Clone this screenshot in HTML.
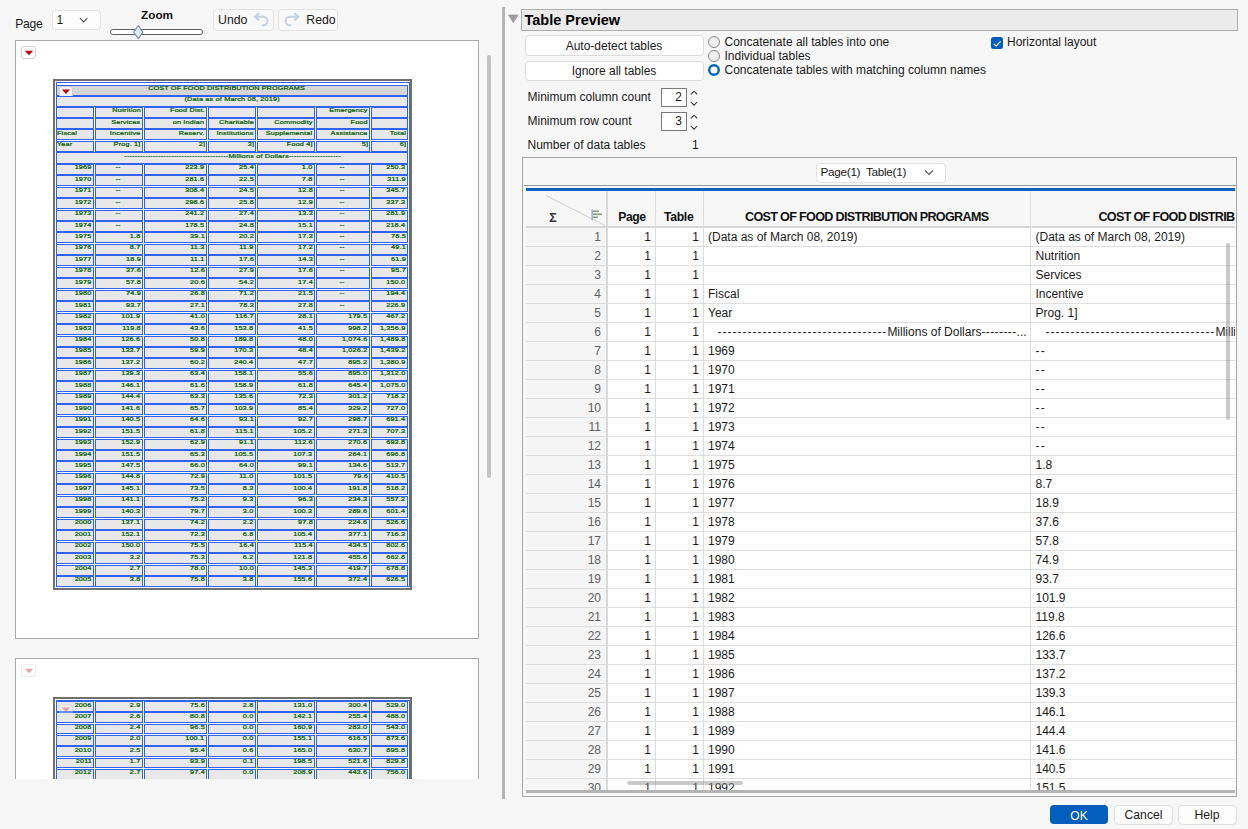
<!DOCTYPE html>
<html><head><meta charset="utf-8"><style>
html,body{margin:0;padding:0;}
body{width:1248px;height:829px;background:#f7f7f7;position:relative;overflow:hidden;font-family:"Liberation Sans", sans-serif;color:#1a1a1a;}
.r{position:absolute;}
.t{position:absolute;white-space:nowrap;font-family:"Liberation Sans", sans-serif;}
</style></head><body>
<div class="t" style="left:15.3px;top:17.86px;font-size:12.1px;line-height:12.1px;font-weight:normal;color:#1a1a1a;letter-spacing:-0.3px;">Page</div><div class="r" style="left:51.5px;top:9.5px;width:49px;height:20px;background:#fdfdfd;border:1px solid #e3e3e3;border-radius:4px;box-sizing:border-box;"></div><div class="t" style="left:56.5px;top:14.09px;font-size:12.3px;line-height:12.3px;font-weight:normal;color:#1a1a1a;">1</div><svg class="r" style="left:79px;top:17px" width="10" height="7"><path d="M1 1.2 L4.7 5 L8.4 1.2" fill="none" stroke="#555" stroke-width="1.1"/></svg><div class="t" style="left:141px;top:10.21px;font-size:11.8px;line-height:11.8px;font-weight:bold;color:#111;">Zoom</div><div class="r" style="left:110.3px;top:29px;width:93px;height:5.8px;background:#fff;border:1.1px solid #626262;border-radius:3px;box-sizing:border-box;"></div><svg class="r" style="left:133px;top:24.5px" width="11" height="15"><path d="M5.25 0.8 L9.9 7.1 L5.25 13.7 L0.6 7.1 Z" fill="#e2edf9" stroke="#6088b5" stroke-width="1.05"/></svg><div class="r" style="left:213px;top:9px;width:61px;height:22px;background:#f9f9f9;border:1px solid #e2e2e2;border-radius:4px;box-sizing:border-box;"></div><div class="t" style="left:218px;top:13.99px;font-size:12.3px;line-height:12.3px;font-weight:normal;color:#1a1a1a;">Undo</div><svg class="r" style="left:253px;top:12px" width="17" height="16"><path d="M6 1.3 L2 4.8 L6 8.3" fill="none" stroke="#c5d3e2" stroke-width="2.3" stroke-linejoin="miter"/><path d="M2.5 4.8 H10.3 A4.2 4.2 0 0 1 10.3 13.2 H8.8" fill="none" stroke="#c5d3e2" stroke-width="2.1"/></svg><div class="r" style="left:278px;top:9px;width:60px;height:22px;background:#f9f9f9;border:1px solid #e2e2e2;border-radius:4px;box-sizing:border-box;"></div><svg class="r" style="left:283px;top:12px" width="17" height="16"><path d="M11.3 1.3 L15.3 4.8 L11.3 8.3" fill="none" stroke="#c5d3e2" stroke-width="2.3" stroke-linejoin="miter"/><path d="M14.8 4.8 H6.8 A4.2 4.2 0 0 0 6.8 13.2 H8.3" fill="none" stroke="#c5d3e2" stroke-width="2.1"/></svg><div class="t" style="left:306.3px;top:13.99px;font-size:12.3px;line-height:12.3px;font-weight:normal;color:#1a1a1a;">Redo</div><div class="r" style="left:0;top:40px;width:500px;height:739px;overflow:hidden;"><div class="r" style="left:15px;top:0px;width:464px;height:599px;background:#fff;border:1px solid #a8a8a8;box-sizing:border-box;"></div><div class="r" style="left:21.3px;top:6.2px;width:14.5px;height:12.5px;background:#fff;border:1.4px solid #d0d0d0;border-radius:3px;box-sizing:border-box;"></div><svg class="r" style="left:23.5px;top:10px;" width="10" height="7"><path d="M0.8 0.8 L9.2 0.8 L5 5.2 Z" fill="#d00000"/></svg><div class="r" style="left:15px;top:618px;width:464px;height:599px;background:#fff;border:1px solid #a8a8a8;box-sizing:border-box;"></div><div class="r" style="left:21.3px;top:624.2px;width:14.5px;height:12.5px;background:#fff;border:1.4px solid #d0d0d0;border-radius:3px;box-sizing:border-box;opacity:0.35;"></div><svg class="r" style="left:23.5px;top:628px;opacity:0.35;" width="10" height="7"><path d="M0.8 0.8 L9.2 0.8 L5 5.2 Z" fill="#d00000"/></svg><div class="r" style="left:53px;top:39px;width:359px;height:511px;background:#fff;border-top:2px solid #6f6f6f;border-left:2px solid #6f6f6f;border-right:2px solid #6f6f6f;border-bottom:2px solid #6f6f6f;box-sizing:border-box;"></div><div class="r" style="left:56.0px;top:44.5px;width:352.0px;height:11.5px;background:#d6d6d6;border:1px solid #2f63f0;box-sizing:border-box;"></div><div class="t" style="left:56.0px;top:45.0px;width:353.0px;text-align:center;color:#005c00;font-size:5.8px;line-height:6px;font-weight:normal;letter-spacing:0.15px;-webkit-text-stroke:0.22px #005c00;"><span style="display:inline-block;transform:scaleX(1.25);transform-origin:50% 0"><span style="letter-spacing:0.1px;position:relative;top:0.2px">COST OF FOOD DISTRIBUTION PROGRAMS</span>&nbsp;&nbsp;&nbsp;&nbsp;&nbsp;</span></div><div class="r" style="left:59px;top:45.5px;width:14px;height:12px;background:#f4f4f4;border:1px solid #cfcfcf;border-radius:3px;box-sizing:border-box;"></div><svg class="r" style="left:61px;top:48.5px" width="10" height="6"><path d="M1 0.5 L9 0.5 L5 5 Z" fill="#c00000"/></svg><div class="r" style="left:56.0px;top:55.5px;width:352.0px;height:11.5px;background:#e8e8e8;border:1px solid #2f63f0;box-sizing:border-box;"></div><div class="t" style="left:56.0px;top:56.0px;width:353.0px;text-align:center;color:#005c00;font-size:5.8px;line-height:6px;font-weight:normal;letter-spacing:0.15px;-webkit-text-stroke:0.22px #005c00;"><span style="display:inline-block;transform:scaleX(1.25);transform-origin:50% 0"><span style="position:relative;top:0px">(Data as of March 08, 2019)</span></span></div><div class="r" style="left:56.0px;top:66.5px;width:38.0px;height:11.0px;background:#e8e8e8;border:1px solid #2f63f0;box-sizing:border-box;"></div><div class="r" style="left:95.0px;top:66.5px;width:48.0px;height:11.0px;background:#e8e8e8;border:1px solid #2f63f0;box-sizing:border-box;"></div><div class="t" style="left:95.5px;top:67.0px;width:45.2px;text-align:right;color:#005c00;font-size:5.8px;line-height:6px;font-weight:normal;letter-spacing:0.15px;-webkit-text-stroke:0.22px #005c00;"><span style="display:inline-block;transform:scaleX(1.25);transform-origin:100% 0">Nutrition</span></div><div class="r" style="left:144.0px;top:66.5px;width:63.0px;height:11.0px;background:#e8e8e8;border:1px solid #2f63f0;box-sizing:border-box;"></div><div class="t" style="left:144.5px;top:67.0px;width:60.2px;text-align:right;color:#005c00;font-size:5.8px;line-height:6px;font-weight:normal;letter-spacing:0.15px;-webkit-text-stroke:0.22px #005c00;"><span style="display:inline-block;transform:scaleX(1.25);transform-origin:100% 0">Food Dist.</span></div><div class="r" style="left:208.0px;top:66.5px;width:48.0px;height:11.0px;background:#e8e8e8;border:1px solid #2f63f0;box-sizing:border-box;"></div><div class="r" style="left:257.0px;top:66.5px;width:58.0px;height:11.0px;background:#e8e8e8;border:1px solid #2f63f0;box-sizing:border-box;"></div><div class="r" style="left:316.0px;top:66.5px;width:54.0px;height:11.0px;background:#e8e8e8;border:1px solid #2f63f0;box-sizing:border-box;"></div><div class="t" style="left:316.5px;top:67.0px;width:51.2px;text-align:right;color:#005c00;font-size:5.8px;line-height:6px;font-weight:normal;letter-spacing:0.15px;-webkit-text-stroke:0.22px #005c00;"><span style="display:inline-block;transform:scaleX(1.25);transform-origin:100% 0">Emergency</span></div><div class="r" style="left:371.0px;top:66.5px;width:37.0px;height:11.0px;background:#e8e8e8;border:1px solid #2f63f0;box-sizing:border-box;"></div><div class="r" style="left:56.0px;top:78.0px;width:38.0px;height:11.0px;background:#e8e8e8;border:1px solid #2f63f0;box-sizing:border-box;"></div><div class="r" style="left:95.0px;top:78.0px;width:48.0px;height:11.0px;background:#e8e8e8;border:1px solid #2f63f0;box-sizing:border-box;"></div><div class="t" style="left:95.5px;top:78.5px;width:45.2px;text-align:right;color:#005c00;font-size:5.8px;line-height:6px;font-weight:normal;letter-spacing:0.15px;-webkit-text-stroke:0.22px #005c00;"><span style="display:inline-block;transform:scaleX(1.25);transform-origin:100% 0">Services</span></div><div class="r" style="left:144.0px;top:78.0px;width:63.0px;height:11.0px;background:#e8e8e8;border:1px solid #2f63f0;box-sizing:border-box;"></div><div class="t" style="left:144.5px;top:78.5px;width:60.2px;text-align:right;color:#005c00;font-size:5.8px;line-height:6px;font-weight:normal;letter-spacing:0.15px;-webkit-text-stroke:0.22px #005c00;"><span style="display:inline-block;transform:scaleX(1.25);transform-origin:100% 0">on Indian</span></div><div class="r" style="left:208.0px;top:78.0px;width:48.0px;height:11.0px;background:#e8e8e8;border:1px solid #2f63f0;box-sizing:border-box;"></div><div class="t" style="left:208.5px;top:78.5px;width:45.2px;text-align:right;color:#005c00;font-size:5.8px;line-height:6px;font-weight:normal;letter-spacing:0.15px;-webkit-text-stroke:0.22px #005c00;"><span style="display:inline-block;transform:scaleX(1.25);transform-origin:100% 0">Charitable</span></div><div class="r" style="left:257.0px;top:78.0px;width:58.0px;height:11.0px;background:#e8e8e8;border:1px solid #2f63f0;box-sizing:border-box;"></div><div class="t" style="left:257.5px;top:78.5px;width:55.2px;text-align:right;color:#005c00;font-size:5.8px;line-height:6px;font-weight:normal;letter-spacing:0.15px;-webkit-text-stroke:0.22px #005c00;"><span style="display:inline-block;transform:scaleX(1.25);transform-origin:100% 0">Commodity</span></div><div class="r" style="left:316.0px;top:78.0px;width:54.0px;height:11.0px;background:#e8e8e8;border:1px solid #2f63f0;box-sizing:border-box;"></div><div class="t" style="left:316.5px;top:78.5px;width:51.2px;text-align:right;color:#005c00;font-size:5.8px;line-height:6px;font-weight:normal;letter-spacing:0.15px;-webkit-text-stroke:0.22px #005c00;"><span style="display:inline-block;transform:scaleX(1.25);transform-origin:100% 0">Food</span></div><div class="r" style="left:371.0px;top:78.0px;width:37.0px;height:11.0px;background:#e8e8e8;border:1px solid #2f63f0;box-sizing:border-box;"></div><div class="r" style="left:56.0px;top:89.4px;width:38.0px;height:11.0px;background:#e8e8e8;border:1px solid #2f63f0;box-sizing:border-box;"></div><div class="t" style="left:56.5px;top:89.9px;width:35.2px;text-align:left;color:#005c00;font-size:5.8px;line-height:6px;font-weight:normal;letter-spacing:0.15px;-webkit-text-stroke:0.22px #005c00;"><span style="display:inline-block;transform:scaleX(1.25);transform-origin:0 0">Fiscal</span></div><div class="r" style="left:95.0px;top:89.4px;width:48.0px;height:11.0px;background:#e8e8e8;border:1px solid #2f63f0;box-sizing:border-box;"></div><div class="t" style="left:95.5px;top:89.9px;width:45.2px;text-align:right;color:#005c00;font-size:5.8px;line-height:6px;font-weight:normal;letter-spacing:0.15px;-webkit-text-stroke:0.22px #005c00;"><span style="display:inline-block;transform:scaleX(1.25);transform-origin:100% 0">Incentive</span></div><div class="r" style="left:144.0px;top:89.4px;width:63.0px;height:11.0px;background:#e8e8e8;border:1px solid #2f63f0;box-sizing:border-box;"></div><div class="t" style="left:144.5px;top:89.9px;width:60.2px;text-align:right;color:#005c00;font-size:5.8px;line-height:6px;font-weight:normal;letter-spacing:0.15px;-webkit-text-stroke:0.22px #005c00;"><span style="display:inline-block;transform:scaleX(1.25);transform-origin:100% 0">Reserv.</span></div><div class="r" style="left:208.0px;top:89.4px;width:48.0px;height:11.0px;background:#e8e8e8;border:1px solid #2f63f0;box-sizing:border-box;"></div><div class="t" style="left:208.5px;top:89.9px;width:45.2px;text-align:right;color:#005c00;font-size:5.8px;line-height:6px;font-weight:normal;letter-spacing:0.15px;-webkit-text-stroke:0.22px #005c00;"><span style="display:inline-block;transform:scaleX(1.25);transform-origin:100% 0">Institutions</span></div><div class="r" style="left:257.0px;top:89.4px;width:58.0px;height:11.0px;background:#e8e8e8;border:1px solid #2f63f0;box-sizing:border-box;"></div><div class="t" style="left:257.5px;top:89.9px;width:55.2px;text-align:right;color:#005c00;font-size:5.8px;line-height:6px;font-weight:normal;letter-spacing:0.15px;-webkit-text-stroke:0.22px #005c00;"><span style="display:inline-block;transform:scaleX(1.25);transform-origin:100% 0">Supplemental</span></div><div class="r" style="left:316.0px;top:89.4px;width:54.0px;height:11.0px;background:#e8e8e8;border:1px solid #2f63f0;box-sizing:border-box;"></div><div class="t" style="left:316.5px;top:89.9px;width:51.2px;text-align:right;color:#005c00;font-size:5.8px;line-height:6px;font-weight:normal;letter-spacing:0.15px;-webkit-text-stroke:0.22px #005c00;"><span style="display:inline-block;transform:scaleX(1.25);transform-origin:100% 0">Assistance</span></div><div class="r" style="left:371.0px;top:89.4px;width:37.0px;height:11.0px;background:#e8e8e8;border:1px solid #2f63f0;box-sizing:border-box;"></div><div class="t" style="left:371.5px;top:89.9px;width:34.2px;text-align:right;color:#005c00;font-size:5.8px;line-height:6px;font-weight:normal;letter-spacing:0.15px;-webkit-text-stroke:0.22px #005c00;"><span style="display:inline-block;transform:scaleX(1.25);transform-origin:100% 0">Total</span></div><div class="r" style="left:56.0px;top:100.9px;width:38.0px;height:11.0px;background:#e8e8e8;border:1px solid #2f63f0;box-sizing:border-box;"></div><div class="t" style="left:56.5px;top:101.4px;width:35.2px;text-align:left;color:#005c00;font-size:5.8px;line-height:6px;font-weight:normal;letter-spacing:0.15px;-webkit-text-stroke:0.22px #005c00;"><span style="display:inline-block;transform:scaleX(1.25);transform-origin:0 0">Year</span></div><div class="r" style="left:95.0px;top:100.9px;width:48.0px;height:11.0px;background:#e8e8e8;border:1px solid #2f63f0;box-sizing:border-box;"></div><div class="t" style="left:95.5px;top:101.4px;width:45.2px;text-align:right;color:#005c00;font-size:5.8px;line-height:6px;font-weight:normal;letter-spacing:0.15px;-webkit-text-stroke:0.22px #005c00;"><span style="display:inline-block;transform:scaleX(1.25);transform-origin:100% 0">Prog. 1]</span></div><div class="r" style="left:144.0px;top:100.9px;width:63.0px;height:11.0px;background:#e8e8e8;border:1px solid #2f63f0;box-sizing:border-box;"></div><div class="t" style="left:144.5px;top:101.4px;width:60.2px;text-align:right;color:#005c00;font-size:5.8px;line-height:6px;font-weight:normal;letter-spacing:0.15px;-webkit-text-stroke:0.22px #005c00;"><span style="display:inline-block;transform:scaleX(1.25);transform-origin:100% 0">2]</span></div><div class="r" style="left:208.0px;top:100.9px;width:48.0px;height:11.0px;background:#e8e8e8;border:1px solid #2f63f0;box-sizing:border-box;"></div><div class="t" style="left:208.5px;top:101.4px;width:45.2px;text-align:right;color:#005c00;font-size:5.8px;line-height:6px;font-weight:normal;letter-spacing:0.15px;-webkit-text-stroke:0.22px #005c00;"><span style="display:inline-block;transform:scaleX(1.25);transform-origin:100% 0">3]</span></div><div class="r" style="left:257.0px;top:100.9px;width:58.0px;height:11.0px;background:#e8e8e8;border:1px solid #2f63f0;box-sizing:border-box;"></div><div class="t" style="left:257.5px;top:101.4px;width:55.2px;text-align:right;color:#005c00;font-size:5.8px;line-height:6px;font-weight:normal;letter-spacing:0.15px;-webkit-text-stroke:0.22px #005c00;"><span style="display:inline-block;transform:scaleX(1.25);transform-origin:100% 0">Food 4]</span></div><div class="r" style="left:316.0px;top:100.9px;width:54.0px;height:11.0px;background:#e8e8e8;border:1px solid #2f63f0;box-sizing:border-box;"></div><div class="t" style="left:316.5px;top:101.4px;width:51.2px;text-align:right;color:#005c00;font-size:5.8px;line-height:6px;font-weight:normal;letter-spacing:0.15px;-webkit-text-stroke:0.22px #005c00;"><span style="display:inline-block;transform:scaleX(1.25);transform-origin:100% 0">5]</span></div><div class="r" style="left:371.0px;top:100.9px;width:37.0px;height:11.0px;background:#e8e8e8;border:1px solid #2f63f0;box-sizing:border-box;"></div><div class="t" style="left:371.5px;top:101.4px;width:34.2px;text-align:right;color:#005c00;font-size:5.8px;line-height:6px;font-weight:normal;letter-spacing:0.15px;-webkit-text-stroke:0.22px #005c00;"><span style="display:inline-block;transform:scaleX(1.25);transform-origin:100% 0">6]</span></div><div class="r" style="left:56.0px;top:112.3px;width:352.0px;height:11.5px;background:#e8e8e8;border:1px solid #2f63f0;box-sizing:border-box;"></div><div class="t" style="left:56.0px;top:112.8px;width:353.0px;text-align:center;color:#005c00;font-size:5.8px;line-height:6px;font-weight:normal;letter-spacing:0.15px;-webkit-text-stroke:0.22px #005c00;"><span style="display:inline-block;transform:scaleX(1.25);transform-origin:50% 0">----------------------------------------Millions of Dollars--------------------</span></div><div class="r" style="left:56.0px;top:123.8px;width:38.0px;height:11.0px;background:#e8e8e8;border:1px solid #2f63f0;box-sizing:border-box;"></div><div class="t" style="left:56.5px;top:124.3px;width:35.2px;text-align:right;color:#005c00;font-size:5.8px;line-height:6px;font-weight:normal;letter-spacing:0.15px;-webkit-text-stroke:0.22px #005c00;"><span style="display:inline-block;transform:scaleX(1.25);transform-origin:100% 0">1969</span></div><div class="r" style="left:95.0px;top:123.8px;width:48.0px;height:11.0px;background:#e8e8e8;border:1px solid #2f63f0;box-sizing:border-box;"></div><div class="t" style="left:95.5px;top:124.3px;width:45.2px;text-align:center;color:#005c00;font-size:5.8px;line-height:6px;font-weight:normal;letter-spacing:0.15px;-webkit-text-stroke:0.22px #005c00;"><span style="display:inline-block;transform:scaleX(1.25);transform-origin:50% 0">--</span></div><div class="r" style="left:144.0px;top:123.8px;width:63.0px;height:11.0px;background:#e8e8e8;border:1px solid #2f63f0;box-sizing:border-box;"></div><div class="t" style="left:144.5px;top:124.3px;width:60.2px;text-align:right;color:#005c00;font-size:5.8px;line-height:6px;font-weight:normal;letter-spacing:0.15px;-webkit-text-stroke:0.22px #005c00;"><span style="display:inline-block;transform:scaleX(1.25);transform-origin:100% 0">223.9</span></div><div class="r" style="left:208.0px;top:123.8px;width:48.0px;height:11.0px;background:#e8e8e8;border:1px solid #2f63f0;box-sizing:border-box;"></div><div class="t" style="left:208.5px;top:124.3px;width:45.2px;text-align:right;color:#005c00;font-size:5.8px;line-height:6px;font-weight:normal;letter-spacing:0.15px;-webkit-text-stroke:0.22px #005c00;"><span style="display:inline-block;transform:scaleX(1.25);transform-origin:100% 0">25.4</span></div><div class="r" style="left:257.0px;top:123.8px;width:58.0px;height:11.0px;background:#e8e8e8;border:1px solid #2f63f0;box-sizing:border-box;"></div><div class="t" style="left:257.5px;top:124.3px;width:55.2px;text-align:right;color:#005c00;font-size:5.8px;line-height:6px;font-weight:normal;letter-spacing:0.15px;-webkit-text-stroke:0.22px #005c00;"><span style="display:inline-block;transform:scaleX(1.25);transform-origin:100% 0">1.0</span></div><div class="r" style="left:316.0px;top:123.8px;width:54.0px;height:11.0px;background:#e8e8e8;border:1px solid #2f63f0;box-sizing:border-box;"></div><div class="t" style="left:316.5px;top:124.3px;width:51.2px;text-align:center;color:#005c00;font-size:5.8px;line-height:6px;font-weight:normal;letter-spacing:0.15px;-webkit-text-stroke:0.22px #005c00;"><span style="display:inline-block;transform:scaleX(1.25);transform-origin:50% 0">--</span></div><div class="r" style="left:371.0px;top:123.8px;width:37.0px;height:11.0px;background:#e8e8e8;border:1px solid #2f63f0;box-sizing:border-box;"></div><div class="t" style="left:371.5px;top:124.3px;width:34.2px;text-align:right;color:#005c00;font-size:5.8px;line-height:6px;font-weight:normal;letter-spacing:0.15px;-webkit-text-stroke:0.22px #005c00;"><span style="display:inline-block;transform:scaleX(1.25);transform-origin:100% 0">250.3</span></div><div class="r" style="left:56.0px;top:135.2px;width:38.0px;height:11.0px;background:#e8e8e8;border:1px solid #2f63f0;box-sizing:border-box;"></div><div class="t" style="left:56.5px;top:135.7px;width:35.2px;text-align:right;color:#005c00;font-size:5.8px;line-height:6px;font-weight:normal;letter-spacing:0.15px;-webkit-text-stroke:0.22px #005c00;"><span style="display:inline-block;transform:scaleX(1.25);transform-origin:100% 0">1970</span></div><div class="r" style="left:95.0px;top:135.2px;width:48.0px;height:11.0px;background:#e8e8e8;border:1px solid #2f63f0;box-sizing:border-box;"></div><div class="t" style="left:95.5px;top:135.7px;width:45.2px;text-align:center;color:#005c00;font-size:5.8px;line-height:6px;font-weight:normal;letter-spacing:0.15px;-webkit-text-stroke:0.22px #005c00;"><span style="display:inline-block;transform:scaleX(1.25);transform-origin:50% 0">--</span></div><div class="r" style="left:144.0px;top:135.2px;width:63.0px;height:11.0px;background:#e8e8e8;border:1px solid #2f63f0;box-sizing:border-box;"></div><div class="t" style="left:144.5px;top:135.7px;width:60.2px;text-align:right;color:#005c00;font-size:5.8px;line-height:6px;font-weight:normal;letter-spacing:0.15px;-webkit-text-stroke:0.22px #005c00;"><span style="display:inline-block;transform:scaleX(1.25);transform-origin:100% 0">281.6</span></div><div class="r" style="left:208.0px;top:135.2px;width:48.0px;height:11.0px;background:#e8e8e8;border:1px solid #2f63f0;box-sizing:border-box;"></div><div class="t" style="left:208.5px;top:135.7px;width:45.2px;text-align:right;color:#005c00;font-size:5.8px;line-height:6px;font-weight:normal;letter-spacing:0.15px;-webkit-text-stroke:0.22px #005c00;"><span style="display:inline-block;transform:scaleX(1.25);transform-origin:100% 0">22.5</span></div><div class="r" style="left:257.0px;top:135.2px;width:58.0px;height:11.0px;background:#e8e8e8;border:1px solid #2f63f0;box-sizing:border-box;"></div><div class="t" style="left:257.5px;top:135.7px;width:55.2px;text-align:right;color:#005c00;font-size:5.8px;line-height:6px;font-weight:normal;letter-spacing:0.15px;-webkit-text-stroke:0.22px #005c00;"><span style="display:inline-block;transform:scaleX(1.25);transform-origin:100% 0">7.8</span></div><div class="r" style="left:316.0px;top:135.2px;width:54.0px;height:11.0px;background:#e8e8e8;border:1px solid #2f63f0;box-sizing:border-box;"></div><div class="t" style="left:316.5px;top:135.7px;width:51.2px;text-align:center;color:#005c00;font-size:5.8px;line-height:6px;font-weight:normal;letter-spacing:0.15px;-webkit-text-stroke:0.22px #005c00;"><span style="display:inline-block;transform:scaleX(1.25);transform-origin:50% 0">--</span></div><div class="r" style="left:371.0px;top:135.2px;width:37.0px;height:11.0px;background:#e8e8e8;border:1px solid #2f63f0;box-sizing:border-box;"></div><div class="t" style="left:371.5px;top:135.7px;width:34.2px;text-align:right;color:#005c00;font-size:5.8px;line-height:6px;font-weight:normal;letter-spacing:0.15px;-webkit-text-stroke:0.22px #005c00;"><span style="display:inline-block;transform:scaleX(1.25);transform-origin:100% 0">311.9</span></div><div class="r" style="left:56.0px;top:146.7px;width:38.0px;height:11.0px;background:#e8e8e8;border:1px solid #2f63f0;box-sizing:border-box;"></div><div class="t" style="left:56.5px;top:147.2px;width:35.2px;text-align:right;color:#005c00;font-size:5.8px;line-height:6px;font-weight:normal;letter-spacing:0.15px;-webkit-text-stroke:0.22px #005c00;"><span style="display:inline-block;transform:scaleX(1.25);transform-origin:100% 0">1971</span></div><div class="r" style="left:95.0px;top:146.7px;width:48.0px;height:11.0px;background:#e8e8e8;border:1px solid #2f63f0;box-sizing:border-box;"></div><div class="t" style="left:95.5px;top:147.2px;width:45.2px;text-align:center;color:#005c00;font-size:5.8px;line-height:6px;font-weight:normal;letter-spacing:0.15px;-webkit-text-stroke:0.22px #005c00;"><span style="display:inline-block;transform:scaleX(1.25);transform-origin:50% 0">--</span></div><div class="r" style="left:144.0px;top:146.7px;width:63.0px;height:11.0px;background:#e8e8e8;border:1px solid #2f63f0;box-sizing:border-box;"></div><div class="t" style="left:144.5px;top:147.2px;width:60.2px;text-align:right;color:#005c00;font-size:5.8px;line-height:6px;font-weight:normal;letter-spacing:0.15px;-webkit-text-stroke:0.22px #005c00;"><span style="display:inline-block;transform:scaleX(1.25);transform-origin:100% 0">308.4</span></div><div class="r" style="left:208.0px;top:146.7px;width:48.0px;height:11.0px;background:#e8e8e8;border:1px solid #2f63f0;box-sizing:border-box;"></div><div class="t" style="left:208.5px;top:147.2px;width:45.2px;text-align:right;color:#005c00;font-size:5.8px;line-height:6px;font-weight:normal;letter-spacing:0.15px;-webkit-text-stroke:0.22px #005c00;"><span style="display:inline-block;transform:scaleX(1.25);transform-origin:100% 0">24.5</span></div><div class="r" style="left:257.0px;top:146.7px;width:58.0px;height:11.0px;background:#e8e8e8;border:1px solid #2f63f0;box-sizing:border-box;"></div><div class="t" style="left:257.5px;top:147.2px;width:55.2px;text-align:right;color:#005c00;font-size:5.8px;line-height:6px;font-weight:normal;letter-spacing:0.15px;-webkit-text-stroke:0.22px #005c00;"><span style="display:inline-block;transform:scaleX(1.25);transform-origin:100% 0">12.8</span></div><div class="r" style="left:316.0px;top:146.7px;width:54.0px;height:11.0px;background:#e8e8e8;border:1px solid #2f63f0;box-sizing:border-box;"></div><div class="t" style="left:316.5px;top:147.2px;width:51.2px;text-align:center;color:#005c00;font-size:5.8px;line-height:6px;font-weight:normal;letter-spacing:0.15px;-webkit-text-stroke:0.22px #005c00;"><span style="display:inline-block;transform:scaleX(1.25);transform-origin:50% 0">--</span></div><div class="r" style="left:371.0px;top:146.7px;width:37.0px;height:11.0px;background:#e8e8e8;border:1px solid #2f63f0;box-sizing:border-box;"></div><div class="t" style="left:371.5px;top:147.2px;width:34.2px;text-align:right;color:#005c00;font-size:5.8px;line-height:6px;font-weight:normal;letter-spacing:0.15px;-webkit-text-stroke:0.22px #005c00;"><span style="display:inline-block;transform:scaleX(1.25);transform-origin:100% 0">345.7</span></div><div class="r" style="left:56.0px;top:158.1px;width:38.0px;height:11.0px;background:#e8e8e8;border:1px solid #2f63f0;box-sizing:border-box;"></div><div class="t" style="left:56.5px;top:158.6px;width:35.2px;text-align:right;color:#005c00;font-size:5.8px;line-height:6px;font-weight:normal;letter-spacing:0.15px;-webkit-text-stroke:0.22px #005c00;"><span style="display:inline-block;transform:scaleX(1.25);transform-origin:100% 0">1972</span></div><div class="r" style="left:95.0px;top:158.1px;width:48.0px;height:11.0px;background:#e8e8e8;border:1px solid #2f63f0;box-sizing:border-box;"></div><div class="t" style="left:95.5px;top:158.6px;width:45.2px;text-align:center;color:#005c00;font-size:5.8px;line-height:6px;font-weight:normal;letter-spacing:0.15px;-webkit-text-stroke:0.22px #005c00;"><span style="display:inline-block;transform:scaleX(1.25);transform-origin:50% 0">--</span></div><div class="r" style="left:144.0px;top:158.1px;width:63.0px;height:11.0px;background:#e8e8e8;border:1px solid #2f63f0;box-sizing:border-box;"></div><div class="t" style="left:144.5px;top:158.6px;width:60.2px;text-align:right;color:#005c00;font-size:5.8px;line-height:6px;font-weight:normal;letter-spacing:0.15px;-webkit-text-stroke:0.22px #005c00;"><span style="display:inline-block;transform:scaleX(1.25);transform-origin:100% 0">298.6</span></div><div class="r" style="left:208.0px;top:158.1px;width:48.0px;height:11.0px;background:#e8e8e8;border:1px solid #2f63f0;box-sizing:border-box;"></div><div class="t" style="left:208.5px;top:158.6px;width:45.2px;text-align:right;color:#005c00;font-size:5.8px;line-height:6px;font-weight:normal;letter-spacing:0.15px;-webkit-text-stroke:0.22px #005c00;"><span style="display:inline-block;transform:scaleX(1.25);transform-origin:100% 0">25.8</span></div><div class="r" style="left:257.0px;top:158.1px;width:58.0px;height:11.0px;background:#e8e8e8;border:1px solid #2f63f0;box-sizing:border-box;"></div><div class="t" style="left:257.5px;top:158.6px;width:55.2px;text-align:right;color:#005c00;font-size:5.8px;line-height:6px;font-weight:normal;letter-spacing:0.15px;-webkit-text-stroke:0.22px #005c00;"><span style="display:inline-block;transform:scaleX(1.25);transform-origin:100% 0">12.9</span></div><div class="r" style="left:316.0px;top:158.1px;width:54.0px;height:11.0px;background:#e8e8e8;border:1px solid #2f63f0;box-sizing:border-box;"></div><div class="t" style="left:316.5px;top:158.6px;width:51.2px;text-align:center;color:#005c00;font-size:5.8px;line-height:6px;font-weight:normal;letter-spacing:0.15px;-webkit-text-stroke:0.22px #005c00;"><span style="display:inline-block;transform:scaleX(1.25);transform-origin:50% 0">--</span></div><div class="r" style="left:371.0px;top:158.1px;width:37.0px;height:11.0px;background:#e8e8e8;border:1px solid #2f63f0;box-sizing:border-box;"></div><div class="t" style="left:371.5px;top:158.6px;width:34.2px;text-align:right;color:#005c00;font-size:5.8px;line-height:6px;font-weight:normal;letter-spacing:0.15px;-webkit-text-stroke:0.22px #005c00;"><span style="display:inline-block;transform:scaleX(1.25);transform-origin:100% 0">337.3</span></div><div class="r" style="left:56.0px;top:169.5px;width:38.0px;height:11.0px;background:#e8e8e8;border:1px solid #2f63f0;box-sizing:border-box;"></div><div class="t" style="left:56.5px;top:170.0px;width:35.2px;text-align:right;color:#005c00;font-size:5.8px;line-height:6px;font-weight:normal;letter-spacing:0.15px;-webkit-text-stroke:0.22px #005c00;"><span style="display:inline-block;transform:scaleX(1.25);transform-origin:100% 0">1973</span></div><div class="r" style="left:95.0px;top:169.5px;width:48.0px;height:11.0px;background:#e8e8e8;border:1px solid #2f63f0;box-sizing:border-box;"></div><div class="t" style="left:95.5px;top:170.0px;width:45.2px;text-align:center;color:#005c00;font-size:5.8px;line-height:6px;font-weight:normal;letter-spacing:0.15px;-webkit-text-stroke:0.22px #005c00;"><span style="display:inline-block;transform:scaleX(1.25);transform-origin:50% 0">--</span></div><div class="r" style="left:144.0px;top:169.5px;width:63.0px;height:11.0px;background:#e8e8e8;border:1px solid #2f63f0;box-sizing:border-box;"></div><div class="t" style="left:144.5px;top:170.0px;width:60.2px;text-align:right;color:#005c00;font-size:5.8px;line-height:6px;font-weight:normal;letter-spacing:0.15px;-webkit-text-stroke:0.22px #005c00;"><span style="display:inline-block;transform:scaleX(1.25);transform-origin:100% 0">241.2</span></div><div class="r" style="left:208.0px;top:169.5px;width:48.0px;height:11.0px;background:#e8e8e8;border:1px solid #2f63f0;box-sizing:border-box;"></div><div class="t" style="left:208.5px;top:170.0px;width:45.2px;text-align:right;color:#005c00;font-size:5.8px;line-height:6px;font-weight:normal;letter-spacing:0.15px;-webkit-text-stroke:0.22px #005c00;"><span style="display:inline-block;transform:scaleX(1.25);transform-origin:100% 0">27.4</span></div><div class="r" style="left:257.0px;top:169.5px;width:58.0px;height:11.0px;background:#e8e8e8;border:1px solid #2f63f0;box-sizing:border-box;"></div><div class="t" style="left:257.5px;top:170.0px;width:55.2px;text-align:right;color:#005c00;font-size:5.8px;line-height:6px;font-weight:normal;letter-spacing:0.15px;-webkit-text-stroke:0.22px #005c00;"><span style="display:inline-block;transform:scaleX(1.25);transform-origin:100% 0">13.3</span></div><div class="r" style="left:316.0px;top:169.5px;width:54.0px;height:11.0px;background:#e8e8e8;border:1px solid #2f63f0;box-sizing:border-box;"></div><div class="t" style="left:316.5px;top:170.0px;width:51.2px;text-align:center;color:#005c00;font-size:5.8px;line-height:6px;font-weight:normal;letter-spacing:0.15px;-webkit-text-stroke:0.22px #005c00;"><span style="display:inline-block;transform:scaleX(1.25);transform-origin:50% 0">--</span></div><div class="r" style="left:371.0px;top:169.5px;width:37.0px;height:11.0px;background:#e8e8e8;border:1px solid #2f63f0;box-sizing:border-box;"></div><div class="t" style="left:371.5px;top:170.0px;width:34.2px;text-align:right;color:#005c00;font-size:5.8px;line-height:6px;font-weight:normal;letter-spacing:0.15px;-webkit-text-stroke:0.22px #005c00;"><span style="display:inline-block;transform:scaleX(1.25);transform-origin:100% 0">281.9</span></div><div class="r" style="left:56.0px;top:181.0px;width:38.0px;height:11.0px;background:#e8e8e8;border:1px solid #2f63f0;box-sizing:border-box;"></div><div class="t" style="left:56.5px;top:181.5px;width:35.2px;text-align:right;color:#005c00;font-size:5.8px;line-height:6px;font-weight:normal;letter-spacing:0.15px;-webkit-text-stroke:0.22px #005c00;"><span style="display:inline-block;transform:scaleX(1.25);transform-origin:100% 0">1974</span></div><div class="r" style="left:95.0px;top:181.0px;width:48.0px;height:11.0px;background:#e8e8e8;border:1px solid #2f63f0;box-sizing:border-box;"></div><div class="t" style="left:95.5px;top:181.5px;width:45.2px;text-align:center;color:#005c00;font-size:5.8px;line-height:6px;font-weight:normal;letter-spacing:0.15px;-webkit-text-stroke:0.22px #005c00;"><span style="display:inline-block;transform:scaleX(1.25);transform-origin:50% 0">--</span></div><div class="r" style="left:144.0px;top:181.0px;width:63.0px;height:11.0px;background:#e8e8e8;border:1px solid #2f63f0;box-sizing:border-box;"></div><div class="t" style="left:144.5px;top:181.5px;width:60.2px;text-align:right;color:#005c00;font-size:5.8px;line-height:6px;font-weight:normal;letter-spacing:0.15px;-webkit-text-stroke:0.22px #005c00;"><span style="display:inline-block;transform:scaleX(1.25);transform-origin:100% 0">178.5</span></div><div class="r" style="left:208.0px;top:181.0px;width:48.0px;height:11.0px;background:#e8e8e8;border:1px solid #2f63f0;box-sizing:border-box;"></div><div class="t" style="left:208.5px;top:181.5px;width:45.2px;text-align:right;color:#005c00;font-size:5.8px;line-height:6px;font-weight:normal;letter-spacing:0.15px;-webkit-text-stroke:0.22px #005c00;"><span style="display:inline-block;transform:scaleX(1.25);transform-origin:100% 0">24.8</span></div><div class="r" style="left:257.0px;top:181.0px;width:58.0px;height:11.0px;background:#e8e8e8;border:1px solid #2f63f0;box-sizing:border-box;"></div><div class="t" style="left:257.5px;top:181.5px;width:55.2px;text-align:right;color:#005c00;font-size:5.8px;line-height:6px;font-weight:normal;letter-spacing:0.15px;-webkit-text-stroke:0.22px #005c00;"><span style="display:inline-block;transform:scaleX(1.25);transform-origin:100% 0">15.1</span></div><div class="r" style="left:316.0px;top:181.0px;width:54.0px;height:11.0px;background:#e8e8e8;border:1px solid #2f63f0;box-sizing:border-box;"></div><div class="t" style="left:316.5px;top:181.5px;width:51.2px;text-align:center;color:#005c00;font-size:5.8px;line-height:6px;font-weight:normal;letter-spacing:0.15px;-webkit-text-stroke:0.22px #005c00;"><span style="display:inline-block;transform:scaleX(1.25);transform-origin:50% 0">--</span></div><div class="r" style="left:371.0px;top:181.0px;width:37.0px;height:11.0px;background:#e8e8e8;border:1px solid #2f63f0;box-sizing:border-box;"></div><div class="t" style="left:371.5px;top:181.5px;width:34.2px;text-align:right;color:#005c00;font-size:5.8px;line-height:6px;font-weight:normal;letter-spacing:0.15px;-webkit-text-stroke:0.22px #005c00;"><span style="display:inline-block;transform:scaleX(1.25);transform-origin:100% 0">218.4</span></div><div class="r" style="left:56.0px;top:192.4px;width:38.0px;height:11.0px;background:#e8e8e8;border:1px solid #2f63f0;box-sizing:border-box;"></div><div class="t" style="left:56.5px;top:192.9px;width:35.2px;text-align:right;color:#005c00;font-size:5.8px;line-height:6px;font-weight:normal;letter-spacing:0.15px;-webkit-text-stroke:0.22px #005c00;"><span style="display:inline-block;transform:scaleX(1.25);transform-origin:100% 0">1975</span></div><div class="r" style="left:95.0px;top:192.4px;width:48.0px;height:11.0px;background:#e8e8e8;border:1px solid #2f63f0;box-sizing:border-box;"></div><div class="t" style="left:95.5px;top:192.9px;width:45.2px;text-align:right;color:#005c00;font-size:5.8px;line-height:6px;font-weight:normal;letter-spacing:0.15px;-webkit-text-stroke:0.22px #005c00;"><span style="display:inline-block;transform:scaleX(1.25);transform-origin:100% 0">1.8</span></div><div class="r" style="left:144.0px;top:192.4px;width:63.0px;height:11.0px;background:#e8e8e8;border:1px solid #2f63f0;box-sizing:border-box;"></div><div class="t" style="left:144.5px;top:192.9px;width:60.2px;text-align:right;color:#005c00;font-size:5.8px;line-height:6px;font-weight:normal;letter-spacing:0.15px;-webkit-text-stroke:0.22px #005c00;"><span style="display:inline-block;transform:scaleX(1.25);transform-origin:100% 0">39.1</span></div><div class="r" style="left:208.0px;top:192.4px;width:48.0px;height:11.0px;background:#e8e8e8;border:1px solid #2f63f0;box-sizing:border-box;"></div><div class="t" style="left:208.5px;top:192.9px;width:45.2px;text-align:right;color:#005c00;font-size:5.8px;line-height:6px;font-weight:normal;letter-spacing:0.15px;-webkit-text-stroke:0.22px #005c00;"><span style="display:inline-block;transform:scaleX(1.25);transform-origin:100% 0">20.2</span></div><div class="r" style="left:257.0px;top:192.4px;width:58.0px;height:11.0px;background:#e8e8e8;border:1px solid #2f63f0;box-sizing:border-box;"></div><div class="t" style="left:257.5px;top:192.9px;width:55.2px;text-align:right;color:#005c00;font-size:5.8px;line-height:6px;font-weight:normal;letter-spacing:0.15px;-webkit-text-stroke:0.22px #005c00;"><span style="display:inline-block;transform:scaleX(1.25);transform-origin:100% 0">17.3</span></div><div class="r" style="left:316.0px;top:192.4px;width:54.0px;height:11.0px;background:#e8e8e8;border:1px solid #2f63f0;box-sizing:border-box;"></div><div class="t" style="left:316.5px;top:192.9px;width:51.2px;text-align:center;color:#005c00;font-size:5.8px;line-height:6px;font-weight:normal;letter-spacing:0.15px;-webkit-text-stroke:0.22px #005c00;"><span style="display:inline-block;transform:scaleX(1.25);transform-origin:50% 0">--</span></div><div class="r" style="left:371.0px;top:192.4px;width:37.0px;height:11.0px;background:#e8e8e8;border:1px solid #2f63f0;box-sizing:border-box;"></div><div class="t" style="left:371.5px;top:192.9px;width:34.2px;text-align:right;color:#005c00;font-size:5.8px;line-height:6px;font-weight:normal;letter-spacing:0.15px;-webkit-text-stroke:0.22px #005c00;"><span style="display:inline-block;transform:scaleX(1.25);transform-origin:100% 0">78.5</span></div><div class="r" style="left:56.0px;top:203.9px;width:38.0px;height:11.0px;background:#e8e8e8;border:1px solid #2f63f0;box-sizing:border-box;"></div><div class="t" style="left:56.5px;top:204.4px;width:35.2px;text-align:right;color:#005c00;font-size:5.8px;line-height:6px;font-weight:normal;letter-spacing:0.15px;-webkit-text-stroke:0.22px #005c00;"><span style="display:inline-block;transform:scaleX(1.25);transform-origin:100% 0">1976</span></div><div class="r" style="left:95.0px;top:203.9px;width:48.0px;height:11.0px;background:#e8e8e8;border:1px solid #2f63f0;box-sizing:border-box;"></div><div class="t" style="left:95.5px;top:204.4px;width:45.2px;text-align:right;color:#005c00;font-size:5.8px;line-height:6px;font-weight:normal;letter-spacing:0.15px;-webkit-text-stroke:0.22px #005c00;"><span style="display:inline-block;transform:scaleX(1.25);transform-origin:100% 0">8.7</span></div><div class="r" style="left:144.0px;top:203.9px;width:63.0px;height:11.0px;background:#e8e8e8;border:1px solid #2f63f0;box-sizing:border-box;"></div><div class="t" style="left:144.5px;top:204.4px;width:60.2px;text-align:right;color:#005c00;font-size:5.8px;line-height:6px;font-weight:normal;letter-spacing:0.15px;-webkit-text-stroke:0.22px #005c00;"><span style="display:inline-block;transform:scaleX(1.25);transform-origin:100% 0">11.3</span></div><div class="r" style="left:208.0px;top:203.9px;width:48.0px;height:11.0px;background:#e8e8e8;border:1px solid #2f63f0;box-sizing:border-box;"></div><div class="t" style="left:208.5px;top:204.4px;width:45.2px;text-align:right;color:#005c00;font-size:5.8px;line-height:6px;font-weight:normal;letter-spacing:0.15px;-webkit-text-stroke:0.22px #005c00;"><span style="display:inline-block;transform:scaleX(1.25);transform-origin:100% 0">11.9</span></div><div class="r" style="left:257.0px;top:203.9px;width:58.0px;height:11.0px;background:#e8e8e8;border:1px solid #2f63f0;box-sizing:border-box;"></div><div class="t" style="left:257.5px;top:204.4px;width:55.2px;text-align:right;color:#005c00;font-size:5.8px;line-height:6px;font-weight:normal;letter-spacing:0.15px;-webkit-text-stroke:0.22px #005c00;"><span style="display:inline-block;transform:scaleX(1.25);transform-origin:100% 0">17.2</span></div><div class="r" style="left:316.0px;top:203.9px;width:54.0px;height:11.0px;background:#e8e8e8;border:1px solid #2f63f0;box-sizing:border-box;"></div><div class="t" style="left:316.5px;top:204.4px;width:51.2px;text-align:center;color:#005c00;font-size:5.8px;line-height:6px;font-weight:normal;letter-spacing:0.15px;-webkit-text-stroke:0.22px #005c00;"><span style="display:inline-block;transform:scaleX(1.25);transform-origin:50% 0">--</span></div><div class="r" style="left:371.0px;top:203.9px;width:37.0px;height:11.0px;background:#e8e8e8;border:1px solid #2f63f0;box-sizing:border-box;"></div><div class="t" style="left:371.5px;top:204.4px;width:34.2px;text-align:right;color:#005c00;font-size:5.8px;line-height:6px;font-weight:normal;letter-spacing:0.15px;-webkit-text-stroke:0.22px #005c00;"><span style="display:inline-block;transform:scaleX(1.25);transform-origin:100% 0">49.1</span></div><div class="r" style="left:56.0px;top:215.3px;width:38.0px;height:11.0px;background:#e8e8e8;border:1px solid #2f63f0;box-sizing:border-box;"></div><div class="t" style="left:56.5px;top:215.8px;width:35.2px;text-align:right;color:#005c00;font-size:5.8px;line-height:6px;font-weight:normal;letter-spacing:0.15px;-webkit-text-stroke:0.22px #005c00;"><span style="display:inline-block;transform:scaleX(1.25);transform-origin:100% 0">1977</span></div><div class="r" style="left:95.0px;top:215.3px;width:48.0px;height:11.0px;background:#e8e8e8;border:1px solid #2f63f0;box-sizing:border-box;"></div><div class="t" style="left:95.5px;top:215.8px;width:45.2px;text-align:right;color:#005c00;font-size:5.8px;line-height:6px;font-weight:normal;letter-spacing:0.15px;-webkit-text-stroke:0.22px #005c00;"><span style="display:inline-block;transform:scaleX(1.25);transform-origin:100% 0">18.9</span></div><div class="r" style="left:144.0px;top:215.3px;width:63.0px;height:11.0px;background:#e8e8e8;border:1px solid #2f63f0;box-sizing:border-box;"></div><div class="t" style="left:144.5px;top:215.8px;width:60.2px;text-align:right;color:#005c00;font-size:5.8px;line-height:6px;font-weight:normal;letter-spacing:0.15px;-webkit-text-stroke:0.22px #005c00;"><span style="display:inline-block;transform:scaleX(1.25);transform-origin:100% 0">11.1</span></div><div class="r" style="left:208.0px;top:215.3px;width:48.0px;height:11.0px;background:#e8e8e8;border:1px solid #2f63f0;box-sizing:border-box;"></div><div class="t" style="left:208.5px;top:215.8px;width:45.2px;text-align:right;color:#005c00;font-size:5.8px;line-height:6px;font-weight:normal;letter-spacing:0.15px;-webkit-text-stroke:0.22px #005c00;"><span style="display:inline-block;transform:scaleX(1.25);transform-origin:100% 0">17.6</span></div><div class="r" style="left:257.0px;top:215.3px;width:58.0px;height:11.0px;background:#e8e8e8;border:1px solid #2f63f0;box-sizing:border-box;"></div><div class="t" style="left:257.5px;top:215.8px;width:55.2px;text-align:right;color:#005c00;font-size:5.8px;line-height:6px;font-weight:normal;letter-spacing:0.15px;-webkit-text-stroke:0.22px #005c00;"><span style="display:inline-block;transform:scaleX(1.25);transform-origin:100% 0">14.3</span></div><div class="r" style="left:316.0px;top:215.3px;width:54.0px;height:11.0px;background:#e8e8e8;border:1px solid #2f63f0;box-sizing:border-box;"></div><div class="t" style="left:316.5px;top:215.8px;width:51.2px;text-align:center;color:#005c00;font-size:5.8px;line-height:6px;font-weight:normal;letter-spacing:0.15px;-webkit-text-stroke:0.22px #005c00;"><span style="display:inline-block;transform:scaleX(1.25);transform-origin:50% 0">--</span></div><div class="r" style="left:371.0px;top:215.3px;width:37.0px;height:11.0px;background:#e8e8e8;border:1px solid #2f63f0;box-sizing:border-box;"></div><div class="t" style="left:371.5px;top:215.8px;width:34.2px;text-align:right;color:#005c00;font-size:5.8px;line-height:6px;font-weight:normal;letter-spacing:0.15px;-webkit-text-stroke:0.22px #005c00;"><span style="display:inline-block;transform:scaleX(1.25);transform-origin:100% 0">61.9</span></div><div class="r" style="left:56.0px;top:226.8px;width:38.0px;height:11.0px;background:#e8e8e8;border:1px solid #2f63f0;box-sizing:border-box;"></div><div class="t" style="left:56.5px;top:227.3px;width:35.2px;text-align:right;color:#005c00;font-size:5.8px;line-height:6px;font-weight:normal;letter-spacing:0.15px;-webkit-text-stroke:0.22px #005c00;"><span style="display:inline-block;transform:scaleX(1.25);transform-origin:100% 0">1978</span></div><div class="r" style="left:95.0px;top:226.8px;width:48.0px;height:11.0px;background:#e8e8e8;border:1px solid #2f63f0;box-sizing:border-box;"></div><div class="t" style="left:95.5px;top:227.3px;width:45.2px;text-align:right;color:#005c00;font-size:5.8px;line-height:6px;font-weight:normal;letter-spacing:0.15px;-webkit-text-stroke:0.22px #005c00;"><span style="display:inline-block;transform:scaleX(1.25);transform-origin:100% 0">37.6</span></div><div class="r" style="left:144.0px;top:226.8px;width:63.0px;height:11.0px;background:#e8e8e8;border:1px solid #2f63f0;box-sizing:border-box;"></div><div class="t" style="left:144.5px;top:227.3px;width:60.2px;text-align:right;color:#005c00;font-size:5.8px;line-height:6px;font-weight:normal;letter-spacing:0.15px;-webkit-text-stroke:0.22px #005c00;"><span style="display:inline-block;transform:scaleX(1.25);transform-origin:100% 0">12.6</span></div><div class="r" style="left:208.0px;top:226.8px;width:48.0px;height:11.0px;background:#e8e8e8;border:1px solid #2f63f0;box-sizing:border-box;"></div><div class="t" style="left:208.5px;top:227.3px;width:45.2px;text-align:right;color:#005c00;font-size:5.8px;line-height:6px;font-weight:normal;letter-spacing:0.15px;-webkit-text-stroke:0.22px #005c00;"><span style="display:inline-block;transform:scaleX(1.25);transform-origin:100% 0">27.9</span></div><div class="r" style="left:257.0px;top:226.8px;width:58.0px;height:11.0px;background:#e8e8e8;border:1px solid #2f63f0;box-sizing:border-box;"></div><div class="t" style="left:257.5px;top:227.3px;width:55.2px;text-align:right;color:#005c00;font-size:5.8px;line-height:6px;font-weight:normal;letter-spacing:0.15px;-webkit-text-stroke:0.22px #005c00;"><span style="display:inline-block;transform:scaleX(1.25);transform-origin:100% 0">17.6</span></div><div class="r" style="left:316.0px;top:226.8px;width:54.0px;height:11.0px;background:#e8e8e8;border:1px solid #2f63f0;box-sizing:border-box;"></div><div class="t" style="left:316.5px;top:227.3px;width:51.2px;text-align:center;color:#005c00;font-size:5.8px;line-height:6px;font-weight:normal;letter-spacing:0.15px;-webkit-text-stroke:0.22px #005c00;"><span style="display:inline-block;transform:scaleX(1.25);transform-origin:50% 0">--</span></div><div class="r" style="left:371.0px;top:226.8px;width:37.0px;height:11.0px;background:#e8e8e8;border:1px solid #2f63f0;box-sizing:border-box;"></div><div class="t" style="left:371.5px;top:227.3px;width:34.2px;text-align:right;color:#005c00;font-size:5.8px;line-height:6px;font-weight:normal;letter-spacing:0.15px;-webkit-text-stroke:0.22px #005c00;"><span style="display:inline-block;transform:scaleX(1.25);transform-origin:100% 0">95.7</span></div><div class="r" style="left:56.0px;top:238.2px;width:38.0px;height:11.0px;background:#e8e8e8;border:1px solid #2f63f0;box-sizing:border-box;"></div><div class="t" style="left:56.5px;top:238.7px;width:35.2px;text-align:right;color:#005c00;font-size:5.8px;line-height:6px;font-weight:normal;letter-spacing:0.15px;-webkit-text-stroke:0.22px #005c00;"><span style="display:inline-block;transform:scaleX(1.25);transform-origin:100% 0">1979</span></div><div class="r" style="left:95.0px;top:238.2px;width:48.0px;height:11.0px;background:#e8e8e8;border:1px solid #2f63f0;box-sizing:border-box;"></div><div class="t" style="left:95.5px;top:238.7px;width:45.2px;text-align:right;color:#005c00;font-size:5.8px;line-height:6px;font-weight:normal;letter-spacing:0.15px;-webkit-text-stroke:0.22px #005c00;"><span style="display:inline-block;transform:scaleX(1.25);transform-origin:100% 0">57.8</span></div><div class="r" style="left:144.0px;top:238.2px;width:63.0px;height:11.0px;background:#e8e8e8;border:1px solid #2f63f0;box-sizing:border-box;"></div><div class="t" style="left:144.5px;top:238.7px;width:60.2px;text-align:right;color:#005c00;font-size:5.8px;line-height:6px;font-weight:normal;letter-spacing:0.15px;-webkit-text-stroke:0.22px #005c00;"><span style="display:inline-block;transform:scaleX(1.25);transform-origin:100% 0">20.6</span></div><div class="r" style="left:208.0px;top:238.2px;width:48.0px;height:11.0px;background:#e8e8e8;border:1px solid #2f63f0;box-sizing:border-box;"></div><div class="t" style="left:208.5px;top:238.7px;width:45.2px;text-align:right;color:#005c00;font-size:5.8px;line-height:6px;font-weight:normal;letter-spacing:0.15px;-webkit-text-stroke:0.22px #005c00;"><span style="display:inline-block;transform:scaleX(1.25);transform-origin:100% 0">54.2</span></div><div class="r" style="left:257.0px;top:238.2px;width:58.0px;height:11.0px;background:#e8e8e8;border:1px solid #2f63f0;box-sizing:border-box;"></div><div class="t" style="left:257.5px;top:238.7px;width:55.2px;text-align:right;color:#005c00;font-size:5.8px;line-height:6px;font-weight:normal;letter-spacing:0.15px;-webkit-text-stroke:0.22px #005c00;"><span style="display:inline-block;transform:scaleX(1.25);transform-origin:100% 0">17.4</span></div><div class="r" style="left:316.0px;top:238.2px;width:54.0px;height:11.0px;background:#e8e8e8;border:1px solid #2f63f0;box-sizing:border-box;"></div><div class="t" style="left:316.5px;top:238.7px;width:51.2px;text-align:center;color:#005c00;font-size:5.8px;line-height:6px;font-weight:normal;letter-spacing:0.15px;-webkit-text-stroke:0.22px #005c00;"><span style="display:inline-block;transform:scaleX(1.25);transform-origin:50% 0">--</span></div><div class="r" style="left:371.0px;top:238.2px;width:37.0px;height:11.0px;background:#e8e8e8;border:1px solid #2f63f0;box-sizing:border-box;"></div><div class="t" style="left:371.5px;top:238.7px;width:34.2px;text-align:right;color:#005c00;font-size:5.8px;line-height:6px;font-weight:normal;letter-spacing:0.15px;-webkit-text-stroke:0.22px #005c00;"><span style="display:inline-block;transform:scaleX(1.25);transform-origin:100% 0">150.0</span></div><div class="r" style="left:56.0px;top:249.7px;width:38.0px;height:11.0px;background:#e8e8e8;border:1px solid #2f63f0;box-sizing:border-box;"></div><div class="t" style="left:56.5px;top:250.2px;width:35.2px;text-align:right;color:#005c00;font-size:5.8px;line-height:6px;font-weight:normal;letter-spacing:0.15px;-webkit-text-stroke:0.22px #005c00;"><span style="display:inline-block;transform:scaleX(1.25);transform-origin:100% 0">1980</span></div><div class="r" style="left:95.0px;top:249.7px;width:48.0px;height:11.0px;background:#e8e8e8;border:1px solid #2f63f0;box-sizing:border-box;"></div><div class="t" style="left:95.5px;top:250.2px;width:45.2px;text-align:right;color:#005c00;font-size:5.8px;line-height:6px;font-weight:normal;letter-spacing:0.15px;-webkit-text-stroke:0.22px #005c00;"><span style="display:inline-block;transform:scaleX(1.25);transform-origin:100% 0">74.9</span></div><div class="r" style="left:144.0px;top:249.7px;width:63.0px;height:11.0px;background:#e8e8e8;border:1px solid #2f63f0;box-sizing:border-box;"></div><div class="t" style="left:144.5px;top:250.2px;width:60.2px;text-align:right;color:#005c00;font-size:5.8px;line-height:6px;font-weight:normal;letter-spacing:0.15px;-webkit-text-stroke:0.22px #005c00;"><span style="display:inline-block;transform:scaleX(1.25);transform-origin:100% 0">26.8</span></div><div class="r" style="left:208.0px;top:249.7px;width:48.0px;height:11.0px;background:#e8e8e8;border:1px solid #2f63f0;box-sizing:border-box;"></div><div class="t" style="left:208.5px;top:250.2px;width:45.2px;text-align:right;color:#005c00;font-size:5.8px;line-height:6px;font-weight:normal;letter-spacing:0.15px;-webkit-text-stroke:0.22px #005c00;"><span style="display:inline-block;transform:scaleX(1.25);transform-origin:100% 0">71.2</span></div><div class="r" style="left:257.0px;top:249.7px;width:58.0px;height:11.0px;background:#e8e8e8;border:1px solid #2f63f0;box-sizing:border-box;"></div><div class="t" style="left:257.5px;top:250.2px;width:55.2px;text-align:right;color:#005c00;font-size:5.8px;line-height:6px;font-weight:normal;letter-spacing:0.15px;-webkit-text-stroke:0.22px #005c00;"><span style="display:inline-block;transform:scaleX(1.25);transform-origin:100% 0">21.5</span></div><div class="r" style="left:316.0px;top:249.7px;width:54.0px;height:11.0px;background:#e8e8e8;border:1px solid #2f63f0;box-sizing:border-box;"></div><div class="t" style="left:316.5px;top:250.2px;width:51.2px;text-align:center;color:#005c00;font-size:5.8px;line-height:6px;font-weight:normal;letter-spacing:0.15px;-webkit-text-stroke:0.22px #005c00;"><span style="display:inline-block;transform:scaleX(1.25);transform-origin:50% 0">--</span></div><div class="r" style="left:371.0px;top:249.7px;width:37.0px;height:11.0px;background:#e8e8e8;border:1px solid #2f63f0;box-sizing:border-box;"></div><div class="t" style="left:371.5px;top:250.2px;width:34.2px;text-align:right;color:#005c00;font-size:5.8px;line-height:6px;font-weight:normal;letter-spacing:0.15px;-webkit-text-stroke:0.22px #005c00;"><span style="display:inline-block;transform:scaleX(1.25);transform-origin:100% 0">194.4</span></div><div class="r" style="left:56.0px;top:261.1px;width:38.0px;height:11.0px;background:#e8e8e8;border:1px solid #2f63f0;box-sizing:border-box;"></div><div class="t" style="left:56.5px;top:261.6px;width:35.2px;text-align:right;color:#005c00;font-size:5.8px;line-height:6px;font-weight:normal;letter-spacing:0.15px;-webkit-text-stroke:0.22px #005c00;"><span style="display:inline-block;transform:scaleX(1.25);transform-origin:100% 0">1981</span></div><div class="r" style="left:95.0px;top:261.1px;width:48.0px;height:11.0px;background:#e8e8e8;border:1px solid #2f63f0;box-sizing:border-box;"></div><div class="t" style="left:95.5px;top:261.6px;width:45.2px;text-align:right;color:#005c00;font-size:5.8px;line-height:6px;font-weight:normal;letter-spacing:0.15px;-webkit-text-stroke:0.22px #005c00;"><span style="display:inline-block;transform:scaleX(1.25);transform-origin:100% 0">93.7</span></div><div class="r" style="left:144.0px;top:261.1px;width:63.0px;height:11.0px;background:#e8e8e8;border:1px solid #2f63f0;box-sizing:border-box;"></div><div class="t" style="left:144.5px;top:261.6px;width:60.2px;text-align:right;color:#005c00;font-size:5.8px;line-height:6px;font-weight:normal;letter-spacing:0.15px;-webkit-text-stroke:0.22px #005c00;"><span style="display:inline-block;transform:scaleX(1.25);transform-origin:100% 0">27.1</span></div><div class="r" style="left:208.0px;top:261.1px;width:48.0px;height:11.0px;background:#e8e8e8;border:1px solid #2f63f0;box-sizing:border-box;"></div><div class="t" style="left:208.5px;top:261.6px;width:45.2px;text-align:right;color:#005c00;font-size:5.8px;line-height:6px;font-weight:normal;letter-spacing:0.15px;-webkit-text-stroke:0.22px #005c00;"><span style="display:inline-block;transform:scaleX(1.25);transform-origin:100% 0">78.3</span></div><div class="r" style="left:257.0px;top:261.1px;width:58.0px;height:11.0px;background:#e8e8e8;border:1px solid #2f63f0;box-sizing:border-box;"></div><div class="t" style="left:257.5px;top:261.6px;width:55.2px;text-align:right;color:#005c00;font-size:5.8px;line-height:6px;font-weight:normal;letter-spacing:0.15px;-webkit-text-stroke:0.22px #005c00;"><span style="display:inline-block;transform:scaleX(1.25);transform-origin:100% 0">27.8</span></div><div class="r" style="left:316.0px;top:261.1px;width:54.0px;height:11.0px;background:#e8e8e8;border:1px solid #2f63f0;box-sizing:border-box;"></div><div class="t" style="left:316.5px;top:261.6px;width:51.2px;text-align:center;color:#005c00;font-size:5.8px;line-height:6px;font-weight:normal;letter-spacing:0.15px;-webkit-text-stroke:0.22px #005c00;"><span style="display:inline-block;transform:scaleX(1.25);transform-origin:50% 0">--</span></div><div class="r" style="left:371.0px;top:261.1px;width:37.0px;height:11.0px;background:#e8e8e8;border:1px solid #2f63f0;box-sizing:border-box;"></div><div class="t" style="left:371.5px;top:261.6px;width:34.2px;text-align:right;color:#005c00;font-size:5.8px;line-height:6px;font-weight:normal;letter-spacing:0.15px;-webkit-text-stroke:0.22px #005c00;"><span style="display:inline-block;transform:scaleX(1.25);transform-origin:100% 0">226.9</span></div><div class="r" style="left:56.0px;top:272.6px;width:38.0px;height:11.0px;background:#e8e8e8;border:1px solid #2f63f0;box-sizing:border-box;"></div><div class="t" style="left:56.5px;top:273.1px;width:35.2px;text-align:right;color:#005c00;font-size:5.8px;line-height:6px;font-weight:normal;letter-spacing:0.15px;-webkit-text-stroke:0.22px #005c00;"><span style="display:inline-block;transform:scaleX(1.25);transform-origin:100% 0">1982</span></div><div class="r" style="left:95.0px;top:272.6px;width:48.0px;height:11.0px;background:#e8e8e8;border:1px solid #2f63f0;box-sizing:border-box;"></div><div class="t" style="left:95.5px;top:273.1px;width:45.2px;text-align:right;color:#005c00;font-size:5.8px;line-height:6px;font-weight:normal;letter-spacing:0.15px;-webkit-text-stroke:0.22px #005c00;"><span style="display:inline-block;transform:scaleX(1.25);transform-origin:100% 0">101.9</span></div><div class="r" style="left:144.0px;top:272.6px;width:63.0px;height:11.0px;background:#e8e8e8;border:1px solid #2f63f0;box-sizing:border-box;"></div><div class="t" style="left:144.5px;top:273.1px;width:60.2px;text-align:right;color:#005c00;font-size:5.8px;line-height:6px;font-weight:normal;letter-spacing:0.15px;-webkit-text-stroke:0.22px #005c00;"><span style="display:inline-block;transform:scaleX(1.25);transform-origin:100% 0">41.0</span></div><div class="r" style="left:208.0px;top:272.6px;width:48.0px;height:11.0px;background:#e8e8e8;border:1px solid #2f63f0;box-sizing:border-box;"></div><div class="t" style="left:208.5px;top:273.1px;width:45.2px;text-align:right;color:#005c00;font-size:5.8px;line-height:6px;font-weight:normal;letter-spacing:0.15px;-webkit-text-stroke:0.22px #005c00;"><span style="display:inline-block;transform:scaleX(1.25);transform-origin:100% 0">116.7</span></div><div class="r" style="left:257.0px;top:272.6px;width:58.0px;height:11.0px;background:#e8e8e8;border:1px solid #2f63f0;box-sizing:border-box;"></div><div class="t" style="left:257.5px;top:273.1px;width:55.2px;text-align:right;color:#005c00;font-size:5.8px;line-height:6px;font-weight:normal;letter-spacing:0.15px;-webkit-text-stroke:0.22px #005c00;"><span style="display:inline-block;transform:scaleX(1.25);transform-origin:100% 0">28.1</span></div><div class="r" style="left:316.0px;top:272.6px;width:54.0px;height:11.0px;background:#e8e8e8;border:1px solid #2f63f0;box-sizing:border-box;"></div><div class="t" style="left:316.5px;top:273.1px;width:51.2px;text-align:right;color:#005c00;font-size:5.8px;line-height:6px;font-weight:normal;letter-spacing:0.15px;-webkit-text-stroke:0.22px #005c00;"><span style="display:inline-block;transform:scaleX(1.25);transform-origin:100% 0">179.5</span></div><div class="r" style="left:371.0px;top:272.6px;width:37.0px;height:11.0px;background:#e8e8e8;border:1px solid #2f63f0;box-sizing:border-box;"></div><div class="t" style="left:371.5px;top:273.1px;width:34.2px;text-align:right;color:#005c00;font-size:5.8px;line-height:6px;font-weight:normal;letter-spacing:0.15px;-webkit-text-stroke:0.22px #005c00;"><span style="display:inline-block;transform:scaleX(1.25);transform-origin:100% 0">467.2</span></div><div class="r" style="left:56.0px;top:284.0px;width:38.0px;height:11.0px;background:#e8e8e8;border:1px solid #2f63f0;box-sizing:border-box;"></div><div class="t" style="left:56.5px;top:284.5px;width:35.2px;text-align:right;color:#005c00;font-size:5.8px;line-height:6px;font-weight:normal;letter-spacing:0.15px;-webkit-text-stroke:0.22px #005c00;"><span style="display:inline-block;transform:scaleX(1.25);transform-origin:100% 0">1983</span></div><div class="r" style="left:95.0px;top:284.0px;width:48.0px;height:11.0px;background:#e8e8e8;border:1px solid #2f63f0;box-sizing:border-box;"></div><div class="t" style="left:95.5px;top:284.5px;width:45.2px;text-align:right;color:#005c00;font-size:5.8px;line-height:6px;font-weight:normal;letter-spacing:0.15px;-webkit-text-stroke:0.22px #005c00;"><span style="display:inline-block;transform:scaleX(1.25);transform-origin:100% 0">119.8</span></div><div class="r" style="left:144.0px;top:284.0px;width:63.0px;height:11.0px;background:#e8e8e8;border:1px solid #2f63f0;box-sizing:border-box;"></div><div class="t" style="left:144.5px;top:284.5px;width:60.2px;text-align:right;color:#005c00;font-size:5.8px;line-height:6px;font-weight:normal;letter-spacing:0.15px;-webkit-text-stroke:0.22px #005c00;"><span style="display:inline-block;transform:scaleX(1.25);transform-origin:100% 0">43.6</span></div><div class="r" style="left:208.0px;top:284.0px;width:48.0px;height:11.0px;background:#e8e8e8;border:1px solid #2f63f0;box-sizing:border-box;"></div><div class="t" style="left:208.5px;top:284.5px;width:45.2px;text-align:right;color:#005c00;font-size:5.8px;line-height:6px;font-weight:normal;letter-spacing:0.15px;-webkit-text-stroke:0.22px #005c00;"><span style="display:inline-block;transform:scaleX(1.25);transform-origin:100% 0">153.8</span></div><div class="r" style="left:257.0px;top:284.0px;width:58.0px;height:11.0px;background:#e8e8e8;border:1px solid #2f63f0;box-sizing:border-box;"></div><div class="t" style="left:257.5px;top:284.5px;width:55.2px;text-align:right;color:#005c00;font-size:5.8px;line-height:6px;font-weight:normal;letter-spacing:0.15px;-webkit-text-stroke:0.22px #005c00;"><span style="display:inline-block;transform:scaleX(1.25);transform-origin:100% 0">41.5</span></div><div class="r" style="left:316.0px;top:284.0px;width:54.0px;height:11.0px;background:#e8e8e8;border:1px solid #2f63f0;box-sizing:border-box;"></div><div class="t" style="left:316.5px;top:284.5px;width:51.2px;text-align:right;color:#005c00;font-size:5.8px;line-height:6px;font-weight:normal;letter-spacing:0.15px;-webkit-text-stroke:0.22px #005c00;"><span style="display:inline-block;transform:scaleX(1.25);transform-origin:100% 0">998.2</span></div><div class="r" style="left:371.0px;top:284.0px;width:37.0px;height:11.0px;background:#e8e8e8;border:1px solid #2f63f0;box-sizing:border-box;"></div><div class="t" style="left:371.5px;top:284.5px;width:34.2px;text-align:right;color:#005c00;font-size:5.8px;line-height:6px;font-weight:normal;letter-spacing:0.15px;-webkit-text-stroke:0.22px #005c00;"><span style="display:inline-block;transform:scaleX(1.25);transform-origin:100% 0">1,356.9</span></div><div class="r" style="left:56.0px;top:295.5px;width:38.0px;height:11.0px;background:#e8e8e8;border:1px solid #2f63f0;box-sizing:border-box;"></div><div class="t" style="left:56.5px;top:296.0px;width:35.2px;text-align:right;color:#005c00;font-size:5.8px;line-height:6px;font-weight:normal;letter-spacing:0.15px;-webkit-text-stroke:0.22px #005c00;"><span style="display:inline-block;transform:scaleX(1.25);transform-origin:100% 0">1984</span></div><div class="r" style="left:95.0px;top:295.5px;width:48.0px;height:11.0px;background:#e8e8e8;border:1px solid #2f63f0;box-sizing:border-box;"></div><div class="t" style="left:95.5px;top:296.0px;width:45.2px;text-align:right;color:#005c00;font-size:5.8px;line-height:6px;font-weight:normal;letter-spacing:0.15px;-webkit-text-stroke:0.22px #005c00;"><span style="display:inline-block;transform:scaleX(1.25);transform-origin:100% 0">126.6</span></div><div class="r" style="left:144.0px;top:295.5px;width:63.0px;height:11.0px;background:#e8e8e8;border:1px solid #2f63f0;box-sizing:border-box;"></div><div class="t" style="left:144.5px;top:296.0px;width:60.2px;text-align:right;color:#005c00;font-size:5.8px;line-height:6px;font-weight:normal;letter-spacing:0.15px;-webkit-text-stroke:0.22px #005c00;"><span style="display:inline-block;transform:scaleX(1.25);transform-origin:100% 0">50.8</span></div><div class="r" style="left:208.0px;top:295.5px;width:48.0px;height:11.0px;background:#e8e8e8;border:1px solid #2f63f0;box-sizing:border-box;"></div><div class="t" style="left:208.5px;top:296.0px;width:45.2px;text-align:right;color:#005c00;font-size:5.8px;line-height:6px;font-weight:normal;letter-spacing:0.15px;-webkit-text-stroke:0.22px #005c00;"><span style="display:inline-block;transform:scaleX(1.25);transform-origin:100% 0">189.8</span></div><div class="r" style="left:257.0px;top:295.5px;width:58.0px;height:11.0px;background:#e8e8e8;border:1px solid #2f63f0;box-sizing:border-box;"></div><div class="t" style="left:257.5px;top:296.0px;width:55.2px;text-align:right;color:#005c00;font-size:5.8px;line-height:6px;font-weight:normal;letter-spacing:0.15px;-webkit-text-stroke:0.22px #005c00;"><span style="display:inline-block;transform:scaleX(1.25);transform-origin:100% 0">48.0</span></div><div class="r" style="left:316.0px;top:295.5px;width:54.0px;height:11.0px;background:#e8e8e8;border:1px solid #2f63f0;box-sizing:border-box;"></div><div class="t" style="left:316.5px;top:296.0px;width:51.2px;text-align:right;color:#005c00;font-size:5.8px;line-height:6px;font-weight:normal;letter-spacing:0.15px;-webkit-text-stroke:0.22px #005c00;"><span style="display:inline-block;transform:scaleX(1.25);transform-origin:100% 0">1,074.6</span></div><div class="r" style="left:371.0px;top:295.5px;width:37.0px;height:11.0px;background:#e8e8e8;border:1px solid #2f63f0;box-sizing:border-box;"></div><div class="t" style="left:371.5px;top:296.0px;width:34.2px;text-align:right;color:#005c00;font-size:5.8px;line-height:6px;font-weight:normal;letter-spacing:0.15px;-webkit-text-stroke:0.22px #005c00;"><span style="display:inline-block;transform:scaleX(1.25);transform-origin:100% 0">1,489.8</span></div><div class="r" style="left:56.0px;top:306.9px;width:38.0px;height:11.0px;background:#e8e8e8;border:1px solid #2f63f0;box-sizing:border-box;"></div><div class="t" style="left:56.5px;top:307.4px;width:35.2px;text-align:right;color:#005c00;font-size:5.8px;line-height:6px;font-weight:normal;letter-spacing:0.15px;-webkit-text-stroke:0.22px #005c00;"><span style="display:inline-block;transform:scaleX(1.25);transform-origin:100% 0">1985</span></div><div class="r" style="left:95.0px;top:306.9px;width:48.0px;height:11.0px;background:#e8e8e8;border:1px solid #2f63f0;box-sizing:border-box;"></div><div class="t" style="left:95.5px;top:307.4px;width:45.2px;text-align:right;color:#005c00;font-size:5.8px;line-height:6px;font-weight:normal;letter-spacing:0.15px;-webkit-text-stroke:0.22px #005c00;"><span style="display:inline-block;transform:scaleX(1.25);transform-origin:100% 0">133.7</span></div><div class="r" style="left:144.0px;top:306.9px;width:63.0px;height:11.0px;background:#e8e8e8;border:1px solid #2f63f0;box-sizing:border-box;"></div><div class="t" style="left:144.5px;top:307.4px;width:60.2px;text-align:right;color:#005c00;font-size:5.8px;line-height:6px;font-weight:normal;letter-spacing:0.15px;-webkit-text-stroke:0.22px #005c00;"><span style="display:inline-block;transform:scaleX(1.25);transform-origin:100% 0">59.9</span></div><div class="r" style="left:208.0px;top:306.9px;width:48.0px;height:11.0px;background:#e8e8e8;border:1px solid #2f63f0;box-sizing:border-box;"></div><div class="t" style="left:208.5px;top:307.4px;width:45.2px;text-align:right;color:#005c00;font-size:5.8px;line-height:6px;font-weight:normal;letter-spacing:0.15px;-webkit-text-stroke:0.22px #005c00;"><span style="display:inline-block;transform:scaleX(1.25);transform-origin:100% 0">170.3</span></div><div class="r" style="left:257.0px;top:306.9px;width:58.0px;height:11.0px;background:#e8e8e8;border:1px solid #2f63f0;box-sizing:border-box;"></div><div class="t" style="left:257.5px;top:307.4px;width:55.2px;text-align:right;color:#005c00;font-size:5.8px;line-height:6px;font-weight:normal;letter-spacing:0.15px;-webkit-text-stroke:0.22px #005c00;"><span style="display:inline-block;transform:scaleX(1.25);transform-origin:100% 0">48.4</span></div><div class="r" style="left:316.0px;top:306.9px;width:54.0px;height:11.0px;background:#e8e8e8;border:1px solid #2f63f0;box-sizing:border-box;"></div><div class="t" style="left:316.5px;top:307.4px;width:51.2px;text-align:right;color:#005c00;font-size:5.8px;line-height:6px;font-weight:normal;letter-spacing:0.15px;-webkit-text-stroke:0.22px #005c00;"><span style="display:inline-block;transform:scaleX(1.25);transform-origin:100% 0">1,026.2</span></div><div class="r" style="left:371.0px;top:306.9px;width:37.0px;height:11.0px;background:#e8e8e8;border:1px solid #2f63f0;box-sizing:border-box;"></div><div class="t" style="left:371.5px;top:307.4px;width:34.2px;text-align:right;color:#005c00;font-size:5.8px;line-height:6px;font-weight:normal;letter-spacing:0.15px;-webkit-text-stroke:0.22px #005c00;"><span style="display:inline-block;transform:scaleX(1.25);transform-origin:100% 0">1,439.2</span></div><div class="r" style="left:56.0px;top:318.4px;width:38.0px;height:11.0px;background:#e8e8e8;border:1px solid #2f63f0;box-sizing:border-box;"></div><div class="t" style="left:56.5px;top:318.9px;width:35.2px;text-align:right;color:#005c00;font-size:5.8px;line-height:6px;font-weight:normal;letter-spacing:0.15px;-webkit-text-stroke:0.22px #005c00;"><span style="display:inline-block;transform:scaleX(1.25);transform-origin:100% 0">1986</span></div><div class="r" style="left:95.0px;top:318.4px;width:48.0px;height:11.0px;background:#e8e8e8;border:1px solid #2f63f0;box-sizing:border-box;"></div><div class="t" style="left:95.5px;top:318.9px;width:45.2px;text-align:right;color:#005c00;font-size:5.8px;line-height:6px;font-weight:normal;letter-spacing:0.15px;-webkit-text-stroke:0.22px #005c00;"><span style="display:inline-block;transform:scaleX(1.25);transform-origin:100% 0">137.2</span></div><div class="r" style="left:144.0px;top:318.4px;width:63.0px;height:11.0px;background:#e8e8e8;border:1px solid #2f63f0;box-sizing:border-box;"></div><div class="t" style="left:144.5px;top:318.9px;width:60.2px;text-align:right;color:#005c00;font-size:5.8px;line-height:6px;font-weight:normal;letter-spacing:0.15px;-webkit-text-stroke:0.22px #005c00;"><span style="display:inline-block;transform:scaleX(1.25);transform-origin:100% 0">60.2</span></div><div class="r" style="left:208.0px;top:318.4px;width:48.0px;height:11.0px;background:#e8e8e8;border:1px solid #2f63f0;box-sizing:border-box;"></div><div class="t" style="left:208.5px;top:318.9px;width:45.2px;text-align:right;color:#005c00;font-size:5.8px;line-height:6px;font-weight:normal;letter-spacing:0.15px;-webkit-text-stroke:0.22px #005c00;"><span style="display:inline-block;transform:scaleX(1.25);transform-origin:100% 0">240.4</span></div><div class="r" style="left:257.0px;top:318.4px;width:58.0px;height:11.0px;background:#e8e8e8;border:1px solid #2f63f0;box-sizing:border-box;"></div><div class="t" style="left:257.5px;top:318.9px;width:55.2px;text-align:right;color:#005c00;font-size:5.8px;line-height:6px;font-weight:normal;letter-spacing:0.15px;-webkit-text-stroke:0.22px #005c00;"><span style="display:inline-block;transform:scaleX(1.25);transform-origin:100% 0">47.7</span></div><div class="r" style="left:316.0px;top:318.4px;width:54.0px;height:11.0px;background:#e8e8e8;border:1px solid #2f63f0;box-sizing:border-box;"></div><div class="t" style="left:316.5px;top:318.9px;width:51.2px;text-align:right;color:#005c00;font-size:5.8px;line-height:6px;font-weight:normal;letter-spacing:0.15px;-webkit-text-stroke:0.22px #005c00;"><span style="display:inline-block;transform:scaleX(1.25);transform-origin:100% 0">895.2</span></div><div class="r" style="left:371.0px;top:318.4px;width:37.0px;height:11.0px;background:#e8e8e8;border:1px solid #2f63f0;box-sizing:border-box;"></div><div class="t" style="left:371.5px;top:318.9px;width:34.2px;text-align:right;color:#005c00;font-size:5.8px;line-height:6px;font-weight:normal;letter-spacing:0.15px;-webkit-text-stroke:0.22px #005c00;"><span style="display:inline-block;transform:scaleX(1.25);transform-origin:100% 0">1,380.9</span></div><div class="r" style="left:56.0px;top:329.8px;width:38.0px;height:11.0px;background:#e8e8e8;border:1px solid #2f63f0;box-sizing:border-box;"></div><div class="t" style="left:56.5px;top:330.3px;width:35.2px;text-align:right;color:#005c00;font-size:5.8px;line-height:6px;font-weight:normal;letter-spacing:0.15px;-webkit-text-stroke:0.22px #005c00;"><span style="display:inline-block;transform:scaleX(1.25);transform-origin:100% 0">1987</span></div><div class="r" style="left:95.0px;top:329.8px;width:48.0px;height:11.0px;background:#e8e8e8;border:1px solid #2f63f0;box-sizing:border-box;"></div><div class="t" style="left:95.5px;top:330.3px;width:45.2px;text-align:right;color:#005c00;font-size:5.8px;line-height:6px;font-weight:normal;letter-spacing:0.15px;-webkit-text-stroke:0.22px #005c00;"><span style="display:inline-block;transform:scaleX(1.25);transform-origin:100% 0">139.3</span></div><div class="r" style="left:144.0px;top:329.8px;width:63.0px;height:11.0px;background:#e8e8e8;border:1px solid #2f63f0;box-sizing:border-box;"></div><div class="t" style="left:144.5px;top:330.3px;width:60.2px;text-align:right;color:#005c00;font-size:5.8px;line-height:6px;font-weight:normal;letter-spacing:0.15px;-webkit-text-stroke:0.22px #005c00;"><span style="display:inline-block;transform:scaleX(1.25);transform-origin:100% 0">63.4</span></div><div class="r" style="left:208.0px;top:329.8px;width:48.0px;height:11.0px;background:#e8e8e8;border:1px solid #2f63f0;box-sizing:border-box;"></div><div class="t" style="left:208.5px;top:330.3px;width:45.2px;text-align:right;color:#005c00;font-size:5.8px;line-height:6px;font-weight:normal;letter-spacing:0.15px;-webkit-text-stroke:0.22px #005c00;"><span style="display:inline-block;transform:scaleX(1.25);transform-origin:100% 0">158.1</span></div><div class="r" style="left:257.0px;top:329.8px;width:58.0px;height:11.0px;background:#e8e8e8;border:1px solid #2f63f0;box-sizing:border-box;"></div><div class="t" style="left:257.5px;top:330.3px;width:55.2px;text-align:right;color:#005c00;font-size:5.8px;line-height:6px;font-weight:normal;letter-spacing:0.15px;-webkit-text-stroke:0.22px #005c00;"><span style="display:inline-block;transform:scaleX(1.25);transform-origin:100% 0">55.6</span></div><div class="r" style="left:316.0px;top:329.8px;width:54.0px;height:11.0px;background:#e8e8e8;border:1px solid #2f63f0;box-sizing:border-box;"></div><div class="t" style="left:316.5px;top:330.3px;width:51.2px;text-align:right;color:#005c00;font-size:5.8px;line-height:6px;font-weight:normal;letter-spacing:0.15px;-webkit-text-stroke:0.22px #005c00;"><span style="display:inline-block;transform:scaleX(1.25);transform-origin:100% 0">895.0</span></div><div class="r" style="left:371.0px;top:329.8px;width:37.0px;height:11.0px;background:#e8e8e8;border:1px solid #2f63f0;box-sizing:border-box;"></div><div class="t" style="left:371.5px;top:330.3px;width:34.2px;text-align:right;color:#005c00;font-size:5.8px;line-height:6px;font-weight:normal;letter-spacing:0.15px;-webkit-text-stroke:0.22px #005c00;"><span style="display:inline-block;transform:scaleX(1.25);transform-origin:100% 0">1,312.0</span></div><div class="r" style="left:56.0px;top:341.3px;width:38.0px;height:11.0px;background:#e8e8e8;border:1px solid #2f63f0;box-sizing:border-box;"></div><div class="t" style="left:56.5px;top:341.8px;width:35.2px;text-align:right;color:#005c00;font-size:5.8px;line-height:6px;font-weight:normal;letter-spacing:0.15px;-webkit-text-stroke:0.22px #005c00;"><span style="display:inline-block;transform:scaleX(1.25);transform-origin:100% 0">1988</span></div><div class="r" style="left:95.0px;top:341.3px;width:48.0px;height:11.0px;background:#e8e8e8;border:1px solid #2f63f0;box-sizing:border-box;"></div><div class="t" style="left:95.5px;top:341.8px;width:45.2px;text-align:right;color:#005c00;font-size:5.8px;line-height:6px;font-weight:normal;letter-spacing:0.15px;-webkit-text-stroke:0.22px #005c00;"><span style="display:inline-block;transform:scaleX(1.25);transform-origin:100% 0">146.1</span></div><div class="r" style="left:144.0px;top:341.3px;width:63.0px;height:11.0px;background:#e8e8e8;border:1px solid #2f63f0;box-sizing:border-box;"></div><div class="t" style="left:144.5px;top:341.8px;width:60.2px;text-align:right;color:#005c00;font-size:5.8px;line-height:6px;font-weight:normal;letter-spacing:0.15px;-webkit-text-stroke:0.22px #005c00;"><span style="display:inline-block;transform:scaleX(1.25);transform-origin:100% 0">61.6</span></div><div class="r" style="left:208.0px;top:341.3px;width:48.0px;height:11.0px;background:#e8e8e8;border:1px solid #2f63f0;box-sizing:border-box;"></div><div class="t" style="left:208.5px;top:341.8px;width:45.2px;text-align:right;color:#005c00;font-size:5.8px;line-height:6px;font-weight:normal;letter-spacing:0.15px;-webkit-text-stroke:0.22px #005c00;"><span style="display:inline-block;transform:scaleX(1.25);transform-origin:100% 0">158.9</span></div><div class="r" style="left:257.0px;top:341.3px;width:58.0px;height:11.0px;background:#e8e8e8;border:1px solid #2f63f0;box-sizing:border-box;"></div><div class="t" style="left:257.5px;top:341.8px;width:55.2px;text-align:right;color:#005c00;font-size:5.8px;line-height:6px;font-weight:normal;letter-spacing:0.15px;-webkit-text-stroke:0.22px #005c00;"><span style="display:inline-block;transform:scaleX(1.25);transform-origin:100% 0">61.8</span></div><div class="r" style="left:316.0px;top:341.3px;width:54.0px;height:11.0px;background:#e8e8e8;border:1px solid #2f63f0;box-sizing:border-box;"></div><div class="t" style="left:316.5px;top:341.8px;width:51.2px;text-align:right;color:#005c00;font-size:5.8px;line-height:6px;font-weight:normal;letter-spacing:0.15px;-webkit-text-stroke:0.22px #005c00;"><span style="display:inline-block;transform:scaleX(1.25);transform-origin:100% 0">645.4</span></div><div class="r" style="left:371.0px;top:341.3px;width:37.0px;height:11.0px;background:#e8e8e8;border:1px solid #2f63f0;box-sizing:border-box;"></div><div class="t" style="left:371.5px;top:341.8px;width:34.2px;text-align:right;color:#005c00;font-size:5.8px;line-height:6px;font-weight:normal;letter-spacing:0.15px;-webkit-text-stroke:0.22px #005c00;"><span style="display:inline-block;transform:scaleX(1.25);transform-origin:100% 0">1,075.0</span></div><div class="r" style="left:56.0px;top:352.7px;width:38.0px;height:11.0px;background:#e8e8e8;border:1px solid #2f63f0;box-sizing:border-box;"></div><div class="t" style="left:56.5px;top:353.2px;width:35.2px;text-align:right;color:#005c00;font-size:5.8px;line-height:6px;font-weight:normal;letter-spacing:0.15px;-webkit-text-stroke:0.22px #005c00;"><span style="display:inline-block;transform:scaleX(1.25);transform-origin:100% 0">1989</span></div><div class="r" style="left:95.0px;top:352.7px;width:48.0px;height:11.0px;background:#e8e8e8;border:1px solid #2f63f0;box-sizing:border-box;"></div><div class="t" style="left:95.5px;top:353.2px;width:45.2px;text-align:right;color:#005c00;font-size:5.8px;line-height:6px;font-weight:normal;letter-spacing:0.15px;-webkit-text-stroke:0.22px #005c00;"><span style="display:inline-block;transform:scaleX(1.25);transform-origin:100% 0">144.4</span></div><div class="r" style="left:144.0px;top:352.7px;width:63.0px;height:11.0px;background:#e8e8e8;border:1px solid #2f63f0;box-sizing:border-box;"></div><div class="t" style="left:144.5px;top:353.2px;width:60.2px;text-align:right;color:#005c00;font-size:5.8px;line-height:6px;font-weight:normal;letter-spacing:0.15px;-webkit-text-stroke:0.22px #005c00;"><span style="display:inline-block;transform:scaleX(1.25);transform-origin:100% 0">63.3</span></div><div class="r" style="left:208.0px;top:352.7px;width:48.0px;height:11.0px;background:#e8e8e8;border:1px solid #2f63f0;box-sizing:border-box;"></div><div class="t" style="left:208.5px;top:353.2px;width:45.2px;text-align:right;color:#005c00;font-size:5.8px;line-height:6px;font-weight:normal;letter-spacing:0.15px;-webkit-text-stroke:0.22px #005c00;"><span style="display:inline-block;transform:scaleX(1.25);transform-origin:100% 0">135.6</span></div><div class="r" style="left:257.0px;top:352.7px;width:58.0px;height:11.0px;background:#e8e8e8;border:1px solid #2f63f0;box-sizing:border-box;"></div><div class="t" style="left:257.5px;top:353.2px;width:55.2px;text-align:right;color:#005c00;font-size:5.8px;line-height:6px;font-weight:normal;letter-spacing:0.15px;-webkit-text-stroke:0.22px #005c00;"><span style="display:inline-block;transform:scaleX(1.25);transform-origin:100% 0">72.3</span></div><div class="r" style="left:316.0px;top:352.7px;width:54.0px;height:11.0px;background:#e8e8e8;border:1px solid #2f63f0;box-sizing:border-box;"></div><div class="t" style="left:316.5px;top:353.2px;width:51.2px;text-align:right;color:#005c00;font-size:5.8px;line-height:6px;font-weight:normal;letter-spacing:0.15px;-webkit-text-stroke:0.22px #005c00;"><span style="display:inline-block;transform:scaleX(1.25);transform-origin:100% 0">301.2</span></div><div class="r" style="left:371.0px;top:352.7px;width:37.0px;height:11.0px;background:#e8e8e8;border:1px solid #2f63f0;box-sizing:border-box;"></div><div class="t" style="left:371.5px;top:353.2px;width:34.2px;text-align:right;color:#005c00;font-size:5.8px;line-height:6px;font-weight:normal;letter-spacing:0.15px;-webkit-text-stroke:0.22px #005c00;"><span style="display:inline-block;transform:scaleX(1.25);transform-origin:100% 0">718.2</span></div><div class="r" style="left:56.0px;top:364.2px;width:38.0px;height:11.0px;background:#e8e8e8;border:1px solid #2f63f0;box-sizing:border-box;"></div><div class="t" style="left:56.5px;top:364.7px;width:35.2px;text-align:right;color:#005c00;font-size:5.8px;line-height:6px;font-weight:normal;letter-spacing:0.15px;-webkit-text-stroke:0.22px #005c00;"><span style="display:inline-block;transform:scaleX(1.25);transform-origin:100% 0">1990</span></div><div class="r" style="left:95.0px;top:364.2px;width:48.0px;height:11.0px;background:#e8e8e8;border:1px solid #2f63f0;box-sizing:border-box;"></div><div class="t" style="left:95.5px;top:364.7px;width:45.2px;text-align:right;color:#005c00;font-size:5.8px;line-height:6px;font-weight:normal;letter-spacing:0.15px;-webkit-text-stroke:0.22px #005c00;"><span style="display:inline-block;transform:scaleX(1.25);transform-origin:100% 0">141.6</span></div><div class="r" style="left:144.0px;top:364.2px;width:63.0px;height:11.0px;background:#e8e8e8;border:1px solid #2f63f0;box-sizing:border-box;"></div><div class="t" style="left:144.5px;top:364.7px;width:60.2px;text-align:right;color:#005c00;font-size:5.8px;line-height:6px;font-weight:normal;letter-spacing:0.15px;-webkit-text-stroke:0.22px #005c00;"><span style="display:inline-block;transform:scaleX(1.25);transform-origin:100% 0">65.7</span></div><div class="r" style="left:208.0px;top:364.2px;width:48.0px;height:11.0px;background:#e8e8e8;border:1px solid #2f63f0;box-sizing:border-box;"></div><div class="t" style="left:208.5px;top:364.7px;width:45.2px;text-align:right;color:#005c00;font-size:5.8px;line-height:6px;font-weight:normal;letter-spacing:0.15px;-webkit-text-stroke:0.22px #005c00;"><span style="display:inline-block;transform:scaleX(1.25);transform-origin:100% 0">103.9</span></div><div class="r" style="left:257.0px;top:364.2px;width:58.0px;height:11.0px;background:#e8e8e8;border:1px solid #2f63f0;box-sizing:border-box;"></div><div class="t" style="left:257.5px;top:364.7px;width:55.2px;text-align:right;color:#005c00;font-size:5.8px;line-height:6px;font-weight:normal;letter-spacing:0.15px;-webkit-text-stroke:0.22px #005c00;"><span style="display:inline-block;transform:scaleX(1.25);transform-origin:100% 0">85.4</span></div><div class="r" style="left:316.0px;top:364.2px;width:54.0px;height:11.0px;background:#e8e8e8;border:1px solid #2f63f0;box-sizing:border-box;"></div><div class="t" style="left:316.5px;top:364.7px;width:51.2px;text-align:right;color:#005c00;font-size:5.8px;line-height:6px;font-weight:normal;letter-spacing:0.15px;-webkit-text-stroke:0.22px #005c00;"><span style="display:inline-block;transform:scaleX(1.25);transform-origin:100% 0">329.2</span></div><div class="r" style="left:371.0px;top:364.2px;width:37.0px;height:11.0px;background:#e8e8e8;border:1px solid #2f63f0;box-sizing:border-box;"></div><div class="t" style="left:371.5px;top:364.7px;width:34.2px;text-align:right;color:#005c00;font-size:5.8px;line-height:6px;font-weight:normal;letter-spacing:0.15px;-webkit-text-stroke:0.22px #005c00;"><span style="display:inline-block;transform:scaleX(1.25);transform-origin:100% 0">727.0</span></div><div class="r" style="left:56.0px;top:375.6px;width:38.0px;height:11.0px;background:#e8e8e8;border:1px solid #2f63f0;box-sizing:border-box;"></div><div class="t" style="left:56.5px;top:376.1px;width:35.2px;text-align:right;color:#005c00;font-size:5.8px;line-height:6px;font-weight:normal;letter-spacing:0.15px;-webkit-text-stroke:0.22px #005c00;"><span style="display:inline-block;transform:scaleX(1.25);transform-origin:100% 0">1991</span></div><div class="r" style="left:95.0px;top:375.6px;width:48.0px;height:11.0px;background:#e8e8e8;border:1px solid #2f63f0;box-sizing:border-box;"></div><div class="t" style="left:95.5px;top:376.1px;width:45.2px;text-align:right;color:#005c00;font-size:5.8px;line-height:6px;font-weight:normal;letter-spacing:0.15px;-webkit-text-stroke:0.22px #005c00;"><span style="display:inline-block;transform:scaleX(1.25);transform-origin:100% 0">140.5</span></div><div class="r" style="left:144.0px;top:375.6px;width:63.0px;height:11.0px;background:#e8e8e8;border:1px solid #2f63f0;box-sizing:border-box;"></div><div class="t" style="left:144.5px;top:376.1px;width:60.2px;text-align:right;color:#005c00;font-size:5.8px;line-height:6px;font-weight:normal;letter-spacing:0.15px;-webkit-text-stroke:0.22px #005c00;"><span style="display:inline-block;transform:scaleX(1.25);transform-origin:100% 0">64.6</span></div><div class="r" style="left:208.0px;top:375.6px;width:48.0px;height:11.0px;background:#e8e8e8;border:1px solid #2f63f0;box-sizing:border-box;"></div><div class="t" style="left:208.5px;top:376.1px;width:45.2px;text-align:right;color:#005c00;font-size:5.8px;line-height:6px;font-weight:normal;letter-spacing:0.15px;-webkit-text-stroke:0.22px #005c00;"><span style="display:inline-block;transform:scaleX(1.25);transform-origin:100% 0">93.1</span></div><div class="r" style="left:257.0px;top:375.6px;width:58.0px;height:11.0px;background:#e8e8e8;border:1px solid #2f63f0;box-sizing:border-box;"></div><div class="t" style="left:257.5px;top:376.1px;width:55.2px;text-align:right;color:#005c00;font-size:5.8px;line-height:6px;font-weight:normal;letter-spacing:0.15px;-webkit-text-stroke:0.22px #005c00;"><span style="display:inline-block;transform:scaleX(1.25);transform-origin:100% 0">92.7</span></div><div class="r" style="left:316.0px;top:375.6px;width:54.0px;height:11.0px;background:#e8e8e8;border:1px solid #2f63f0;box-sizing:border-box;"></div><div class="t" style="left:316.5px;top:376.1px;width:51.2px;text-align:right;color:#005c00;font-size:5.8px;line-height:6px;font-weight:normal;letter-spacing:0.15px;-webkit-text-stroke:0.22px #005c00;"><span style="display:inline-block;transform:scaleX(1.25);transform-origin:100% 0">298.7</span></div><div class="r" style="left:371.0px;top:375.6px;width:37.0px;height:11.0px;background:#e8e8e8;border:1px solid #2f63f0;box-sizing:border-box;"></div><div class="t" style="left:371.5px;top:376.1px;width:34.2px;text-align:right;color:#005c00;font-size:5.8px;line-height:6px;font-weight:normal;letter-spacing:0.15px;-webkit-text-stroke:0.22px #005c00;"><span style="display:inline-block;transform:scaleX(1.25);transform-origin:100% 0">691.4</span></div><div class="r" style="left:56.0px;top:387.1px;width:38.0px;height:11.0px;background:#e8e8e8;border:1px solid #2f63f0;box-sizing:border-box;"></div><div class="t" style="left:56.5px;top:387.6px;width:35.2px;text-align:right;color:#005c00;font-size:5.8px;line-height:6px;font-weight:normal;letter-spacing:0.15px;-webkit-text-stroke:0.22px #005c00;"><span style="display:inline-block;transform:scaleX(1.25);transform-origin:100% 0">1992</span></div><div class="r" style="left:95.0px;top:387.1px;width:48.0px;height:11.0px;background:#e8e8e8;border:1px solid #2f63f0;box-sizing:border-box;"></div><div class="t" style="left:95.5px;top:387.6px;width:45.2px;text-align:right;color:#005c00;font-size:5.8px;line-height:6px;font-weight:normal;letter-spacing:0.15px;-webkit-text-stroke:0.22px #005c00;"><span style="display:inline-block;transform:scaleX(1.25);transform-origin:100% 0">151.5</span></div><div class="r" style="left:144.0px;top:387.1px;width:63.0px;height:11.0px;background:#e8e8e8;border:1px solid #2f63f0;box-sizing:border-box;"></div><div class="t" style="left:144.5px;top:387.6px;width:60.2px;text-align:right;color:#005c00;font-size:5.8px;line-height:6px;font-weight:normal;letter-spacing:0.15px;-webkit-text-stroke:0.22px #005c00;"><span style="display:inline-block;transform:scaleX(1.25);transform-origin:100% 0">61.8</span></div><div class="r" style="left:208.0px;top:387.1px;width:48.0px;height:11.0px;background:#e8e8e8;border:1px solid #2f63f0;box-sizing:border-box;"></div><div class="t" style="left:208.5px;top:387.6px;width:45.2px;text-align:right;color:#005c00;font-size:5.8px;line-height:6px;font-weight:normal;letter-spacing:0.15px;-webkit-text-stroke:0.22px #005c00;"><span style="display:inline-block;transform:scaleX(1.25);transform-origin:100% 0">115.1</span></div><div class="r" style="left:257.0px;top:387.1px;width:58.0px;height:11.0px;background:#e8e8e8;border:1px solid #2f63f0;box-sizing:border-box;"></div><div class="t" style="left:257.5px;top:387.6px;width:55.2px;text-align:right;color:#005c00;font-size:5.8px;line-height:6px;font-weight:normal;letter-spacing:0.15px;-webkit-text-stroke:0.22px #005c00;"><span style="display:inline-block;transform:scaleX(1.25);transform-origin:100% 0">105.2</span></div><div class="r" style="left:316.0px;top:387.1px;width:54.0px;height:11.0px;background:#e8e8e8;border:1px solid #2f63f0;box-sizing:border-box;"></div><div class="t" style="left:316.5px;top:387.6px;width:51.2px;text-align:right;color:#005c00;font-size:5.8px;line-height:6px;font-weight:normal;letter-spacing:0.15px;-webkit-text-stroke:0.22px #005c00;"><span style="display:inline-block;transform:scaleX(1.25);transform-origin:100% 0">271.3</span></div><div class="r" style="left:371.0px;top:387.1px;width:37.0px;height:11.0px;background:#e8e8e8;border:1px solid #2f63f0;box-sizing:border-box;"></div><div class="t" style="left:371.5px;top:387.6px;width:34.2px;text-align:right;color:#005c00;font-size:5.8px;line-height:6px;font-weight:normal;letter-spacing:0.15px;-webkit-text-stroke:0.22px #005c00;"><span style="display:inline-block;transform:scaleX(1.25);transform-origin:100% 0">707.3</span></div><div class="r" style="left:56.0px;top:398.5px;width:38.0px;height:11.0px;background:#e8e8e8;border:1px solid #2f63f0;box-sizing:border-box;"></div><div class="t" style="left:56.5px;top:399.0px;width:35.2px;text-align:right;color:#005c00;font-size:5.8px;line-height:6px;font-weight:normal;letter-spacing:0.15px;-webkit-text-stroke:0.22px #005c00;"><span style="display:inline-block;transform:scaleX(1.25);transform-origin:100% 0">1993</span></div><div class="r" style="left:95.0px;top:398.5px;width:48.0px;height:11.0px;background:#e8e8e8;border:1px solid #2f63f0;box-sizing:border-box;"></div><div class="t" style="left:95.5px;top:399.0px;width:45.2px;text-align:right;color:#005c00;font-size:5.8px;line-height:6px;font-weight:normal;letter-spacing:0.15px;-webkit-text-stroke:0.22px #005c00;"><span style="display:inline-block;transform:scaleX(1.25);transform-origin:100% 0">152.9</span></div><div class="r" style="left:144.0px;top:398.5px;width:63.0px;height:11.0px;background:#e8e8e8;border:1px solid #2f63f0;box-sizing:border-box;"></div><div class="t" style="left:144.5px;top:399.0px;width:60.2px;text-align:right;color:#005c00;font-size:5.8px;line-height:6px;font-weight:normal;letter-spacing:0.15px;-webkit-text-stroke:0.22px #005c00;"><span style="display:inline-block;transform:scaleX(1.25);transform-origin:100% 0">62.9</span></div><div class="r" style="left:208.0px;top:398.5px;width:48.0px;height:11.0px;background:#e8e8e8;border:1px solid #2f63f0;box-sizing:border-box;"></div><div class="t" style="left:208.5px;top:399.0px;width:45.2px;text-align:right;color:#005c00;font-size:5.8px;line-height:6px;font-weight:normal;letter-spacing:0.15px;-webkit-text-stroke:0.22px #005c00;"><span style="display:inline-block;transform:scaleX(1.25);transform-origin:100% 0">91.1</span></div><div class="r" style="left:257.0px;top:398.5px;width:58.0px;height:11.0px;background:#e8e8e8;border:1px solid #2f63f0;box-sizing:border-box;"></div><div class="t" style="left:257.5px;top:399.0px;width:55.2px;text-align:right;color:#005c00;font-size:5.8px;line-height:6px;font-weight:normal;letter-spacing:0.15px;-webkit-text-stroke:0.22px #005c00;"><span style="display:inline-block;transform:scaleX(1.25);transform-origin:100% 0">112.6</span></div><div class="r" style="left:316.0px;top:398.5px;width:54.0px;height:11.0px;background:#e8e8e8;border:1px solid #2f63f0;box-sizing:border-box;"></div><div class="t" style="left:316.5px;top:399.0px;width:51.2px;text-align:right;color:#005c00;font-size:5.8px;line-height:6px;font-weight:normal;letter-spacing:0.15px;-webkit-text-stroke:0.22px #005c00;"><span style="display:inline-block;transform:scaleX(1.25);transform-origin:100% 0">270.6</span></div><div class="r" style="left:371.0px;top:398.5px;width:37.0px;height:11.0px;background:#e8e8e8;border:1px solid #2f63f0;box-sizing:border-box;"></div><div class="t" style="left:371.5px;top:399.0px;width:34.2px;text-align:right;color:#005c00;font-size:5.8px;line-height:6px;font-weight:normal;letter-spacing:0.15px;-webkit-text-stroke:0.22px #005c00;"><span style="display:inline-block;transform:scaleX(1.25);transform-origin:100% 0">693.8</span></div><div class="r" style="left:56.0px;top:410.0px;width:38.0px;height:11.0px;background:#e8e8e8;border:1px solid #2f63f0;box-sizing:border-box;"></div><div class="t" style="left:56.5px;top:410.5px;width:35.2px;text-align:right;color:#005c00;font-size:5.8px;line-height:6px;font-weight:normal;letter-spacing:0.15px;-webkit-text-stroke:0.22px #005c00;"><span style="display:inline-block;transform:scaleX(1.25);transform-origin:100% 0">1994</span></div><div class="r" style="left:95.0px;top:410.0px;width:48.0px;height:11.0px;background:#e8e8e8;border:1px solid #2f63f0;box-sizing:border-box;"></div><div class="t" style="left:95.5px;top:410.5px;width:45.2px;text-align:right;color:#005c00;font-size:5.8px;line-height:6px;font-weight:normal;letter-spacing:0.15px;-webkit-text-stroke:0.22px #005c00;"><span style="display:inline-block;transform:scaleX(1.25);transform-origin:100% 0">151.5</span></div><div class="r" style="left:144.0px;top:410.0px;width:63.0px;height:11.0px;background:#e8e8e8;border:1px solid #2f63f0;box-sizing:border-box;"></div><div class="t" style="left:144.5px;top:410.5px;width:60.2px;text-align:right;color:#005c00;font-size:5.8px;line-height:6px;font-weight:normal;letter-spacing:0.15px;-webkit-text-stroke:0.22px #005c00;"><span style="display:inline-block;transform:scaleX(1.25);transform-origin:100% 0">65.3</span></div><div class="r" style="left:208.0px;top:410.0px;width:48.0px;height:11.0px;background:#e8e8e8;border:1px solid #2f63f0;box-sizing:border-box;"></div><div class="t" style="left:208.5px;top:410.5px;width:45.2px;text-align:right;color:#005c00;font-size:5.8px;line-height:6px;font-weight:normal;letter-spacing:0.15px;-webkit-text-stroke:0.22px #005c00;"><span style="display:inline-block;transform:scaleX(1.25);transform-origin:100% 0">105.5</span></div><div class="r" style="left:257.0px;top:410.0px;width:58.0px;height:11.0px;background:#e8e8e8;border:1px solid #2f63f0;box-sizing:border-box;"></div><div class="t" style="left:257.5px;top:410.5px;width:55.2px;text-align:right;color:#005c00;font-size:5.8px;line-height:6px;font-weight:normal;letter-spacing:0.15px;-webkit-text-stroke:0.22px #005c00;"><span style="display:inline-block;transform:scaleX(1.25);transform-origin:100% 0">107.3</span></div><div class="r" style="left:316.0px;top:410.0px;width:54.0px;height:11.0px;background:#e8e8e8;border:1px solid #2f63f0;box-sizing:border-box;"></div><div class="t" style="left:316.5px;top:410.5px;width:51.2px;text-align:right;color:#005c00;font-size:5.8px;line-height:6px;font-weight:normal;letter-spacing:0.15px;-webkit-text-stroke:0.22px #005c00;"><span style="display:inline-block;transform:scaleX(1.25);transform-origin:100% 0">264.1</span></div><div class="r" style="left:371.0px;top:410.0px;width:37.0px;height:11.0px;background:#e8e8e8;border:1px solid #2f63f0;box-sizing:border-box;"></div><div class="t" style="left:371.5px;top:410.5px;width:34.2px;text-align:right;color:#005c00;font-size:5.8px;line-height:6px;font-weight:normal;letter-spacing:0.15px;-webkit-text-stroke:0.22px #005c00;"><span style="display:inline-block;transform:scaleX(1.25);transform-origin:100% 0">696.8</span></div><div class="r" style="left:56.0px;top:421.4px;width:38.0px;height:11.0px;background:#e8e8e8;border:1px solid #2f63f0;box-sizing:border-box;"></div><div class="t" style="left:56.5px;top:421.9px;width:35.2px;text-align:right;color:#005c00;font-size:5.8px;line-height:6px;font-weight:normal;letter-spacing:0.15px;-webkit-text-stroke:0.22px #005c00;"><span style="display:inline-block;transform:scaleX(1.25);transform-origin:100% 0">1995</span></div><div class="r" style="left:95.0px;top:421.4px;width:48.0px;height:11.0px;background:#e8e8e8;border:1px solid #2f63f0;box-sizing:border-box;"></div><div class="t" style="left:95.5px;top:421.9px;width:45.2px;text-align:right;color:#005c00;font-size:5.8px;line-height:6px;font-weight:normal;letter-spacing:0.15px;-webkit-text-stroke:0.22px #005c00;"><span style="display:inline-block;transform:scaleX(1.25);transform-origin:100% 0">147.5</span></div><div class="r" style="left:144.0px;top:421.4px;width:63.0px;height:11.0px;background:#e8e8e8;border:1px solid #2f63f0;box-sizing:border-box;"></div><div class="t" style="left:144.5px;top:421.9px;width:60.2px;text-align:right;color:#005c00;font-size:5.8px;line-height:6px;font-weight:normal;letter-spacing:0.15px;-webkit-text-stroke:0.22px #005c00;"><span style="display:inline-block;transform:scaleX(1.25);transform-origin:100% 0">66.0</span></div><div class="r" style="left:208.0px;top:421.4px;width:48.0px;height:11.0px;background:#e8e8e8;border:1px solid #2f63f0;box-sizing:border-box;"></div><div class="t" style="left:208.5px;top:421.9px;width:45.2px;text-align:right;color:#005c00;font-size:5.8px;line-height:6px;font-weight:normal;letter-spacing:0.15px;-webkit-text-stroke:0.22px #005c00;"><span style="display:inline-block;transform:scaleX(1.25);transform-origin:100% 0">64.0</span></div><div class="r" style="left:257.0px;top:421.4px;width:58.0px;height:11.0px;background:#e8e8e8;border:1px solid #2f63f0;box-sizing:border-box;"></div><div class="t" style="left:257.5px;top:421.9px;width:55.2px;text-align:right;color:#005c00;font-size:5.8px;line-height:6px;font-weight:normal;letter-spacing:0.15px;-webkit-text-stroke:0.22px #005c00;"><span style="display:inline-block;transform:scaleX(1.25);transform-origin:100% 0">99.1</span></div><div class="r" style="left:316.0px;top:421.4px;width:54.0px;height:11.0px;background:#e8e8e8;border:1px solid #2f63f0;box-sizing:border-box;"></div><div class="t" style="left:316.5px;top:421.9px;width:51.2px;text-align:right;color:#005c00;font-size:5.8px;line-height:6px;font-weight:normal;letter-spacing:0.15px;-webkit-text-stroke:0.22px #005c00;"><span style="display:inline-block;transform:scaleX(1.25);transform-origin:100% 0">134.6</span></div><div class="r" style="left:371.0px;top:421.4px;width:37.0px;height:11.0px;background:#e8e8e8;border:1px solid #2f63f0;box-sizing:border-box;"></div><div class="t" style="left:371.5px;top:421.9px;width:34.2px;text-align:right;color:#005c00;font-size:5.8px;line-height:6px;font-weight:normal;letter-spacing:0.15px;-webkit-text-stroke:0.22px #005c00;"><span style="display:inline-block;transform:scaleX(1.25);transform-origin:100% 0">513.7</span></div><div class="r" style="left:56.0px;top:432.9px;width:38.0px;height:11.0px;background:#e8e8e8;border:1px solid #2f63f0;box-sizing:border-box;"></div><div class="t" style="left:56.5px;top:433.4px;width:35.2px;text-align:right;color:#005c00;font-size:5.8px;line-height:6px;font-weight:normal;letter-spacing:0.15px;-webkit-text-stroke:0.22px #005c00;"><span style="display:inline-block;transform:scaleX(1.25);transform-origin:100% 0">1996</span></div><div class="r" style="left:95.0px;top:432.9px;width:48.0px;height:11.0px;background:#e8e8e8;border:1px solid #2f63f0;box-sizing:border-box;"></div><div class="t" style="left:95.5px;top:433.4px;width:45.2px;text-align:right;color:#005c00;font-size:5.8px;line-height:6px;font-weight:normal;letter-spacing:0.15px;-webkit-text-stroke:0.22px #005c00;"><span style="display:inline-block;transform:scaleX(1.25);transform-origin:100% 0">144.8</span></div><div class="r" style="left:144.0px;top:432.9px;width:63.0px;height:11.0px;background:#e8e8e8;border:1px solid #2f63f0;box-sizing:border-box;"></div><div class="t" style="left:144.5px;top:433.4px;width:60.2px;text-align:right;color:#005c00;font-size:5.8px;line-height:6px;font-weight:normal;letter-spacing:0.15px;-webkit-text-stroke:0.22px #005c00;"><span style="display:inline-block;transform:scaleX(1.25);transform-origin:100% 0">72.9</span></div><div class="r" style="left:208.0px;top:432.9px;width:48.0px;height:11.0px;background:#e8e8e8;border:1px solid #2f63f0;box-sizing:border-box;"></div><div class="t" style="left:208.5px;top:433.4px;width:45.2px;text-align:right;color:#005c00;font-size:5.8px;line-height:6px;font-weight:normal;letter-spacing:0.15px;-webkit-text-stroke:0.22px #005c00;"><span style="display:inline-block;transform:scaleX(1.25);transform-origin:100% 0">11.0</span></div><div class="r" style="left:257.0px;top:432.9px;width:58.0px;height:11.0px;background:#e8e8e8;border:1px solid #2f63f0;box-sizing:border-box;"></div><div class="t" style="left:257.5px;top:433.4px;width:55.2px;text-align:right;color:#005c00;font-size:5.8px;line-height:6px;font-weight:normal;letter-spacing:0.15px;-webkit-text-stroke:0.22px #005c00;"><span style="display:inline-block;transform:scaleX(1.25);transform-origin:100% 0">101.5</span></div><div class="r" style="left:316.0px;top:432.9px;width:54.0px;height:11.0px;background:#e8e8e8;border:1px solid #2f63f0;box-sizing:border-box;"></div><div class="t" style="left:316.5px;top:433.4px;width:51.2px;text-align:right;color:#005c00;font-size:5.8px;line-height:6px;font-weight:normal;letter-spacing:0.15px;-webkit-text-stroke:0.22px #005c00;"><span style="display:inline-block;transform:scaleX(1.25);transform-origin:100% 0">79.6</span></div><div class="r" style="left:371.0px;top:432.9px;width:37.0px;height:11.0px;background:#e8e8e8;border:1px solid #2f63f0;box-sizing:border-box;"></div><div class="t" style="left:371.5px;top:433.4px;width:34.2px;text-align:right;color:#005c00;font-size:5.8px;line-height:6px;font-weight:normal;letter-spacing:0.15px;-webkit-text-stroke:0.22px #005c00;"><span style="display:inline-block;transform:scaleX(1.25);transform-origin:100% 0">410.5</span></div><div class="r" style="left:56.0px;top:444.3px;width:38.0px;height:11.0px;background:#e8e8e8;border:1px solid #2f63f0;box-sizing:border-box;"></div><div class="t" style="left:56.5px;top:444.8px;width:35.2px;text-align:right;color:#005c00;font-size:5.8px;line-height:6px;font-weight:normal;letter-spacing:0.15px;-webkit-text-stroke:0.22px #005c00;"><span style="display:inline-block;transform:scaleX(1.25);transform-origin:100% 0">1997</span></div><div class="r" style="left:95.0px;top:444.3px;width:48.0px;height:11.0px;background:#e8e8e8;border:1px solid #2f63f0;box-sizing:border-box;"></div><div class="t" style="left:95.5px;top:444.8px;width:45.2px;text-align:right;color:#005c00;font-size:5.8px;line-height:6px;font-weight:normal;letter-spacing:0.15px;-webkit-text-stroke:0.22px #005c00;"><span style="display:inline-block;transform:scaleX(1.25);transform-origin:100% 0">145.1</span></div><div class="r" style="left:144.0px;top:444.3px;width:63.0px;height:11.0px;background:#e8e8e8;border:1px solid #2f63f0;box-sizing:border-box;"></div><div class="t" style="left:144.5px;top:444.8px;width:60.2px;text-align:right;color:#005c00;font-size:5.8px;line-height:6px;font-weight:normal;letter-spacing:0.15px;-webkit-text-stroke:0.22px #005c00;"><span style="display:inline-block;transform:scaleX(1.25);transform-origin:100% 0">73.5</span></div><div class="r" style="left:208.0px;top:444.3px;width:48.0px;height:11.0px;background:#e8e8e8;border:1px solid #2f63f0;box-sizing:border-box;"></div><div class="t" style="left:208.5px;top:444.8px;width:45.2px;text-align:right;color:#005c00;font-size:5.8px;line-height:6px;font-weight:normal;letter-spacing:0.15px;-webkit-text-stroke:0.22px #005c00;"><span style="display:inline-block;transform:scaleX(1.25);transform-origin:100% 0">8.3</span></div><div class="r" style="left:257.0px;top:444.3px;width:58.0px;height:11.0px;background:#e8e8e8;border:1px solid #2f63f0;box-sizing:border-box;"></div><div class="t" style="left:257.5px;top:444.8px;width:55.2px;text-align:right;color:#005c00;font-size:5.8px;line-height:6px;font-weight:normal;letter-spacing:0.15px;-webkit-text-stroke:0.22px #005c00;"><span style="display:inline-block;transform:scaleX(1.25);transform-origin:100% 0">100.4</span></div><div class="r" style="left:316.0px;top:444.3px;width:54.0px;height:11.0px;background:#e8e8e8;border:1px solid #2f63f0;box-sizing:border-box;"></div><div class="t" style="left:316.5px;top:444.8px;width:51.2px;text-align:right;color:#005c00;font-size:5.8px;line-height:6px;font-weight:normal;letter-spacing:0.15px;-webkit-text-stroke:0.22px #005c00;"><span style="display:inline-block;transform:scaleX(1.25);transform-origin:100% 0">191.8</span></div><div class="r" style="left:371.0px;top:444.3px;width:37.0px;height:11.0px;background:#e8e8e8;border:1px solid #2f63f0;box-sizing:border-box;"></div><div class="t" style="left:371.5px;top:444.8px;width:34.2px;text-align:right;color:#005c00;font-size:5.8px;line-height:6px;font-weight:normal;letter-spacing:0.15px;-webkit-text-stroke:0.22px #005c00;"><span style="display:inline-block;transform:scaleX(1.25);transform-origin:100% 0">518.2</span></div><div class="r" style="left:56.0px;top:455.8px;width:38.0px;height:11.0px;background:#e8e8e8;border:1px solid #2f63f0;box-sizing:border-box;"></div><div class="t" style="left:56.5px;top:456.3px;width:35.2px;text-align:right;color:#005c00;font-size:5.8px;line-height:6px;font-weight:normal;letter-spacing:0.15px;-webkit-text-stroke:0.22px #005c00;"><span style="display:inline-block;transform:scaleX(1.25);transform-origin:100% 0">1998</span></div><div class="r" style="left:95.0px;top:455.8px;width:48.0px;height:11.0px;background:#e8e8e8;border:1px solid #2f63f0;box-sizing:border-box;"></div><div class="t" style="left:95.5px;top:456.3px;width:45.2px;text-align:right;color:#005c00;font-size:5.8px;line-height:6px;font-weight:normal;letter-spacing:0.15px;-webkit-text-stroke:0.22px #005c00;"><span style="display:inline-block;transform:scaleX(1.25);transform-origin:100% 0">141.1</span></div><div class="r" style="left:144.0px;top:455.8px;width:63.0px;height:11.0px;background:#e8e8e8;border:1px solid #2f63f0;box-sizing:border-box;"></div><div class="t" style="left:144.5px;top:456.3px;width:60.2px;text-align:right;color:#005c00;font-size:5.8px;line-height:6px;font-weight:normal;letter-spacing:0.15px;-webkit-text-stroke:0.22px #005c00;"><span style="display:inline-block;transform:scaleX(1.25);transform-origin:100% 0">75.2</span></div><div class="r" style="left:208.0px;top:455.8px;width:48.0px;height:11.0px;background:#e8e8e8;border:1px solid #2f63f0;box-sizing:border-box;"></div><div class="t" style="left:208.5px;top:456.3px;width:45.2px;text-align:right;color:#005c00;font-size:5.8px;line-height:6px;font-weight:normal;letter-spacing:0.15px;-webkit-text-stroke:0.22px #005c00;"><span style="display:inline-block;transform:scaleX(1.25);transform-origin:100% 0">9.3</span></div><div class="r" style="left:257.0px;top:455.8px;width:58.0px;height:11.0px;background:#e8e8e8;border:1px solid #2f63f0;box-sizing:border-box;"></div><div class="t" style="left:257.5px;top:456.3px;width:55.2px;text-align:right;color:#005c00;font-size:5.8px;line-height:6px;font-weight:normal;letter-spacing:0.15px;-webkit-text-stroke:0.22px #005c00;"><span style="display:inline-block;transform:scaleX(1.25);transform-origin:100% 0">96.3</span></div><div class="r" style="left:316.0px;top:455.8px;width:54.0px;height:11.0px;background:#e8e8e8;border:1px solid #2f63f0;box-sizing:border-box;"></div><div class="t" style="left:316.5px;top:456.3px;width:51.2px;text-align:right;color:#005c00;font-size:5.8px;line-height:6px;font-weight:normal;letter-spacing:0.15px;-webkit-text-stroke:0.22px #005c00;"><span style="display:inline-block;transform:scaleX(1.25);transform-origin:100% 0">234.3</span></div><div class="r" style="left:371.0px;top:455.8px;width:37.0px;height:11.0px;background:#e8e8e8;border:1px solid #2f63f0;box-sizing:border-box;"></div><div class="t" style="left:371.5px;top:456.3px;width:34.2px;text-align:right;color:#005c00;font-size:5.8px;line-height:6px;font-weight:normal;letter-spacing:0.15px;-webkit-text-stroke:0.22px #005c00;"><span style="display:inline-block;transform:scaleX(1.25);transform-origin:100% 0">557.2</span></div><div class="r" style="left:56.0px;top:467.2px;width:38.0px;height:11.0px;background:#e8e8e8;border:1px solid #2f63f0;box-sizing:border-box;"></div><div class="t" style="left:56.5px;top:467.7px;width:35.2px;text-align:right;color:#005c00;font-size:5.8px;line-height:6px;font-weight:normal;letter-spacing:0.15px;-webkit-text-stroke:0.22px #005c00;"><span style="display:inline-block;transform:scaleX(1.25);transform-origin:100% 0">1999</span></div><div class="r" style="left:95.0px;top:467.2px;width:48.0px;height:11.0px;background:#e8e8e8;border:1px solid #2f63f0;box-sizing:border-box;"></div><div class="t" style="left:95.5px;top:467.7px;width:45.2px;text-align:right;color:#005c00;font-size:5.8px;line-height:6px;font-weight:normal;letter-spacing:0.15px;-webkit-text-stroke:0.22px #005c00;"><span style="display:inline-block;transform:scaleX(1.25);transform-origin:100% 0">140.3</span></div><div class="r" style="left:144.0px;top:467.2px;width:63.0px;height:11.0px;background:#e8e8e8;border:1px solid #2f63f0;box-sizing:border-box;"></div><div class="t" style="left:144.5px;top:467.7px;width:60.2px;text-align:right;color:#005c00;font-size:5.8px;line-height:6px;font-weight:normal;letter-spacing:0.15px;-webkit-text-stroke:0.22px #005c00;"><span style="display:inline-block;transform:scaleX(1.25);transform-origin:100% 0">79.7</span></div><div class="r" style="left:208.0px;top:467.2px;width:48.0px;height:11.0px;background:#e8e8e8;border:1px solid #2f63f0;box-sizing:border-box;"></div><div class="t" style="left:208.5px;top:467.7px;width:45.2px;text-align:right;color:#005c00;font-size:5.8px;line-height:6px;font-weight:normal;letter-spacing:0.15px;-webkit-text-stroke:0.22px #005c00;"><span style="display:inline-block;transform:scaleX(1.25);transform-origin:100% 0">3.0</span></div><div class="r" style="left:257.0px;top:467.2px;width:58.0px;height:11.0px;background:#e8e8e8;border:1px solid #2f63f0;box-sizing:border-box;"></div><div class="t" style="left:257.5px;top:467.7px;width:55.2px;text-align:right;color:#005c00;font-size:5.8px;line-height:6px;font-weight:normal;letter-spacing:0.15px;-webkit-text-stroke:0.22px #005c00;"><span style="display:inline-block;transform:scaleX(1.25);transform-origin:100% 0">100.3</span></div><div class="r" style="left:316.0px;top:467.2px;width:54.0px;height:11.0px;background:#e8e8e8;border:1px solid #2f63f0;box-sizing:border-box;"></div><div class="t" style="left:316.5px;top:467.7px;width:51.2px;text-align:right;color:#005c00;font-size:5.8px;line-height:6px;font-weight:normal;letter-spacing:0.15px;-webkit-text-stroke:0.22px #005c00;"><span style="display:inline-block;transform:scaleX(1.25);transform-origin:100% 0">289.6</span></div><div class="r" style="left:371.0px;top:467.2px;width:37.0px;height:11.0px;background:#e8e8e8;border:1px solid #2f63f0;box-sizing:border-box;"></div><div class="t" style="left:371.5px;top:467.7px;width:34.2px;text-align:right;color:#005c00;font-size:5.8px;line-height:6px;font-weight:normal;letter-spacing:0.15px;-webkit-text-stroke:0.22px #005c00;"><span style="display:inline-block;transform:scaleX(1.25);transform-origin:100% 0">601.4</span></div><div class="r" style="left:56.0px;top:478.7px;width:38.0px;height:11.0px;background:#e8e8e8;border:1px solid #2f63f0;box-sizing:border-box;"></div><div class="t" style="left:56.5px;top:479.2px;width:35.2px;text-align:right;color:#005c00;font-size:5.8px;line-height:6px;font-weight:normal;letter-spacing:0.15px;-webkit-text-stroke:0.22px #005c00;"><span style="display:inline-block;transform:scaleX(1.25);transform-origin:100% 0">2000</span></div><div class="r" style="left:95.0px;top:478.7px;width:48.0px;height:11.0px;background:#e8e8e8;border:1px solid #2f63f0;box-sizing:border-box;"></div><div class="t" style="left:95.5px;top:479.2px;width:45.2px;text-align:right;color:#005c00;font-size:5.8px;line-height:6px;font-weight:normal;letter-spacing:0.15px;-webkit-text-stroke:0.22px #005c00;"><span style="display:inline-block;transform:scaleX(1.25);transform-origin:100% 0">137.1</span></div><div class="r" style="left:144.0px;top:478.7px;width:63.0px;height:11.0px;background:#e8e8e8;border:1px solid #2f63f0;box-sizing:border-box;"></div><div class="t" style="left:144.5px;top:479.2px;width:60.2px;text-align:right;color:#005c00;font-size:5.8px;line-height:6px;font-weight:normal;letter-spacing:0.15px;-webkit-text-stroke:0.22px #005c00;"><span style="display:inline-block;transform:scaleX(1.25);transform-origin:100% 0">74.2</span></div><div class="r" style="left:208.0px;top:478.7px;width:48.0px;height:11.0px;background:#e8e8e8;border:1px solid #2f63f0;box-sizing:border-box;"></div><div class="t" style="left:208.5px;top:479.2px;width:45.2px;text-align:right;color:#005c00;font-size:5.8px;line-height:6px;font-weight:normal;letter-spacing:0.15px;-webkit-text-stroke:0.22px #005c00;"><span style="display:inline-block;transform:scaleX(1.25);transform-origin:100% 0">2.2</span></div><div class="r" style="left:257.0px;top:478.7px;width:58.0px;height:11.0px;background:#e8e8e8;border:1px solid #2f63f0;box-sizing:border-box;"></div><div class="t" style="left:257.5px;top:479.2px;width:55.2px;text-align:right;color:#005c00;font-size:5.8px;line-height:6px;font-weight:normal;letter-spacing:0.15px;-webkit-text-stroke:0.22px #005c00;"><span style="display:inline-block;transform:scaleX(1.25);transform-origin:100% 0">97.8</span></div><div class="r" style="left:316.0px;top:478.7px;width:54.0px;height:11.0px;background:#e8e8e8;border:1px solid #2f63f0;box-sizing:border-box;"></div><div class="t" style="left:316.5px;top:479.2px;width:51.2px;text-align:right;color:#005c00;font-size:5.8px;line-height:6px;font-weight:normal;letter-spacing:0.15px;-webkit-text-stroke:0.22px #005c00;"><span style="display:inline-block;transform:scaleX(1.25);transform-origin:100% 0">224.6</span></div><div class="r" style="left:371.0px;top:478.7px;width:37.0px;height:11.0px;background:#e8e8e8;border:1px solid #2f63f0;box-sizing:border-box;"></div><div class="t" style="left:371.5px;top:479.2px;width:34.2px;text-align:right;color:#005c00;font-size:5.8px;line-height:6px;font-weight:normal;letter-spacing:0.15px;-webkit-text-stroke:0.22px #005c00;"><span style="display:inline-block;transform:scaleX(1.25);transform-origin:100% 0">526.6</span></div><div class="r" style="left:56.0px;top:490.1px;width:38.0px;height:11.0px;background:#e8e8e8;border:1px solid #2f63f0;box-sizing:border-box;"></div><div class="t" style="left:56.5px;top:490.6px;width:35.2px;text-align:right;color:#005c00;font-size:5.8px;line-height:6px;font-weight:normal;letter-spacing:0.15px;-webkit-text-stroke:0.22px #005c00;"><span style="display:inline-block;transform:scaleX(1.25);transform-origin:100% 0">2001</span></div><div class="r" style="left:95.0px;top:490.1px;width:48.0px;height:11.0px;background:#e8e8e8;border:1px solid #2f63f0;box-sizing:border-box;"></div><div class="t" style="left:95.5px;top:490.6px;width:45.2px;text-align:right;color:#005c00;font-size:5.8px;line-height:6px;font-weight:normal;letter-spacing:0.15px;-webkit-text-stroke:0.22px #005c00;"><span style="display:inline-block;transform:scaleX(1.25);transform-origin:100% 0">152.1</span></div><div class="r" style="left:144.0px;top:490.1px;width:63.0px;height:11.0px;background:#e8e8e8;border:1px solid #2f63f0;box-sizing:border-box;"></div><div class="t" style="left:144.5px;top:490.6px;width:60.2px;text-align:right;color:#005c00;font-size:5.8px;line-height:6px;font-weight:normal;letter-spacing:0.15px;-webkit-text-stroke:0.22px #005c00;"><span style="display:inline-block;transform:scaleX(1.25);transform-origin:100% 0">72.3</span></div><div class="r" style="left:208.0px;top:490.1px;width:48.0px;height:11.0px;background:#e8e8e8;border:1px solid #2f63f0;box-sizing:border-box;"></div><div class="t" style="left:208.5px;top:490.6px;width:45.2px;text-align:right;color:#005c00;font-size:5.8px;line-height:6px;font-weight:normal;letter-spacing:0.15px;-webkit-text-stroke:0.22px #005c00;"><span style="display:inline-block;transform:scaleX(1.25);transform-origin:100% 0">6.8</span></div><div class="r" style="left:257.0px;top:490.1px;width:58.0px;height:11.0px;background:#e8e8e8;border:1px solid #2f63f0;box-sizing:border-box;"></div><div class="t" style="left:257.5px;top:490.6px;width:55.2px;text-align:right;color:#005c00;font-size:5.8px;line-height:6px;font-weight:normal;letter-spacing:0.15px;-webkit-text-stroke:0.22px #005c00;"><span style="display:inline-block;transform:scaleX(1.25);transform-origin:100% 0">105.4</span></div><div class="r" style="left:316.0px;top:490.1px;width:54.0px;height:11.0px;background:#e8e8e8;border:1px solid #2f63f0;box-sizing:border-box;"></div><div class="t" style="left:316.5px;top:490.6px;width:51.2px;text-align:right;color:#005c00;font-size:5.8px;line-height:6px;font-weight:normal;letter-spacing:0.15px;-webkit-text-stroke:0.22px #005c00;"><span style="display:inline-block;transform:scaleX(1.25);transform-origin:100% 0">377.1</span></div><div class="r" style="left:371.0px;top:490.1px;width:37.0px;height:11.0px;background:#e8e8e8;border:1px solid #2f63f0;box-sizing:border-box;"></div><div class="t" style="left:371.5px;top:490.6px;width:34.2px;text-align:right;color:#005c00;font-size:5.8px;line-height:6px;font-weight:normal;letter-spacing:0.15px;-webkit-text-stroke:0.22px #005c00;"><span style="display:inline-block;transform:scaleX(1.25);transform-origin:100% 0">716.3</span></div><div class="r" style="left:56.0px;top:501.6px;width:38.0px;height:11.0px;background:#e8e8e8;border:1px solid #2f63f0;box-sizing:border-box;"></div><div class="t" style="left:56.5px;top:502.1px;width:35.2px;text-align:right;color:#005c00;font-size:5.8px;line-height:6px;font-weight:normal;letter-spacing:0.15px;-webkit-text-stroke:0.22px #005c00;"><span style="display:inline-block;transform:scaleX(1.25);transform-origin:100% 0">2002</span></div><div class="r" style="left:95.0px;top:501.6px;width:48.0px;height:11.0px;background:#e8e8e8;border:1px solid #2f63f0;box-sizing:border-box;"></div><div class="t" style="left:95.5px;top:502.1px;width:45.2px;text-align:right;color:#005c00;font-size:5.8px;line-height:6px;font-weight:normal;letter-spacing:0.15px;-webkit-text-stroke:0.22px #005c00;"><span style="display:inline-block;transform:scaleX(1.25);transform-origin:100% 0">150.0</span></div><div class="r" style="left:144.0px;top:501.6px;width:63.0px;height:11.0px;background:#e8e8e8;border:1px solid #2f63f0;box-sizing:border-box;"></div><div class="t" style="left:144.5px;top:502.1px;width:60.2px;text-align:right;color:#005c00;font-size:5.8px;line-height:6px;font-weight:normal;letter-spacing:0.15px;-webkit-text-stroke:0.22px #005c00;"><span style="display:inline-block;transform:scaleX(1.25);transform-origin:100% 0">75.5</span></div><div class="r" style="left:208.0px;top:501.6px;width:48.0px;height:11.0px;background:#e8e8e8;border:1px solid #2f63f0;box-sizing:border-box;"></div><div class="t" style="left:208.5px;top:502.1px;width:45.2px;text-align:right;color:#005c00;font-size:5.8px;line-height:6px;font-weight:normal;letter-spacing:0.15px;-webkit-text-stroke:0.22px #005c00;"><span style="display:inline-block;transform:scaleX(1.25);transform-origin:100% 0">16.4</span></div><div class="r" style="left:257.0px;top:501.6px;width:58.0px;height:11.0px;background:#e8e8e8;border:1px solid #2f63f0;box-sizing:border-box;"></div><div class="t" style="left:257.5px;top:502.1px;width:55.2px;text-align:right;color:#005c00;font-size:5.8px;line-height:6px;font-weight:normal;letter-spacing:0.15px;-webkit-text-stroke:0.22px #005c00;"><span style="display:inline-block;transform:scaleX(1.25);transform-origin:100% 0">115.4</span></div><div class="r" style="left:316.0px;top:501.6px;width:54.0px;height:11.0px;background:#e8e8e8;border:1px solid #2f63f0;box-sizing:border-box;"></div><div class="t" style="left:316.5px;top:502.1px;width:51.2px;text-align:right;color:#005c00;font-size:5.8px;line-height:6px;font-weight:normal;letter-spacing:0.15px;-webkit-text-stroke:0.22px #005c00;"><span style="display:inline-block;transform:scaleX(1.25);transform-origin:100% 0">434.5</span></div><div class="r" style="left:371.0px;top:501.6px;width:37.0px;height:11.0px;background:#e8e8e8;border:1px solid #2f63f0;box-sizing:border-box;"></div><div class="t" style="left:371.5px;top:502.1px;width:34.2px;text-align:right;color:#005c00;font-size:5.8px;line-height:6px;font-weight:normal;letter-spacing:0.15px;-webkit-text-stroke:0.22px #005c00;"><span style="display:inline-block;transform:scaleX(1.25);transform-origin:100% 0">802.6</span></div><div class="r" style="left:56.0px;top:513.0px;width:38.0px;height:11.0px;background:#e8e8e8;border:1px solid #2f63f0;box-sizing:border-box;"></div><div class="t" style="left:56.5px;top:513.5px;width:35.2px;text-align:right;color:#005c00;font-size:5.8px;line-height:6px;font-weight:normal;letter-spacing:0.15px;-webkit-text-stroke:0.22px #005c00;"><span style="display:inline-block;transform:scaleX(1.25);transform-origin:100% 0">2003</span></div><div class="r" style="left:95.0px;top:513.0px;width:48.0px;height:11.0px;background:#e8e8e8;border:1px solid #2f63f0;box-sizing:border-box;"></div><div class="t" style="left:95.5px;top:513.5px;width:45.2px;text-align:right;color:#005c00;font-size:5.8px;line-height:6px;font-weight:normal;letter-spacing:0.15px;-webkit-text-stroke:0.22px #005c00;"><span style="display:inline-block;transform:scaleX(1.25);transform-origin:100% 0">3.2</span></div><div class="r" style="left:144.0px;top:513.0px;width:63.0px;height:11.0px;background:#e8e8e8;border:1px solid #2f63f0;box-sizing:border-box;"></div><div class="t" style="left:144.5px;top:513.5px;width:60.2px;text-align:right;color:#005c00;font-size:5.8px;line-height:6px;font-weight:normal;letter-spacing:0.15px;-webkit-text-stroke:0.22px #005c00;"><span style="display:inline-block;transform:scaleX(1.25);transform-origin:100% 0">75.3</span></div><div class="r" style="left:208.0px;top:513.0px;width:48.0px;height:11.0px;background:#e8e8e8;border:1px solid #2f63f0;box-sizing:border-box;"></div><div class="t" style="left:208.5px;top:513.5px;width:45.2px;text-align:right;color:#005c00;font-size:5.8px;line-height:6px;font-weight:normal;letter-spacing:0.15px;-webkit-text-stroke:0.22px #005c00;"><span style="display:inline-block;transform:scaleX(1.25);transform-origin:100% 0">6.2</span></div><div class="r" style="left:257.0px;top:513.0px;width:58.0px;height:11.0px;background:#e8e8e8;border:1px solid #2f63f0;box-sizing:border-box;"></div><div class="t" style="left:257.5px;top:513.5px;width:55.2px;text-align:right;color:#005c00;font-size:5.8px;line-height:6px;font-weight:normal;letter-spacing:0.15px;-webkit-text-stroke:0.22px #005c00;"><span style="display:inline-block;transform:scaleX(1.25);transform-origin:100% 0">121.8</span></div><div class="r" style="left:316.0px;top:513.0px;width:54.0px;height:11.0px;background:#e8e8e8;border:1px solid #2f63f0;box-sizing:border-box;"></div><div class="t" style="left:316.5px;top:513.5px;width:51.2px;text-align:right;color:#005c00;font-size:5.8px;line-height:6px;font-weight:normal;letter-spacing:0.15px;-webkit-text-stroke:0.22px #005c00;"><span style="display:inline-block;transform:scaleX(1.25);transform-origin:100% 0">455.6</span></div><div class="r" style="left:371.0px;top:513.0px;width:37.0px;height:11.0px;background:#e8e8e8;border:1px solid #2f63f0;box-sizing:border-box;"></div><div class="t" style="left:371.5px;top:513.5px;width:34.2px;text-align:right;color:#005c00;font-size:5.8px;line-height:6px;font-weight:normal;letter-spacing:0.15px;-webkit-text-stroke:0.22px #005c00;"><span style="display:inline-block;transform:scaleX(1.25);transform-origin:100% 0">662.8</span></div><div class="r" style="left:56.0px;top:524.5px;width:38.0px;height:11.0px;background:#e8e8e8;border:1px solid #2f63f0;box-sizing:border-box;"></div><div class="t" style="left:56.5px;top:525.0px;width:35.2px;text-align:right;color:#005c00;font-size:5.8px;line-height:6px;font-weight:normal;letter-spacing:0.15px;-webkit-text-stroke:0.22px #005c00;"><span style="display:inline-block;transform:scaleX(1.25);transform-origin:100% 0">2004</span></div><div class="r" style="left:95.0px;top:524.5px;width:48.0px;height:11.0px;background:#e8e8e8;border:1px solid #2f63f0;box-sizing:border-box;"></div><div class="t" style="left:95.5px;top:525.0px;width:45.2px;text-align:right;color:#005c00;font-size:5.8px;line-height:6px;font-weight:normal;letter-spacing:0.15px;-webkit-text-stroke:0.22px #005c00;"><span style="display:inline-block;transform:scaleX(1.25);transform-origin:100% 0">2.7</span></div><div class="r" style="left:144.0px;top:524.5px;width:63.0px;height:11.0px;background:#e8e8e8;border:1px solid #2f63f0;box-sizing:border-box;"></div><div class="t" style="left:144.5px;top:525.0px;width:60.2px;text-align:right;color:#005c00;font-size:5.8px;line-height:6px;font-weight:normal;letter-spacing:0.15px;-webkit-text-stroke:0.22px #005c00;"><span style="display:inline-block;transform:scaleX(1.25);transform-origin:100% 0">78.0</span></div><div class="r" style="left:208.0px;top:524.5px;width:48.0px;height:11.0px;background:#e8e8e8;border:1px solid #2f63f0;box-sizing:border-box;"></div><div class="t" style="left:208.5px;top:525.0px;width:45.2px;text-align:right;color:#005c00;font-size:5.8px;line-height:6px;font-weight:normal;letter-spacing:0.15px;-webkit-text-stroke:0.22px #005c00;"><span style="display:inline-block;transform:scaleX(1.25);transform-origin:100% 0">10.0</span></div><div class="r" style="left:257.0px;top:524.5px;width:58.0px;height:11.0px;background:#e8e8e8;border:1px solid #2f63f0;box-sizing:border-box;"></div><div class="t" style="left:257.5px;top:525.0px;width:55.2px;text-align:right;color:#005c00;font-size:5.8px;line-height:6px;font-weight:normal;letter-spacing:0.15px;-webkit-text-stroke:0.22px #005c00;"><span style="display:inline-block;transform:scaleX(1.25);transform-origin:100% 0">145.3</span></div><div class="r" style="left:316.0px;top:524.5px;width:54.0px;height:11.0px;background:#e8e8e8;border:1px solid #2f63f0;box-sizing:border-box;"></div><div class="t" style="left:316.5px;top:525.0px;width:51.2px;text-align:right;color:#005c00;font-size:5.8px;line-height:6px;font-weight:normal;letter-spacing:0.15px;-webkit-text-stroke:0.22px #005c00;"><span style="display:inline-block;transform:scaleX(1.25);transform-origin:100% 0">419.7</span></div><div class="r" style="left:371.0px;top:524.5px;width:37.0px;height:11.0px;background:#e8e8e8;border:1px solid #2f63f0;box-sizing:border-box;"></div><div class="t" style="left:371.5px;top:525.0px;width:34.2px;text-align:right;color:#005c00;font-size:5.8px;line-height:6px;font-weight:normal;letter-spacing:0.15px;-webkit-text-stroke:0.22px #005c00;"><span style="display:inline-block;transform:scaleX(1.25);transform-origin:100% 0">678.8</span></div><div class="r" style="left:56.0px;top:535.9px;width:38.0px;height:11.0px;background:#e8e8e8;border:1px solid #2f63f0;box-sizing:border-box;"></div><div class="t" style="left:56.5px;top:536.4px;width:35.2px;text-align:right;color:#005c00;font-size:5.8px;line-height:6px;font-weight:normal;letter-spacing:0.15px;-webkit-text-stroke:0.22px #005c00;"><span style="display:inline-block;transform:scaleX(1.25);transform-origin:100% 0">2005</span></div><div class="r" style="left:95.0px;top:535.9px;width:48.0px;height:11.0px;background:#e8e8e8;border:1px solid #2f63f0;box-sizing:border-box;"></div><div class="t" style="left:95.5px;top:536.4px;width:45.2px;text-align:right;color:#005c00;font-size:5.8px;line-height:6px;font-weight:normal;letter-spacing:0.15px;-webkit-text-stroke:0.22px #005c00;"><span style="display:inline-block;transform:scaleX(1.25);transform-origin:100% 0">3.8</span></div><div class="r" style="left:144.0px;top:535.9px;width:63.0px;height:11.0px;background:#e8e8e8;border:1px solid #2f63f0;box-sizing:border-box;"></div><div class="t" style="left:144.5px;top:536.4px;width:60.2px;text-align:right;color:#005c00;font-size:5.8px;line-height:6px;font-weight:normal;letter-spacing:0.15px;-webkit-text-stroke:0.22px #005c00;"><span style="display:inline-block;transform:scaleX(1.25);transform-origin:100% 0">75.8</span></div><div class="r" style="left:208.0px;top:535.9px;width:48.0px;height:11.0px;background:#e8e8e8;border:1px solid #2f63f0;box-sizing:border-box;"></div><div class="t" style="left:208.5px;top:536.4px;width:45.2px;text-align:right;color:#005c00;font-size:5.8px;line-height:6px;font-weight:normal;letter-spacing:0.15px;-webkit-text-stroke:0.22px #005c00;"><span style="display:inline-block;transform:scaleX(1.25);transform-origin:100% 0">3.8</span></div><div class="r" style="left:257.0px;top:535.9px;width:58.0px;height:11.0px;background:#e8e8e8;border:1px solid #2f63f0;box-sizing:border-box;"></div><div class="t" style="left:257.5px;top:536.4px;width:55.2px;text-align:right;color:#005c00;font-size:5.8px;line-height:6px;font-weight:normal;letter-spacing:0.15px;-webkit-text-stroke:0.22px #005c00;"><span style="display:inline-block;transform:scaleX(1.25);transform-origin:100% 0">155.6</span></div><div class="r" style="left:316.0px;top:535.9px;width:54.0px;height:11.0px;background:#e8e8e8;border:1px solid #2f63f0;box-sizing:border-box;"></div><div class="t" style="left:316.5px;top:536.4px;width:51.2px;text-align:right;color:#005c00;font-size:5.8px;line-height:6px;font-weight:normal;letter-spacing:0.15px;-webkit-text-stroke:0.22px #005c00;"><span style="display:inline-block;transform:scaleX(1.25);transform-origin:100% 0">372.4</span></div><div class="r" style="left:371.0px;top:535.9px;width:37.0px;height:11.0px;background:#e8e8e8;border:1px solid #2f63f0;box-sizing:border-box;"></div><div class="t" style="left:371.5px;top:536.4px;width:34.2px;text-align:right;color:#005c00;font-size:5.8px;line-height:6px;font-weight:normal;letter-spacing:0.15px;-webkit-text-stroke:0.22px #005c00;"><span style="display:inline-block;transform:scaleX(1.25);transform-origin:100% 0">626.5</span></div><div class="r" style="left:56px;top:42px;width:354px;height:505px;border:1px solid #2f63f0;box-sizing:border-box;"></div><div class="r" style="left:53px;top:657px;width:359px;height:200px;background:#fff;border-top:2px solid #6f6f6f;border-left:2px solid #6f6f6f;border-right:2px solid #6f6f6f;border-bottom:2px solid #6f6f6f;box-sizing:border-box;"></div><div class="r" style="left:56px;top:660px;width:354px;height:200px;border:1px solid #2f63f0;box-sizing:border-box;"></div><div class="r" style="left:56.0px;top:661.0px;width:38.0px;height:10.9px;background:#e8e8e8;border:1px solid #2f63f0;box-sizing:border-box;"></div><div class="t" style="left:56.5px;top:661.5px;width:35.2px;text-align:right;color:#005c00;font-size:5.8px;line-height:6px;font-weight:normal;letter-spacing:0.15px;-webkit-text-stroke:0.22px #005c00;"><span style="display:inline-block;transform:scaleX(1.25);transform-origin:100% 0">2006</span></div><div class="r" style="left:95.0px;top:661.0px;width:48.0px;height:10.9px;background:#e8e8e8;border:1px solid #2f63f0;box-sizing:border-box;"></div><div class="t" style="left:95.5px;top:661.5px;width:45.2px;text-align:right;color:#005c00;font-size:5.8px;line-height:6px;font-weight:normal;letter-spacing:0.15px;-webkit-text-stroke:0.22px #005c00;"><span style="display:inline-block;transform:scaleX(1.25);transform-origin:100% 0">2.9</span></div><div class="r" style="left:144.0px;top:661.0px;width:63.0px;height:10.9px;background:#e8e8e8;border:1px solid #2f63f0;box-sizing:border-box;"></div><div class="t" style="left:144.5px;top:661.5px;width:60.2px;text-align:right;color:#005c00;font-size:5.8px;line-height:6px;font-weight:normal;letter-spacing:0.15px;-webkit-text-stroke:0.22px #005c00;"><span style="display:inline-block;transform:scaleX(1.25);transform-origin:100% 0">75.6</span></div><div class="r" style="left:208.0px;top:661.0px;width:48.0px;height:10.9px;background:#e8e8e8;border:1px solid #2f63f0;box-sizing:border-box;"></div><div class="t" style="left:208.5px;top:661.5px;width:45.2px;text-align:right;color:#005c00;font-size:5.8px;line-height:6px;font-weight:normal;letter-spacing:0.15px;-webkit-text-stroke:0.22px #005c00;"><span style="display:inline-block;transform:scaleX(1.25);transform-origin:100% 0">2.8</span></div><div class="r" style="left:257.0px;top:661.0px;width:58.0px;height:10.9px;background:#e8e8e8;border:1px solid #2f63f0;box-sizing:border-box;"></div><div class="t" style="left:257.5px;top:661.5px;width:55.2px;text-align:right;color:#005c00;font-size:5.8px;line-height:6px;font-weight:normal;letter-spacing:0.15px;-webkit-text-stroke:0.22px #005c00;"><span style="display:inline-block;transform:scaleX(1.25);transform-origin:100% 0">131.0</span></div><div class="r" style="left:316.0px;top:661.0px;width:54.0px;height:10.9px;background:#e8e8e8;border:1px solid #2f63f0;box-sizing:border-box;"></div><div class="t" style="left:316.5px;top:661.5px;width:51.2px;text-align:right;color:#005c00;font-size:5.8px;line-height:6px;font-weight:normal;letter-spacing:0.15px;-webkit-text-stroke:0.22px #005c00;"><span style="display:inline-block;transform:scaleX(1.25);transform-origin:100% 0">300.4</span></div><div class="r" style="left:371.0px;top:661.0px;width:37.0px;height:10.9px;background:#e8e8e8;border:1px solid #2f63f0;box-sizing:border-box;"></div><div class="t" style="left:371.5px;top:661.5px;width:34.2px;text-align:right;color:#005c00;font-size:5.8px;line-height:6px;font-weight:normal;letter-spacing:0.15px;-webkit-text-stroke:0.22px #005c00;"><span style="display:inline-block;transform:scaleX(1.25);transform-origin:100% 0">529.0</span></div><div class="r" style="left:56.0px;top:672.3px;width:38.0px;height:10.9px;background:#e8e8e8;border:1px solid #2f63f0;box-sizing:border-box;"></div><div class="t" style="left:56.5px;top:672.8px;width:35.2px;text-align:right;color:#005c00;font-size:5.8px;line-height:6px;font-weight:normal;letter-spacing:0.15px;-webkit-text-stroke:0.22px #005c00;"><span style="display:inline-block;transform:scaleX(1.25);transform-origin:100% 0">2007</span></div><div class="r" style="left:95.0px;top:672.3px;width:48.0px;height:10.9px;background:#e8e8e8;border:1px solid #2f63f0;box-sizing:border-box;"></div><div class="t" style="left:95.5px;top:672.8px;width:45.2px;text-align:right;color:#005c00;font-size:5.8px;line-height:6px;font-weight:normal;letter-spacing:0.15px;-webkit-text-stroke:0.22px #005c00;"><span style="display:inline-block;transform:scaleX(1.25);transform-origin:100% 0">2.6</span></div><div class="r" style="left:144.0px;top:672.3px;width:63.0px;height:10.9px;background:#e8e8e8;border:1px solid #2f63f0;box-sizing:border-box;"></div><div class="t" style="left:144.5px;top:672.8px;width:60.2px;text-align:right;color:#005c00;font-size:5.8px;line-height:6px;font-weight:normal;letter-spacing:0.15px;-webkit-text-stroke:0.22px #005c00;"><span style="display:inline-block;transform:scaleX(1.25);transform-origin:100% 0">80.8</span></div><div class="r" style="left:208.0px;top:672.3px;width:48.0px;height:10.9px;background:#e8e8e8;border:1px solid #2f63f0;box-sizing:border-box;"></div><div class="t" style="left:208.5px;top:672.8px;width:45.2px;text-align:right;color:#005c00;font-size:5.8px;line-height:6px;font-weight:normal;letter-spacing:0.15px;-webkit-text-stroke:0.22px #005c00;"><span style="display:inline-block;transform:scaleX(1.25);transform-origin:100% 0">0.0</span></div><div class="r" style="left:257.0px;top:672.3px;width:58.0px;height:10.9px;background:#e8e8e8;border:1px solid #2f63f0;box-sizing:border-box;"></div><div class="t" style="left:257.5px;top:672.8px;width:55.2px;text-align:right;color:#005c00;font-size:5.8px;line-height:6px;font-weight:normal;letter-spacing:0.15px;-webkit-text-stroke:0.22px #005c00;"><span style="display:inline-block;transform:scaleX(1.25);transform-origin:100% 0">142.1</span></div><div class="r" style="left:316.0px;top:672.3px;width:54.0px;height:10.9px;background:#e8e8e8;border:1px solid #2f63f0;box-sizing:border-box;"></div><div class="t" style="left:316.5px;top:672.8px;width:51.2px;text-align:right;color:#005c00;font-size:5.8px;line-height:6px;font-weight:normal;letter-spacing:0.15px;-webkit-text-stroke:0.22px #005c00;"><span style="display:inline-block;transform:scaleX(1.25);transform-origin:100% 0">255.4</span></div><div class="r" style="left:371.0px;top:672.3px;width:37.0px;height:10.9px;background:#e8e8e8;border:1px solid #2f63f0;box-sizing:border-box;"></div><div class="t" style="left:371.5px;top:672.8px;width:34.2px;text-align:right;color:#005c00;font-size:5.8px;line-height:6px;font-weight:normal;letter-spacing:0.15px;-webkit-text-stroke:0.22px #005c00;"><span style="display:inline-block;transform:scaleX(1.25);transform-origin:100% 0">488.0</span></div><div class="r" style="left:56.0px;top:683.6px;width:38.0px;height:10.9px;background:#e8e8e8;border:1px solid #2f63f0;box-sizing:border-box;"></div><div class="t" style="left:56.5px;top:684.1px;width:35.2px;text-align:right;color:#005c00;font-size:5.8px;line-height:6px;font-weight:normal;letter-spacing:0.15px;-webkit-text-stroke:0.22px #005c00;"><span style="display:inline-block;transform:scaleX(1.25);transform-origin:100% 0">2008</span></div><div class="r" style="left:95.0px;top:683.6px;width:48.0px;height:10.9px;background:#e8e8e8;border:1px solid #2f63f0;box-sizing:border-box;"></div><div class="t" style="left:95.5px;top:684.1px;width:45.2px;text-align:right;color:#005c00;font-size:5.8px;line-height:6px;font-weight:normal;letter-spacing:0.15px;-webkit-text-stroke:0.22px #005c00;"><span style="display:inline-block;transform:scaleX(1.25);transform-origin:100% 0">2.4</span></div><div class="r" style="left:144.0px;top:683.6px;width:63.0px;height:10.9px;background:#e8e8e8;border:1px solid #2f63f0;box-sizing:border-box;"></div><div class="t" style="left:144.5px;top:684.1px;width:60.2px;text-align:right;color:#005c00;font-size:5.8px;line-height:6px;font-weight:normal;letter-spacing:0.15px;-webkit-text-stroke:0.22px #005c00;"><span style="display:inline-block;transform:scaleX(1.25);transform-origin:100% 0">96.5</span></div><div class="r" style="left:208.0px;top:683.6px;width:48.0px;height:10.9px;background:#e8e8e8;border:1px solid #2f63f0;box-sizing:border-box;"></div><div class="t" style="left:208.5px;top:684.1px;width:45.2px;text-align:right;color:#005c00;font-size:5.8px;line-height:6px;font-weight:normal;letter-spacing:0.15px;-webkit-text-stroke:0.22px #005c00;"><span style="display:inline-block;transform:scaleX(1.25);transform-origin:100% 0">0.0</span></div><div class="r" style="left:257.0px;top:683.6px;width:58.0px;height:10.9px;background:#e8e8e8;border:1px solid #2f63f0;box-sizing:border-box;"></div><div class="t" style="left:257.5px;top:684.1px;width:55.2px;text-align:right;color:#005c00;font-size:5.8px;line-height:6px;font-weight:normal;letter-spacing:0.15px;-webkit-text-stroke:0.22px #005c00;"><span style="display:inline-block;transform:scaleX(1.25);transform-origin:100% 0">160.9</span></div><div class="r" style="left:316.0px;top:683.6px;width:54.0px;height:10.9px;background:#e8e8e8;border:1px solid #2f63f0;box-sizing:border-box;"></div><div class="t" style="left:316.5px;top:684.1px;width:51.2px;text-align:right;color:#005c00;font-size:5.8px;line-height:6px;font-weight:normal;letter-spacing:0.15px;-webkit-text-stroke:0.22px #005c00;"><span style="display:inline-block;transform:scaleX(1.25);transform-origin:100% 0">283.0</span></div><div class="r" style="left:371.0px;top:683.6px;width:37.0px;height:10.9px;background:#e8e8e8;border:1px solid #2f63f0;box-sizing:border-box;"></div><div class="t" style="left:371.5px;top:684.1px;width:34.2px;text-align:right;color:#005c00;font-size:5.8px;line-height:6px;font-weight:normal;letter-spacing:0.15px;-webkit-text-stroke:0.22px #005c00;"><span style="display:inline-block;transform:scaleX(1.25);transform-origin:100% 0">543.0</span></div><div class="r" style="left:56.0px;top:694.9px;width:38.0px;height:10.9px;background:#e8e8e8;border:1px solid #2f63f0;box-sizing:border-box;"></div><div class="t" style="left:56.5px;top:695.4px;width:35.2px;text-align:right;color:#005c00;font-size:5.8px;line-height:6px;font-weight:normal;letter-spacing:0.15px;-webkit-text-stroke:0.22px #005c00;"><span style="display:inline-block;transform:scaleX(1.25);transform-origin:100% 0">2009</span></div><div class="r" style="left:95.0px;top:694.9px;width:48.0px;height:10.9px;background:#e8e8e8;border:1px solid #2f63f0;box-sizing:border-box;"></div><div class="t" style="left:95.5px;top:695.4px;width:45.2px;text-align:right;color:#005c00;font-size:5.8px;line-height:6px;font-weight:normal;letter-spacing:0.15px;-webkit-text-stroke:0.22px #005c00;"><span style="display:inline-block;transform:scaleX(1.25);transform-origin:100% 0">2.0</span></div><div class="r" style="left:144.0px;top:694.9px;width:63.0px;height:10.9px;background:#e8e8e8;border:1px solid #2f63f0;box-sizing:border-box;"></div><div class="t" style="left:144.5px;top:695.4px;width:60.2px;text-align:right;color:#005c00;font-size:5.8px;line-height:6px;font-weight:normal;letter-spacing:0.15px;-webkit-text-stroke:0.22px #005c00;"><span style="display:inline-block;transform:scaleX(1.25);transform-origin:100% 0">100.1</span></div><div class="r" style="left:208.0px;top:694.9px;width:48.0px;height:10.9px;background:#e8e8e8;border:1px solid #2f63f0;box-sizing:border-box;"></div><div class="t" style="left:208.5px;top:695.4px;width:45.2px;text-align:right;color:#005c00;font-size:5.8px;line-height:6px;font-weight:normal;letter-spacing:0.15px;-webkit-text-stroke:0.22px #005c00;"><span style="display:inline-block;transform:scaleX(1.25);transform-origin:100% 0">0.0</span></div><div class="r" style="left:257.0px;top:694.9px;width:58.0px;height:10.9px;background:#e8e8e8;border:1px solid #2f63f0;box-sizing:border-box;"></div><div class="t" style="left:257.5px;top:695.4px;width:55.2px;text-align:right;color:#005c00;font-size:5.8px;line-height:6px;font-weight:normal;letter-spacing:0.15px;-webkit-text-stroke:0.22px #005c00;"><span style="display:inline-block;transform:scaleX(1.25);transform-origin:100% 0">155.1</span></div><div class="r" style="left:316.0px;top:694.9px;width:54.0px;height:10.9px;background:#e8e8e8;border:1px solid #2f63f0;box-sizing:border-box;"></div><div class="t" style="left:316.5px;top:695.4px;width:51.2px;text-align:right;color:#005c00;font-size:5.8px;line-height:6px;font-weight:normal;letter-spacing:0.15px;-webkit-text-stroke:0.22px #005c00;"><span style="display:inline-block;transform:scaleX(1.25);transform-origin:100% 0">616.5</span></div><div class="r" style="left:371.0px;top:694.9px;width:37.0px;height:10.9px;background:#e8e8e8;border:1px solid #2f63f0;box-sizing:border-box;"></div><div class="t" style="left:371.5px;top:695.4px;width:34.2px;text-align:right;color:#005c00;font-size:5.8px;line-height:6px;font-weight:normal;letter-spacing:0.15px;-webkit-text-stroke:0.22px #005c00;"><span style="display:inline-block;transform:scaleX(1.25);transform-origin:100% 0">873.6</span></div><div class="r" style="left:56.0px;top:706.2px;width:38.0px;height:10.9px;background:#e8e8e8;border:1px solid #2f63f0;box-sizing:border-box;"></div><div class="t" style="left:56.5px;top:706.7px;width:35.2px;text-align:right;color:#005c00;font-size:5.8px;line-height:6px;font-weight:normal;letter-spacing:0.15px;-webkit-text-stroke:0.22px #005c00;"><span style="display:inline-block;transform:scaleX(1.25);transform-origin:100% 0">2010</span></div><div class="r" style="left:95.0px;top:706.2px;width:48.0px;height:10.9px;background:#e8e8e8;border:1px solid #2f63f0;box-sizing:border-box;"></div><div class="t" style="left:95.5px;top:706.7px;width:45.2px;text-align:right;color:#005c00;font-size:5.8px;line-height:6px;font-weight:normal;letter-spacing:0.15px;-webkit-text-stroke:0.22px #005c00;"><span style="display:inline-block;transform:scaleX(1.25);transform-origin:100% 0">2.5</span></div><div class="r" style="left:144.0px;top:706.2px;width:63.0px;height:10.9px;background:#e8e8e8;border:1px solid #2f63f0;box-sizing:border-box;"></div><div class="t" style="left:144.5px;top:706.7px;width:60.2px;text-align:right;color:#005c00;font-size:5.8px;line-height:6px;font-weight:normal;letter-spacing:0.15px;-webkit-text-stroke:0.22px #005c00;"><span style="display:inline-block;transform:scaleX(1.25);transform-origin:100% 0">95.4</span></div><div class="r" style="left:208.0px;top:706.2px;width:48.0px;height:10.9px;background:#e8e8e8;border:1px solid #2f63f0;box-sizing:border-box;"></div><div class="t" style="left:208.5px;top:706.7px;width:45.2px;text-align:right;color:#005c00;font-size:5.8px;line-height:6px;font-weight:normal;letter-spacing:0.15px;-webkit-text-stroke:0.22px #005c00;"><span style="display:inline-block;transform:scaleX(1.25);transform-origin:100% 0">0.6</span></div><div class="r" style="left:257.0px;top:706.2px;width:58.0px;height:10.9px;background:#e8e8e8;border:1px solid #2f63f0;box-sizing:border-box;"></div><div class="t" style="left:257.5px;top:706.7px;width:55.2px;text-align:right;color:#005c00;font-size:5.8px;line-height:6px;font-weight:normal;letter-spacing:0.15px;-webkit-text-stroke:0.22px #005c00;"><span style="display:inline-block;transform:scaleX(1.25);transform-origin:100% 0">165.0</span></div><div class="r" style="left:316.0px;top:706.2px;width:54.0px;height:10.9px;background:#e8e8e8;border:1px solid #2f63f0;box-sizing:border-box;"></div><div class="t" style="left:316.5px;top:706.7px;width:51.2px;text-align:right;color:#005c00;font-size:5.8px;line-height:6px;font-weight:normal;letter-spacing:0.15px;-webkit-text-stroke:0.22px #005c00;"><span style="display:inline-block;transform:scaleX(1.25);transform-origin:100% 0">630.7</span></div><div class="r" style="left:371.0px;top:706.2px;width:37.0px;height:10.9px;background:#e8e8e8;border:1px solid #2f63f0;box-sizing:border-box;"></div><div class="t" style="left:371.5px;top:706.7px;width:34.2px;text-align:right;color:#005c00;font-size:5.8px;line-height:6px;font-weight:normal;letter-spacing:0.15px;-webkit-text-stroke:0.22px #005c00;"><span style="display:inline-block;transform:scaleX(1.25);transform-origin:100% 0">895.8</span></div><div class="r" style="left:56.0px;top:717.5px;width:38.0px;height:10.9px;background:#e8e8e8;border:1px solid #2f63f0;box-sizing:border-box;"></div><div class="t" style="left:56.5px;top:718.0px;width:35.2px;text-align:right;color:#005c00;font-size:5.8px;line-height:6px;font-weight:normal;letter-spacing:0.15px;-webkit-text-stroke:0.22px #005c00;"><span style="display:inline-block;transform:scaleX(1.25);transform-origin:100% 0">2011</span></div><div class="r" style="left:95.0px;top:717.5px;width:48.0px;height:10.9px;background:#e8e8e8;border:1px solid #2f63f0;box-sizing:border-box;"></div><div class="t" style="left:95.5px;top:718.0px;width:45.2px;text-align:right;color:#005c00;font-size:5.8px;line-height:6px;font-weight:normal;letter-spacing:0.15px;-webkit-text-stroke:0.22px #005c00;"><span style="display:inline-block;transform:scaleX(1.25);transform-origin:100% 0">1.7</span></div><div class="r" style="left:144.0px;top:717.5px;width:63.0px;height:10.9px;background:#e8e8e8;border:1px solid #2f63f0;box-sizing:border-box;"></div><div class="t" style="left:144.5px;top:718.0px;width:60.2px;text-align:right;color:#005c00;font-size:5.8px;line-height:6px;font-weight:normal;letter-spacing:0.15px;-webkit-text-stroke:0.22px #005c00;"><span style="display:inline-block;transform:scaleX(1.25);transform-origin:100% 0">93.9</span></div><div class="r" style="left:208.0px;top:717.5px;width:48.0px;height:10.9px;background:#e8e8e8;border:1px solid #2f63f0;box-sizing:border-box;"></div><div class="t" style="left:208.5px;top:718.0px;width:45.2px;text-align:right;color:#005c00;font-size:5.8px;line-height:6px;font-weight:normal;letter-spacing:0.15px;-webkit-text-stroke:0.22px #005c00;"><span style="display:inline-block;transform:scaleX(1.25);transform-origin:100% 0">0.1</span></div><div class="r" style="left:257.0px;top:717.5px;width:58.0px;height:10.9px;background:#e8e8e8;border:1px solid #2f63f0;box-sizing:border-box;"></div><div class="t" style="left:257.5px;top:718.0px;width:55.2px;text-align:right;color:#005c00;font-size:5.8px;line-height:6px;font-weight:normal;letter-spacing:0.15px;-webkit-text-stroke:0.22px #005c00;"><span style="display:inline-block;transform:scaleX(1.25);transform-origin:100% 0">198.5</span></div><div class="r" style="left:316.0px;top:717.5px;width:54.0px;height:10.9px;background:#e8e8e8;border:1px solid #2f63f0;box-sizing:border-box;"></div><div class="t" style="left:316.5px;top:718.0px;width:51.2px;text-align:right;color:#005c00;font-size:5.8px;line-height:6px;font-weight:normal;letter-spacing:0.15px;-webkit-text-stroke:0.22px #005c00;"><span style="display:inline-block;transform:scaleX(1.25);transform-origin:100% 0">521.6</span></div><div class="r" style="left:371.0px;top:717.5px;width:37.0px;height:10.9px;background:#e8e8e8;border:1px solid #2f63f0;box-sizing:border-box;"></div><div class="t" style="left:371.5px;top:718.0px;width:34.2px;text-align:right;color:#005c00;font-size:5.8px;line-height:6px;font-weight:normal;letter-spacing:0.15px;-webkit-text-stroke:0.22px #005c00;"><span style="display:inline-block;transform:scaleX(1.25);transform-origin:100% 0">829.8</span></div><div class="r" style="left:56.0px;top:728.8px;width:38.0px;height:10.9px;background:#e8e8e8;border:1px solid #2f63f0;box-sizing:border-box;"></div><div class="t" style="left:56.5px;top:729.3px;width:35.2px;text-align:right;color:#005c00;font-size:5.8px;line-height:6px;font-weight:normal;letter-spacing:0.15px;-webkit-text-stroke:0.22px #005c00;"><span style="display:inline-block;transform:scaleX(1.25);transform-origin:100% 0">2012</span></div><div class="r" style="left:95.0px;top:728.8px;width:48.0px;height:10.9px;background:#e8e8e8;border:1px solid #2f63f0;box-sizing:border-box;"></div><div class="t" style="left:95.5px;top:729.3px;width:45.2px;text-align:right;color:#005c00;font-size:5.8px;line-height:6px;font-weight:normal;letter-spacing:0.15px;-webkit-text-stroke:0.22px #005c00;"><span style="display:inline-block;transform:scaleX(1.25);transform-origin:100% 0">2.7</span></div><div class="r" style="left:144.0px;top:728.8px;width:63.0px;height:10.9px;background:#e8e8e8;border:1px solid #2f63f0;box-sizing:border-box;"></div><div class="t" style="left:144.5px;top:729.3px;width:60.2px;text-align:right;color:#005c00;font-size:5.8px;line-height:6px;font-weight:normal;letter-spacing:0.15px;-webkit-text-stroke:0.22px #005c00;"><span style="display:inline-block;transform:scaleX(1.25);transform-origin:100% 0">97.4</span></div><div class="r" style="left:208.0px;top:728.8px;width:48.0px;height:10.9px;background:#e8e8e8;border:1px solid #2f63f0;box-sizing:border-box;"></div><div class="t" style="left:208.5px;top:729.3px;width:45.2px;text-align:right;color:#005c00;font-size:5.8px;line-height:6px;font-weight:normal;letter-spacing:0.15px;-webkit-text-stroke:0.22px #005c00;"><span style="display:inline-block;transform:scaleX(1.25);transform-origin:100% 0">0.0</span></div><div class="r" style="left:257.0px;top:728.8px;width:58.0px;height:10.9px;background:#e8e8e8;border:1px solid #2f63f0;box-sizing:border-box;"></div><div class="t" style="left:257.5px;top:729.3px;width:55.2px;text-align:right;color:#005c00;font-size:5.8px;line-height:6px;font-weight:normal;letter-spacing:0.15px;-webkit-text-stroke:0.22px #005c00;"><span style="display:inline-block;transform:scaleX(1.25);transform-origin:100% 0">208.9</span></div><div class="r" style="left:316.0px;top:728.8px;width:54.0px;height:10.9px;background:#e8e8e8;border:1px solid #2f63f0;box-sizing:border-box;"></div><div class="t" style="left:316.5px;top:729.3px;width:51.2px;text-align:right;color:#005c00;font-size:5.8px;line-height:6px;font-weight:normal;letter-spacing:0.15px;-webkit-text-stroke:0.22px #005c00;"><span style="display:inline-block;transform:scaleX(1.25);transform-origin:100% 0">443.6</span></div><div class="r" style="left:371.0px;top:728.8px;width:37.0px;height:10.9px;background:#e8e8e8;border:1px solid #2f63f0;box-sizing:border-box;"></div><div class="t" style="left:371.5px;top:729.3px;width:34.2px;text-align:right;color:#005c00;font-size:5.8px;line-height:6px;font-weight:normal;letter-spacing:0.15px;-webkit-text-stroke:0.22px #005c00;"><span style="display:inline-block;transform:scaleX(1.25);transform-origin:100% 0">756.0</span></div><div class="r" style="left:56.0px;top:740.1px;width:38.0px;height:10.9px;background:#e8e8e8;border:1px solid #2f63f0;box-sizing:border-box;"></div><div class="t" style="left:56.5px;top:740.6px;width:35.2px;text-align:right;color:#005c00;font-size:5.8px;line-height:6px;font-weight:normal;letter-spacing:0.15px;-webkit-text-stroke:0.22px #005c00;"><span style="display:inline-block;transform:scaleX(1.25);transform-origin:100% 0">2013</span></div><div class="r" style="left:95.0px;top:740.1px;width:48.0px;height:10.9px;background:#e8e8e8;border:1px solid #2f63f0;box-sizing:border-box;"></div><div class="t" style="left:95.5px;top:740.6px;width:45.2px;text-align:right;color:#005c00;font-size:5.8px;line-height:6px;font-weight:normal;letter-spacing:0.15px;-webkit-text-stroke:0.22px #005c00;"><span style="display:inline-block;transform:scaleX(1.25);transform-origin:100% 0">2.5</span></div><div class="r" style="left:144.0px;top:740.1px;width:63.0px;height:10.9px;background:#e8e8e8;border:1px solid #2f63f0;box-sizing:border-box;"></div><div class="t" style="left:144.5px;top:740.6px;width:60.2px;text-align:right;color:#005c00;font-size:5.8px;line-height:6px;font-weight:normal;letter-spacing:0.15px;-webkit-text-stroke:0.22px #005c00;"><span style="display:inline-block;transform:scaleX(1.25);transform-origin:100% 0">100.0</span></div><div class="r" style="left:208.0px;top:740.1px;width:48.0px;height:10.9px;background:#e8e8e8;border:1px solid #2f63f0;box-sizing:border-box;"></div><div class="t" style="left:208.5px;top:740.6px;width:45.2px;text-align:right;color:#005c00;font-size:5.8px;line-height:6px;font-weight:normal;letter-spacing:0.15px;-webkit-text-stroke:0.22px #005c00;"><span style="display:inline-block;transform:scaleX(1.25);transform-origin:100% 0">0.0</span></div><div class="r" style="left:257.0px;top:740.1px;width:58.0px;height:10.9px;background:#e8e8e8;border:1px solid #2f63f0;box-sizing:border-box;"></div><div class="t" style="left:257.5px;top:740.6px;width:55.2px;text-align:right;color:#005c00;font-size:5.8px;line-height:6px;font-weight:normal;letter-spacing:0.15px;-webkit-text-stroke:0.22px #005c00;"><span style="display:inline-block;transform:scaleX(1.25);transform-origin:100% 0">200.0</span></div><div class="r" style="left:316.0px;top:740.1px;width:54.0px;height:10.9px;background:#e8e8e8;border:1px solid #2f63f0;box-sizing:border-box;"></div><div class="t" style="left:316.5px;top:740.6px;width:51.2px;text-align:right;color:#005c00;font-size:5.8px;line-height:6px;font-weight:normal;letter-spacing:0.15px;-webkit-text-stroke:0.22px #005c00;"><span style="display:inline-block;transform:scaleX(1.25);transform-origin:100% 0">400.0</span></div><div class="r" style="left:371.0px;top:740.1px;width:37.0px;height:10.9px;background:#e8e8e8;border:1px solid #2f63f0;box-sizing:border-box;"></div><div class="t" style="left:371.5px;top:740.6px;width:34.2px;text-align:right;color:#005c00;font-size:5.8px;line-height:6px;font-weight:normal;letter-spacing:0.15px;-webkit-text-stroke:0.22px #005c00;"><span style="display:inline-block;transform:scaleX(1.25);transform-origin:100% 0">700.0</span></div><div class="r" style="left:59px;top:664.0px;width:14px;height:11px;background:#f4f4f4;border:1px solid #cfcfcf;border-radius:3px;box-sizing:border-box;opacity:0.3"></div><svg class="r" style="left:61px;top:667px;opacity:0.3" width="10" height="6"><path d="M1 0.5 L9 0.5 L5 5 Z" fill="#c00000"/></svg></div><div class="r" style="left:487px;top:55px;width:4px;height:423px;background:#c4c4c4;border-radius:2px;"></div><div class="r" style="left:502px;top:7px;width:3px;height:792px;background:#b5b5b5;"></div><svg class="r" style="left:508px;top:14px" width="11" height="10"><path d="M0.5 1 L10 1 L5.25 8.8 Z" fill="#a0a0a0" stroke="#8f8f8f" stroke-width="0.6"/></svg><div class="r" style="left:521px;top:9px;width:717px;height:22px;background:#ebebeb;border:1px solid #adadad;box-sizing:border-box;"></div><div class="t" style="left:524.5px;top:12.73px;font-size:14.5px;line-height:14.5px;font-weight:bold;color:#000;">Table Preview</div><div class="r" style="left:524.5px;top:35px;width:179px;height:20.5px;background:#fff;border:1px solid #dcdcdc;border-radius:4px;box-sizing:border-box;"></div><div class="t" style="left:524.5px;top:39.84px;font-size:12px;line-height:12px;font-weight:normal;color:#1a1a1a;width:179px;text-align:center;">Auto-detect tables</div><div class="r" style="left:524.5px;top:61px;width:179px;height:20px;background:#fff;border:1px solid #dcdcdc;border-radius:4px;box-sizing:border-box;"></div><div class="t" style="left:524.5px;top:65.34px;font-size:12px;line-height:12px;font-weight:normal;color:#1a1a1a;width:179px;text-align:center;">Ignore all tables</div><svg class="r" style="left:707px;top:35px" width="14" height="14"><circle cx="7" cy="7" r="5.5" fill="#efefef" stroke="#8a8a8a" stroke-width="1"/></svg><svg class="r" style="left:707px;top:48.7px" width="14" height="14"><circle cx="7" cy="7" r="5.5" fill="#efefef" stroke="#8a8a8a" stroke-width="1"/></svg><svg class="r" style="left:707px;top:62.8px" width="14" height="14"><circle cx="7" cy="7" r="4.75" fill="#fff" stroke="#0563c3" stroke-width="2.45"/></svg><div class="t" style="left:724.5px;top:35.54px;font-size:12px;line-height:12px;font-weight:normal;color:#1a1a1a;">Concatenate all tables into one</div><div class="t" style="left:724.5px;top:50.04px;font-size:12px;line-height:12px;font-weight:normal;color:#1a1a1a;">Individual tables</div><div class="t" style="left:724.5px;top:63.84px;font-size:12px;line-height:12px;font-weight:normal;color:#1a1a1a;">Concatenate tables with matching column names</div><div class="r" style="left:991px;top:36.5px;width:12px;height:12.5px;background:#035ebd;border-radius:2.5px;"></div><svg class="r" style="left:991px;top:36.5px" width="13" height="13"><path d="M2.8 6.8 L5.2 9 L9.6 4.4" fill="none" stroke="#fff" stroke-width="1.1"/></svg><div class="t" style="left:1007px;top:35.84px;font-size:12px;line-height:12px;font-weight:normal;color:#1a1a1a;">Horizontal layout</div><div class="t" style="left:527.5px;top:90.64px;font-size:12px;line-height:12px;font-weight:normal;color:#1a1a1a;">Minimum column count</div><div class="r" style="left:661px;top:88px;width:26px;height:19px;background:#fff;border:1px solid #7a7a7a;box-sizing:border-box;"></div><div class="t" style="left:661px;top:90.84px;font-size:12px;line-height:12px;font-weight:normal;color:#1a1a1a;width:21px;text-align:right;">2</div><div class="t" style="left:527.5px;top:115.34px;font-size:12px;line-height:12px;font-weight:normal;color:#1a1a1a;">Minimum row count</div><div class="r" style="left:661px;top:112px;width:26px;height:19px;background:#fff;border:1px solid #7a7a7a;box-sizing:border-box;"></div><div class="t" style="left:661px;top:114.84px;font-size:12px;line-height:12px;font-weight:normal;color:#1a1a1a;width:21px;text-align:right;">3</div><svg class="r" style="left:689px;top:90px" width="10" height="16"><path d="M1.8 4.4 L5 1.2 L8.2 4.4 M1.8 12 L5 15.2 L8.2 12" fill="none" stroke="#333" stroke-width="1.05"/></svg><svg class="r" style="left:689px;top:114px" width="10" height="16"><path d="M1.8 4.4 L5 1.2 L8.2 4.4 M1.8 12 L5 15.2 L8.2 12" fill="none" stroke="#333" stroke-width="1.05"/></svg><div class="t" style="left:527.5px;top:138.64px;font-size:12px;line-height:12px;font-weight:normal;color:#1a1a1a;">Number of data tables</div><div class="t" style="left:692px;top:138.64px;font-size:12px;line-height:12px;font-weight:normal;color:#1a1a1a;">1</div><div class="r" style="left:522px;top:157px;width:715px;height:640px;border:1px solid #a6a6a6;box-sizing:border-box;"></div><div class="r" style="left:815.5px;top:162.5px;width:130px;height:20px;background:#fff;border:1px solid #e2e2e2;border-radius:4px;box-sizing:border-box;"></div><div class="t" style="left:820.5px;top:167.01px;font-size:11.8px;line-height:11.8px;font-weight:normal;color:#1a1a1a;letter-spacing:-0.32px;">Page(1)&nbsp; Table(1)</div><svg class="r" style="left:924px;top:169px" width="11" height="8"><path d="M1 1.5 L5 5.5 L9 1.5" fill="none" stroke="#555" stroke-width="1.1"/></svg><div class="r" style="left:524px;top:185px;width:712px;height:1.2px;background:#9a9a9a;"></div><div class="r" style="left:526px;top:188px;width:709px;height:3px;background:#0d63bf;"></div><div class="r" style="left:526px;top:191px;width:709px;height:599px;overflow:hidden;background:#fff;"><div class="r" style="left:0;top:0;width:709px;height:35px;background:#f7f7f7;"></div><div class="r" style="left:0;top:35px;width:80px;height:600px;background:#f5f5f5;"></div><div class="r" style="left:0;top:35px;width:709px;height:1.5px;background:#d6d6d6;"></div><div class="r" style="left:80px;top:0;width:2px;height:600px;background:#d9d9d9;"></div><div class="r" style="left:129px;top:0;width:1px;height:600px;background:#dcdcdc;"></div><div class="r" style="left:177px;top:0;width:1px;height:600px;background:#dcdcdc;"></div><div class="r" style="left:504px;top:0;width:1px;height:600px;background:#dcdcdc;"></div><div class="r" style="left:0;top:55px;width:709px;height:1px;background:#dedede;"></div><div class="r" style="left:0;top:74px;width:709px;height:1px;background:#dedede;"></div><div class="r" style="left:0;top:93px;width:709px;height:1px;background:#dedede;"></div><div class="r" style="left:0;top:112px;width:709px;height:1px;background:#dedede;"></div><div class="r" style="left:0;top:131px;width:709px;height:1px;background:#dedede;"></div><div class="r" style="left:0;top:150px;width:709px;height:1px;background:#dedede;"></div><div class="r" style="left:0;top:169px;width:709px;height:1px;background:#dedede;"></div><div class="r" style="left:0;top:188px;width:709px;height:1px;background:#dedede;"></div><div class="r" style="left:0;top:207px;width:709px;height:1px;background:#dedede;"></div><div class="r" style="left:0;top:226px;width:709px;height:1px;background:#dedede;"></div><div class="r" style="left:0;top:245px;width:709px;height:1px;background:#dedede;"></div><div class="r" style="left:0;top:264px;width:709px;height:1px;background:#dedede;"></div><div class="r" style="left:0;top:283px;width:709px;height:1px;background:#dedede;"></div><div class="r" style="left:0;top:302px;width:709px;height:1px;background:#dedede;"></div><div class="r" style="left:0;top:321px;width:709px;height:1px;background:#dedede;"></div><div class="r" style="left:0;top:340px;width:709px;height:1px;background:#dedede;"></div><div class="r" style="left:0;top:359px;width:709px;height:1px;background:#dedede;"></div><div class="r" style="left:0;top:378px;width:709px;height:1px;background:#dedede;"></div><div class="r" style="left:0;top:397px;width:709px;height:1px;background:#dedede;"></div><div class="r" style="left:0;top:416px;width:709px;height:1px;background:#dedede;"></div><div class="r" style="left:0;top:435px;width:709px;height:1px;background:#dedede;"></div><div class="r" style="left:0;top:454px;width:709px;height:1px;background:#dedede;"></div><div class="r" style="left:0;top:473px;width:709px;height:1px;background:#dedede;"></div><div class="r" style="left:0;top:492px;width:709px;height:1px;background:#dedede;"></div><div class="r" style="left:0;top:511px;width:709px;height:1px;background:#dedede;"></div><div class="r" style="left:0;top:530px;width:709px;height:1px;background:#dedede;"></div><div class="r" style="left:0;top:549px;width:709px;height:1px;background:#dedede;"></div><div class="r" style="left:0;top:568px;width:709px;height:1px;background:#dedede;"></div><div class="r" style="left:0;top:587px;width:709px;height:1px;background:#dedede;"></div><div class="r" style="left:0;top:606px;width:709px;height:1px;background:#dedede;"></div><svg class="r" style="left:0;top:0" width="80" height="36"><line x1="20" y1="4.5" x2="79" y2="34.5" stroke="#cfcfcf" stroke-width="1"/></svg><div class="t" style="left:23.3px;top:21.2px;font-size:12.5px;line-height:12px;font-weight:bold;color:#333;">&Sigma;</div><svg class="r" style="left:65px;top:17.8px" width="12" height="12"><rect x="0.6" y="0.3" width="1" height="11" fill="#7088b8"/><rect x="2" y="1.5" width="6" height="1.6" fill="#8a9a80"/><rect x="2" y="4.5" width="9" height="1.6" fill="#8a9a80"/><rect x="2" y="7.5" width="5" height="1.6" fill="#8a9a80"/></svg><div class="t" style="left:92.29999999999995px;top:19.97px;font-size:12.2px;line-height:12.2px;font-weight:bold;color:#111;letter-spacing:-0.45px;">Page</div><div class="t" style="left:138px;top:19.97px;font-size:12.2px;line-height:12.2px;font-weight:bold;color:#111;letter-spacing:-0.3px;">Table</div><div class="t" style="left:219px;top:19.73px;font-size:12.6px;line-height:12.6px;font-weight:bold;color:#111;letter-spacing:-0.68px;">COST OF FOOD DISTRIBUTION PROGRAMS</div><div class="t" style="left:572.4000000000001px;top:19.73px;font-size:12.6px;line-height:12.6px;font-weight:bold;color:#111;letter-spacing:-0.68px;">COST OF FOOD DISTRIBUTION PROGRAMS</div><div class="t" style="left:0px;top:39.84px;font-size:12px;line-height:12px;font-weight:normal;color:#606060;width:75px;text-align:right;">1</div><div class="t" style="left:81px;top:39.84px;font-size:12px;line-height:12px;font-weight:normal;color:#1a1a1a;width:44px;text-align:right;">1</div><div class="t" style="left:130px;top:39.84px;font-size:12px;line-height:12px;font-weight:normal;color:#1a1a1a;width:43px;text-align:right;">1</div><div class="t" style="left:182px;top:39.84px;font-size:12px;line-height:12px;font-weight:normal;color:#1a1a1a;">(Data as of March 08, 2019)</div><div class="t" style="left:509.5px;top:39.84px;font-size:12px;line-height:12px;font-weight:normal;color:#1a1a1a;">(Data as of March 08, 2019)</div><div class="t" style="left:0px;top:58.84px;font-size:12px;line-height:12px;font-weight:normal;color:#606060;width:75px;text-align:right;">2</div><div class="t" style="left:81px;top:58.84px;font-size:12px;line-height:12px;font-weight:normal;color:#1a1a1a;width:44px;text-align:right;">1</div><div class="t" style="left:130px;top:58.84px;font-size:12px;line-height:12px;font-weight:normal;color:#1a1a1a;width:43px;text-align:right;">1</div><div class="t" style="left:509.5px;top:58.84px;font-size:12px;line-height:12px;font-weight:normal;color:#1a1a1a;">Nutrition</div><div class="t" style="left:0px;top:77.84px;font-size:12px;line-height:12px;font-weight:normal;color:#606060;width:75px;text-align:right;">3</div><div class="t" style="left:81px;top:77.84px;font-size:12px;line-height:12px;font-weight:normal;color:#1a1a1a;width:44px;text-align:right;">1</div><div class="t" style="left:130px;top:77.84px;font-size:12px;line-height:12px;font-weight:normal;color:#1a1a1a;width:43px;text-align:right;">1</div><div class="t" style="left:509.5px;top:77.84px;font-size:12px;line-height:12px;font-weight:normal;color:#1a1a1a;">Services</div><div class="t" style="left:0px;top:96.84px;font-size:12px;line-height:12px;font-weight:normal;color:#606060;width:75px;text-align:right;">4</div><div class="t" style="left:81px;top:96.84px;font-size:12px;line-height:12px;font-weight:normal;color:#1a1a1a;width:44px;text-align:right;">1</div><div class="t" style="left:130px;top:96.84px;font-size:12px;line-height:12px;font-weight:normal;color:#1a1a1a;width:43px;text-align:right;">1</div><div class="t" style="left:182px;top:96.84px;font-size:12px;line-height:12px;font-weight:normal;color:#1a1a1a;">Fiscal</div><div class="t" style="left:509.5px;top:96.84px;font-size:12px;line-height:12px;font-weight:normal;color:#1a1a1a;">Incentive</div><div class="t" style="left:0px;top:115.84px;font-size:12px;line-height:12px;font-weight:normal;color:#606060;width:75px;text-align:right;">5</div><div class="t" style="left:81px;top:115.84px;font-size:12px;line-height:12px;font-weight:normal;color:#1a1a1a;width:44px;text-align:right;">1</div><div class="t" style="left:130px;top:115.84px;font-size:12px;line-height:12px;font-weight:normal;color:#1a1a1a;width:43px;text-align:right;">1</div><div class="t" style="left:182px;top:115.84px;font-size:12px;line-height:12px;font-weight:normal;color:#1a1a1a;">Year</div><div class="t" style="left:509.5px;top:115.84px;font-size:12px;line-height:12px;font-weight:normal;color:#1a1a1a;">Prog. 1]</div><div class="t" style="left:0px;top:134.84px;font-size:12px;line-height:12px;font-weight:normal;color:#606060;width:75px;text-align:right;">6</div><div class="t" style="left:81px;top:134.84px;font-size:12px;line-height:12px;font-weight:normal;color:#1a1a1a;width:44px;text-align:right;">1</div><div class="t" style="left:130px;top:134.84px;font-size:12px;line-height:12px;font-weight:normal;color:#1a1a1a;width:43px;text-align:right;">1</div><div class="t" style="left:191.5px;top:134.84px;font-size:12px;line-height:12px;font-weight:normal;color:#1a1a1a;"><span style="letter-spacing:1px">----------------------------------</span>Millions of Dollars<span style="letter-spacing:0.4px">--------</span>...</div><div class="t" style="left:519.5px;top:134.84px;font-size:12px;line-height:12px;font-weight:normal;color:#1a1a1a;"><span style="letter-spacing:1px">----------------------------------</span>Millions of Dollars</div><div class="t" style="left:0px;top:153.84px;font-size:12px;line-height:12px;font-weight:normal;color:#606060;width:75px;text-align:right;">7</div><div class="t" style="left:81px;top:153.84px;font-size:12px;line-height:12px;font-weight:normal;color:#1a1a1a;width:44px;text-align:right;">1</div><div class="t" style="left:130px;top:153.84px;font-size:12px;line-height:12px;font-weight:normal;color:#1a1a1a;width:43px;text-align:right;">1</div><div class="t" style="left:182px;top:153.84px;font-size:12px;line-height:12px;font-weight:normal;color:#1a1a1a;">1969</div><div class="t" style="left:509.5px;top:153.84px;font-size:12px;line-height:12px;font-weight:normal;color:#1a1a1a;"><span style="letter-spacing:1.3px">--</span></div><div class="t" style="left:0px;top:172.84px;font-size:12px;line-height:12px;font-weight:normal;color:#606060;width:75px;text-align:right;">8</div><div class="t" style="left:81px;top:172.84px;font-size:12px;line-height:12px;font-weight:normal;color:#1a1a1a;width:44px;text-align:right;">1</div><div class="t" style="left:130px;top:172.84px;font-size:12px;line-height:12px;font-weight:normal;color:#1a1a1a;width:43px;text-align:right;">1</div><div class="t" style="left:182px;top:172.84px;font-size:12px;line-height:12px;font-weight:normal;color:#1a1a1a;">1970</div><div class="t" style="left:509.5px;top:172.84px;font-size:12px;line-height:12px;font-weight:normal;color:#1a1a1a;"><span style="letter-spacing:1.3px">--</span></div><div class="t" style="left:0px;top:191.84px;font-size:12px;line-height:12px;font-weight:normal;color:#606060;width:75px;text-align:right;">9</div><div class="t" style="left:81px;top:191.84px;font-size:12px;line-height:12px;font-weight:normal;color:#1a1a1a;width:44px;text-align:right;">1</div><div class="t" style="left:130px;top:191.84px;font-size:12px;line-height:12px;font-weight:normal;color:#1a1a1a;width:43px;text-align:right;">1</div><div class="t" style="left:182px;top:191.84px;font-size:12px;line-height:12px;font-weight:normal;color:#1a1a1a;">1971</div><div class="t" style="left:509.5px;top:191.84px;font-size:12px;line-height:12px;font-weight:normal;color:#1a1a1a;"><span style="letter-spacing:1.3px">--</span></div><div class="t" style="left:0px;top:210.84px;font-size:12px;line-height:12px;font-weight:normal;color:#606060;width:75px;text-align:right;">10</div><div class="t" style="left:81px;top:210.84px;font-size:12px;line-height:12px;font-weight:normal;color:#1a1a1a;width:44px;text-align:right;">1</div><div class="t" style="left:130px;top:210.84px;font-size:12px;line-height:12px;font-weight:normal;color:#1a1a1a;width:43px;text-align:right;">1</div><div class="t" style="left:182px;top:210.84px;font-size:12px;line-height:12px;font-weight:normal;color:#1a1a1a;">1972</div><div class="t" style="left:509.5px;top:210.84px;font-size:12px;line-height:12px;font-weight:normal;color:#1a1a1a;"><span style="letter-spacing:1.3px">--</span></div><div class="t" style="left:0px;top:229.84px;font-size:12px;line-height:12px;font-weight:normal;color:#606060;width:75px;text-align:right;">11</div><div class="t" style="left:81px;top:229.84px;font-size:12px;line-height:12px;font-weight:normal;color:#1a1a1a;width:44px;text-align:right;">1</div><div class="t" style="left:130px;top:229.84px;font-size:12px;line-height:12px;font-weight:normal;color:#1a1a1a;width:43px;text-align:right;">1</div><div class="t" style="left:182px;top:229.84px;font-size:12px;line-height:12px;font-weight:normal;color:#1a1a1a;">1973</div><div class="t" style="left:509.5px;top:229.84px;font-size:12px;line-height:12px;font-weight:normal;color:#1a1a1a;"><span style="letter-spacing:1.3px">--</span></div><div class="t" style="left:0px;top:248.84px;font-size:12px;line-height:12px;font-weight:normal;color:#606060;width:75px;text-align:right;">12</div><div class="t" style="left:81px;top:248.84px;font-size:12px;line-height:12px;font-weight:normal;color:#1a1a1a;width:44px;text-align:right;">1</div><div class="t" style="left:130px;top:248.84px;font-size:12px;line-height:12px;font-weight:normal;color:#1a1a1a;width:43px;text-align:right;">1</div><div class="t" style="left:182px;top:248.84px;font-size:12px;line-height:12px;font-weight:normal;color:#1a1a1a;">1974</div><div class="t" style="left:509.5px;top:248.84px;font-size:12px;line-height:12px;font-weight:normal;color:#1a1a1a;"><span style="letter-spacing:1.3px">--</span></div><div class="t" style="left:0px;top:267.84px;font-size:12px;line-height:12px;font-weight:normal;color:#606060;width:75px;text-align:right;">13</div><div class="t" style="left:81px;top:267.84px;font-size:12px;line-height:12px;font-weight:normal;color:#1a1a1a;width:44px;text-align:right;">1</div><div class="t" style="left:130px;top:267.84px;font-size:12px;line-height:12px;font-weight:normal;color:#1a1a1a;width:43px;text-align:right;">1</div><div class="t" style="left:182px;top:267.84px;font-size:12px;line-height:12px;font-weight:normal;color:#1a1a1a;">1975</div><div class="t" style="left:509.5px;top:267.84px;font-size:12px;line-height:12px;font-weight:normal;color:#1a1a1a;">1.8</div><div class="t" style="left:0px;top:286.84px;font-size:12px;line-height:12px;font-weight:normal;color:#606060;width:75px;text-align:right;">14</div><div class="t" style="left:81px;top:286.84px;font-size:12px;line-height:12px;font-weight:normal;color:#1a1a1a;width:44px;text-align:right;">1</div><div class="t" style="left:130px;top:286.84px;font-size:12px;line-height:12px;font-weight:normal;color:#1a1a1a;width:43px;text-align:right;">1</div><div class="t" style="left:182px;top:286.84px;font-size:12px;line-height:12px;font-weight:normal;color:#1a1a1a;">1976</div><div class="t" style="left:509.5px;top:286.84px;font-size:12px;line-height:12px;font-weight:normal;color:#1a1a1a;">8.7</div><div class="t" style="left:0px;top:305.84px;font-size:12px;line-height:12px;font-weight:normal;color:#606060;width:75px;text-align:right;">15</div><div class="t" style="left:81px;top:305.84px;font-size:12px;line-height:12px;font-weight:normal;color:#1a1a1a;width:44px;text-align:right;">1</div><div class="t" style="left:130px;top:305.84px;font-size:12px;line-height:12px;font-weight:normal;color:#1a1a1a;width:43px;text-align:right;">1</div><div class="t" style="left:182px;top:305.84px;font-size:12px;line-height:12px;font-weight:normal;color:#1a1a1a;">1977</div><div class="t" style="left:509.5px;top:305.84px;font-size:12px;line-height:12px;font-weight:normal;color:#1a1a1a;">18.9</div><div class="t" style="left:0px;top:324.84px;font-size:12px;line-height:12px;font-weight:normal;color:#606060;width:75px;text-align:right;">16</div><div class="t" style="left:81px;top:324.84px;font-size:12px;line-height:12px;font-weight:normal;color:#1a1a1a;width:44px;text-align:right;">1</div><div class="t" style="left:130px;top:324.84px;font-size:12px;line-height:12px;font-weight:normal;color:#1a1a1a;width:43px;text-align:right;">1</div><div class="t" style="left:182px;top:324.84px;font-size:12px;line-height:12px;font-weight:normal;color:#1a1a1a;">1978</div><div class="t" style="left:509.5px;top:324.84px;font-size:12px;line-height:12px;font-weight:normal;color:#1a1a1a;">37.6</div><div class="t" style="left:0px;top:343.84px;font-size:12px;line-height:12px;font-weight:normal;color:#606060;width:75px;text-align:right;">17</div><div class="t" style="left:81px;top:343.84px;font-size:12px;line-height:12px;font-weight:normal;color:#1a1a1a;width:44px;text-align:right;">1</div><div class="t" style="left:130px;top:343.84px;font-size:12px;line-height:12px;font-weight:normal;color:#1a1a1a;width:43px;text-align:right;">1</div><div class="t" style="left:182px;top:343.84px;font-size:12px;line-height:12px;font-weight:normal;color:#1a1a1a;">1979</div><div class="t" style="left:509.5px;top:343.84px;font-size:12px;line-height:12px;font-weight:normal;color:#1a1a1a;">57.8</div><div class="t" style="left:0px;top:362.84px;font-size:12px;line-height:12px;font-weight:normal;color:#606060;width:75px;text-align:right;">18</div><div class="t" style="left:81px;top:362.84px;font-size:12px;line-height:12px;font-weight:normal;color:#1a1a1a;width:44px;text-align:right;">1</div><div class="t" style="left:130px;top:362.84px;font-size:12px;line-height:12px;font-weight:normal;color:#1a1a1a;width:43px;text-align:right;">1</div><div class="t" style="left:182px;top:362.84px;font-size:12px;line-height:12px;font-weight:normal;color:#1a1a1a;">1980</div><div class="t" style="left:509.5px;top:362.84px;font-size:12px;line-height:12px;font-weight:normal;color:#1a1a1a;">74.9</div><div class="t" style="left:0px;top:381.84px;font-size:12px;line-height:12px;font-weight:normal;color:#606060;width:75px;text-align:right;">19</div><div class="t" style="left:81px;top:381.84px;font-size:12px;line-height:12px;font-weight:normal;color:#1a1a1a;width:44px;text-align:right;">1</div><div class="t" style="left:130px;top:381.84px;font-size:12px;line-height:12px;font-weight:normal;color:#1a1a1a;width:43px;text-align:right;">1</div><div class="t" style="left:182px;top:381.84px;font-size:12px;line-height:12px;font-weight:normal;color:#1a1a1a;">1981</div><div class="t" style="left:509.5px;top:381.84px;font-size:12px;line-height:12px;font-weight:normal;color:#1a1a1a;">93.7</div><div class="t" style="left:0px;top:400.84px;font-size:12px;line-height:12px;font-weight:normal;color:#606060;width:75px;text-align:right;">20</div><div class="t" style="left:81px;top:400.84px;font-size:12px;line-height:12px;font-weight:normal;color:#1a1a1a;width:44px;text-align:right;">1</div><div class="t" style="left:130px;top:400.84px;font-size:12px;line-height:12px;font-weight:normal;color:#1a1a1a;width:43px;text-align:right;">1</div><div class="t" style="left:182px;top:400.84px;font-size:12px;line-height:12px;font-weight:normal;color:#1a1a1a;">1982</div><div class="t" style="left:509.5px;top:400.84px;font-size:12px;line-height:12px;font-weight:normal;color:#1a1a1a;">101.9</div><div class="t" style="left:0px;top:419.84px;font-size:12px;line-height:12px;font-weight:normal;color:#606060;width:75px;text-align:right;">21</div><div class="t" style="left:81px;top:419.84px;font-size:12px;line-height:12px;font-weight:normal;color:#1a1a1a;width:44px;text-align:right;">1</div><div class="t" style="left:130px;top:419.84px;font-size:12px;line-height:12px;font-weight:normal;color:#1a1a1a;width:43px;text-align:right;">1</div><div class="t" style="left:182px;top:419.84px;font-size:12px;line-height:12px;font-weight:normal;color:#1a1a1a;">1983</div><div class="t" style="left:509.5px;top:419.84px;font-size:12px;line-height:12px;font-weight:normal;color:#1a1a1a;">119.8</div><div class="t" style="left:0px;top:438.84px;font-size:12px;line-height:12px;font-weight:normal;color:#606060;width:75px;text-align:right;">22</div><div class="t" style="left:81px;top:438.84px;font-size:12px;line-height:12px;font-weight:normal;color:#1a1a1a;width:44px;text-align:right;">1</div><div class="t" style="left:130px;top:438.84px;font-size:12px;line-height:12px;font-weight:normal;color:#1a1a1a;width:43px;text-align:right;">1</div><div class="t" style="left:182px;top:438.84px;font-size:12px;line-height:12px;font-weight:normal;color:#1a1a1a;">1984</div><div class="t" style="left:509.5px;top:438.84px;font-size:12px;line-height:12px;font-weight:normal;color:#1a1a1a;">126.6</div><div class="t" style="left:0px;top:457.84px;font-size:12px;line-height:12px;font-weight:normal;color:#606060;width:75px;text-align:right;">23</div><div class="t" style="left:81px;top:457.84px;font-size:12px;line-height:12px;font-weight:normal;color:#1a1a1a;width:44px;text-align:right;">1</div><div class="t" style="left:130px;top:457.84px;font-size:12px;line-height:12px;font-weight:normal;color:#1a1a1a;width:43px;text-align:right;">1</div><div class="t" style="left:182px;top:457.84px;font-size:12px;line-height:12px;font-weight:normal;color:#1a1a1a;">1985</div><div class="t" style="left:509.5px;top:457.84px;font-size:12px;line-height:12px;font-weight:normal;color:#1a1a1a;">133.7</div><div class="t" style="left:0px;top:476.84px;font-size:12px;line-height:12px;font-weight:normal;color:#606060;width:75px;text-align:right;">24</div><div class="t" style="left:81px;top:476.84px;font-size:12px;line-height:12px;font-weight:normal;color:#1a1a1a;width:44px;text-align:right;">1</div><div class="t" style="left:130px;top:476.84px;font-size:12px;line-height:12px;font-weight:normal;color:#1a1a1a;width:43px;text-align:right;">1</div><div class="t" style="left:182px;top:476.84px;font-size:12px;line-height:12px;font-weight:normal;color:#1a1a1a;">1986</div><div class="t" style="left:509.5px;top:476.84px;font-size:12px;line-height:12px;font-weight:normal;color:#1a1a1a;">137.2</div><div class="t" style="left:0px;top:495.84px;font-size:12px;line-height:12px;font-weight:normal;color:#606060;width:75px;text-align:right;">25</div><div class="t" style="left:81px;top:495.84px;font-size:12px;line-height:12px;font-weight:normal;color:#1a1a1a;width:44px;text-align:right;">1</div><div class="t" style="left:130px;top:495.84px;font-size:12px;line-height:12px;font-weight:normal;color:#1a1a1a;width:43px;text-align:right;">1</div><div class="t" style="left:182px;top:495.84px;font-size:12px;line-height:12px;font-weight:normal;color:#1a1a1a;">1987</div><div class="t" style="left:509.5px;top:495.84px;font-size:12px;line-height:12px;font-weight:normal;color:#1a1a1a;">139.3</div><div class="t" style="left:0px;top:514.84px;font-size:12px;line-height:12px;font-weight:normal;color:#606060;width:75px;text-align:right;">26</div><div class="t" style="left:81px;top:514.84px;font-size:12px;line-height:12px;font-weight:normal;color:#1a1a1a;width:44px;text-align:right;">1</div><div class="t" style="left:130px;top:514.84px;font-size:12px;line-height:12px;font-weight:normal;color:#1a1a1a;width:43px;text-align:right;">1</div><div class="t" style="left:182px;top:514.84px;font-size:12px;line-height:12px;font-weight:normal;color:#1a1a1a;">1988</div><div class="t" style="left:509.5px;top:514.84px;font-size:12px;line-height:12px;font-weight:normal;color:#1a1a1a;">146.1</div><div class="t" style="left:0px;top:533.84px;font-size:12px;line-height:12px;font-weight:normal;color:#606060;width:75px;text-align:right;">27</div><div class="t" style="left:81px;top:533.84px;font-size:12px;line-height:12px;font-weight:normal;color:#1a1a1a;width:44px;text-align:right;">1</div><div class="t" style="left:130px;top:533.84px;font-size:12px;line-height:12px;font-weight:normal;color:#1a1a1a;width:43px;text-align:right;">1</div><div class="t" style="left:182px;top:533.84px;font-size:12px;line-height:12px;font-weight:normal;color:#1a1a1a;">1989</div><div class="t" style="left:509.5px;top:533.84px;font-size:12px;line-height:12px;font-weight:normal;color:#1a1a1a;">144.4</div><div class="t" style="left:0px;top:552.84px;font-size:12px;line-height:12px;font-weight:normal;color:#606060;width:75px;text-align:right;">28</div><div class="t" style="left:81px;top:552.84px;font-size:12px;line-height:12px;font-weight:normal;color:#1a1a1a;width:44px;text-align:right;">1</div><div class="t" style="left:130px;top:552.84px;font-size:12px;line-height:12px;font-weight:normal;color:#1a1a1a;width:43px;text-align:right;">1</div><div class="t" style="left:182px;top:552.84px;font-size:12px;line-height:12px;font-weight:normal;color:#1a1a1a;">1990</div><div class="t" style="left:509.5px;top:552.84px;font-size:12px;line-height:12px;font-weight:normal;color:#1a1a1a;">141.6</div><div class="t" style="left:0px;top:571.84px;font-size:12px;line-height:12px;font-weight:normal;color:#606060;width:75px;text-align:right;">29</div><div class="t" style="left:81px;top:571.84px;font-size:12px;line-height:12px;font-weight:normal;color:#1a1a1a;width:44px;text-align:right;">1</div><div class="t" style="left:130px;top:571.84px;font-size:12px;line-height:12px;font-weight:normal;color:#1a1a1a;width:43px;text-align:right;">1</div><div class="t" style="left:182px;top:571.84px;font-size:12px;line-height:12px;font-weight:normal;color:#1a1a1a;">1991</div><div class="t" style="left:509.5px;top:571.84px;font-size:12px;line-height:12px;font-weight:normal;color:#1a1a1a;">140.5</div><div class="t" style="left:0px;top:590.84px;font-size:12px;line-height:12px;font-weight:normal;color:#606060;width:75px;text-align:right;">30</div><div class="t" style="left:81px;top:590.84px;font-size:12px;line-height:12px;font-weight:normal;color:#1a1a1a;width:44px;text-align:right;">1</div><div class="t" style="left:130px;top:590.84px;font-size:12px;line-height:12px;font-weight:normal;color:#1a1a1a;width:43px;text-align:right;">1</div><div class="t" style="left:182px;top:590.84px;font-size:12px;line-height:12px;font-weight:normal;color:#1a1a1a;">1992</div><div class="t" style="left:509.5px;top:590.84px;font-size:12px;line-height:12px;font-weight:normal;color:#1a1a1a;">151.5</div><div class="r" style="left:700px;top:52px;width:3.8px;height:177px;background:rgba(150,150,150,0.5);border-radius:2px;"></div><div class="r" style="left:101px;top:590px;width:116px;height:3.5px;background:rgba(150,150,150,0.5);border-radius:2px;"></div></div><div class="r" style="left:526px;top:790px;width:709px;height:2.5px;background:#b4b4b4;"></div><div class="r" style="left:1050px;top:805px;width:58px;height:19px;background:#035ebd;border-radius:4px;"></div><div class="t" style="left:1050px;top:809.64px;font-size:12px;line-height:12px;font-weight:normal;color:#fff;width:58px;text-align:center;">OK</div><div class="r" style="left:1114px;top:805px;width:59px;height:20px;background:#fdfdfd;border:1px solid #dedede;border-radius:4px;box-sizing:border-box;"></div><div class="t" style="left:1114px;top:808.97px;font-size:12.2px;line-height:12.2px;font-weight:normal;color:#1a1a1a;width:59px;text-align:center;">Cancel</div><div class="r" style="left:1177.5px;top:805px;width:59px;height:20px;background:#fdfdfd;border:1px solid #dedede;border-radius:4px;box-sizing:border-box;"></div><div class="t" style="left:1177.5px;top:808.97px;font-size:12.2px;line-height:12.2px;font-weight:normal;color:#1a1a1a;width:59px;text-align:center;">Help</div>
</body></html>
